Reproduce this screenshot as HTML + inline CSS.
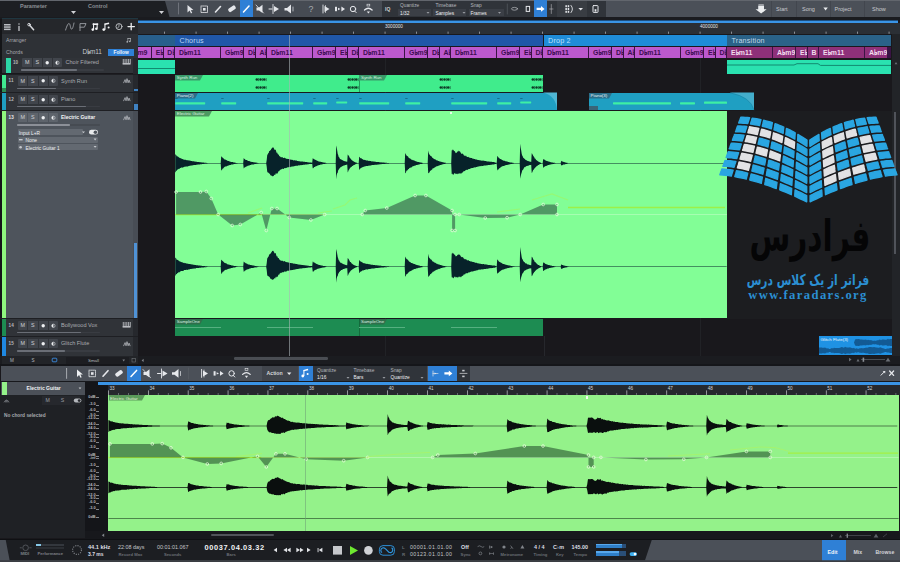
<!DOCTYPE html>
<html><head><meta charset="utf-8"><title>Studio One</title>
<style>
html,body{margin:0;padding:0;background:#18171b;}
#r{position:relative;width:900px;height:562px;overflow:hidden;background:#19181c;font-family:"Liberation Sans", sans-serif;}
#r div,#r span,#r svg{position:absolute;}
#r span{white-space:nowrap;}
</style></head><body><div id="r">
<div style="left:0px;top:0px;width:900px;height:17px;background:#4b5058;"></div>
<div style="left:165px;top:1px;width:217px;height:16px;background:#464b53;"></div>
<div style="left:0px;top:0px;width:900px;height:1px;background:#62666d;"></div>
<svg style="left:0;top:0" width="175" height="17"><polygon points="0,1 165,1 169.5,17 0,17" fill="#1d1f23"/></svg>
<span style="left:20px;top:4px;font-size:5.5px;line-height:5.5px;color:#8a8e94;font-weight:bold">Parameter</span>
<span style="left:88px;top:4px;font-size:5.5px;line-height:5.5px;color:#8a8e94;font-weight:bold">Control</span>
<svg style="left:0;top:0" width="175" height="17"><polygon points="71,11 76,11 73.5,14" fill="#d0d2d6"/><polygon points="159,11 164,11 161.5,14" fill="#d0d2d6"/></svg>
<div style="left:382px;top:1px;width:224px;height:16px;background:#30343a;"></div>
<div style="left:557px;top:1px;width:29.5px;height:16px;background:#393d43;"></div>
<div style="left:397.5px;top:9.4px;width:33px;height:6.6px;background:#3b3f46;"></div>
<div style="left:433px;top:9.4px;width:33px;height:6.6px;background:#3b3f46;"></div>
<div style="left:468.5px;top:9.4px;width:35px;height:6.6px;background:#3b3f46;"></div>
<div style="left:239.5px;top:0px;width:13.5px;height:17px;background:#2f80d6;"></div>
<div style="left:533.5px;top:0px;width:13.5px;height:17px;background:#2f80d6;"></div>
<svg style="left:0;top:0" width="900" height="17" fill="none" stroke="#e4e6ea" stroke-width="1.2" stroke-linecap="round">
<line x1="178.5" y1="3" x2="178.5" y2="14" stroke="#7a7e85" stroke-width="0.8"/>
<polygon points="187.5,5 187.5,12.5 189.6,10.6 191,13.4 192.2,12.8 190.8,10.2 193.4,10" fill="#e4e6ea" stroke="none"/>
<rect x="201" y="6" width="6.5" height="6.5" stroke-width="0.8" stroke-dasharray="1.2 0.8"/><rect x="203" y="8" width="2.6" height="2.6" fill="#e4e6ea" stroke="none"/>
<line x1="215.5" y1="12" x2="220.5" y2="6.5" stroke-width="1.6"/>
<rect x="228" y="6.8" width="8" height="4" rx="1.5" transform="rotate(-35 232 8.8)" fill="#e4e6ea" stroke="none"/>
<line x1="243.5" y1="12" x2="249" y2="6" stroke="#fff" stroke-width="1.5"/>
<polygon points="256.5,7.5 259,7.5 262.5,4.8 262.5,13 259,10.6 256.5,10.6" fill="#e4e6ea" stroke="none"/><line x1="256" y1="5" x2="263.5" y2="13" stroke-width="0.8"/>
<line x1="273" y1="4.5" x2="273" y2="13.5" stroke-width="0.9"/><polygon points="274,6 279,9 274,12" fill="#e4e6ea" stroke="none"/><line x1="269" y1="9" x2="272" y2="9" stroke-width="1"/>
<polygon points="284.5,8 287,8 291,4.6 291,13.4 287,10.4 284.5,10.4" fill="#e4e6ea" stroke="none"/><line x1="293" y1="7" x2="293" y2="11" stroke-width="0.7"/>
<text x="308.6" y="12.2" font-family="Liberation Sans, sans-serif" font-size="8.8" fill="#a8abb0" stroke="none">?</text>
<line x1="323" y1="5" x2="323" y2="13" stroke-width="0.9"/><polygon points="324.5,6 329.5,9 324.5,12" fill="#e4e6ea" stroke="none"/><line x1="325.5" y1="5.5" x2="325.5" y2="12.5" stroke-width="0.7"/>
<rect x="335" y="6.8" width="2" height="4.4" fill="#e4e6ea" stroke="none"/><polygon points="338,7.8 340.4,9 338,10.2" fill="#e4e6ea" stroke="none"/><polygon points="341.4,6.6 345,9 341.4,11.4" fill="#e4e6ea" stroke="none"/>
<circle cx="353" cy="9" r="2.7" stroke-width="1"/><line x1="354.6" y1="11" x2="356.2" y2="12.6" stroke-width="1"/>
<path d="M364.5,10 q3.8,-3.6 7.6,0" stroke-width="1.3"/><polygon points="366.8,11.4 370,11.4 368.4,13.6" fill="#e4e6ea" stroke="none"/><rect x="367" y="4.2" width="2.8" height="1.8" stroke-width="0.6"/>
<text x="385" y="11" font-family="Liberation Sans, sans-serif" font-size="5" font-weight="bold" fill="#c8cace" stroke="none">IQ</text>
<ellipse cx="514.5" cy="8.8" rx="3" ry="1.4" stroke-width="0.7" stroke="#b8babe"/>
<rect x="526.2" y="6.4" width="3.4" height="5" stroke-width="1" />
<polygon points="536.6,7.8 541,7.8 541,6 544.6,8.9 541,11.8 541,10 536.6,10" fill="#fff" stroke="none"/>
<line x1="551.3" y1="4.5" x2="551.3" y2="13.5" stroke-width="0.6" stroke="#b8babe"/><line x1="549.6" y1="9" x2="553" y2="9" stroke-width="0.6" stroke="#b8babe"/>
<g fill="#e4e6ea" stroke="none"><rect x="565.4" y="5.2" width="1.5" height="2"/><rect x="565.4" y="8" width="1.5" height="2"/><rect x="565.4" y="10.8" width="1.5" height="2"/><rect x="567.7" y="5.2" width="1.5" height="2"/><rect x="567.7" y="8" width="1.5" height="2"/><rect x="567.7" y="10.8" width="1.5" height="2"/></g>
<path d="M571,5.4 q3,3.6 0,7.2" stroke-width="0.9"/>
<polygon points="578.4,8 583,8 580.7,10.6" fill="#e4e6ea" stroke="none"/>
<rect x="593" y="5.6" width="5" height="6.8" rx="0.6" stroke-width="1"/><rect x="594.6" y="9.2" width="1.8" height="2.4" fill="#e4e6ea" stroke="none"/>
<line x1="507.3" y1="4" x2="507.3" y2="14" stroke="#585c63" stroke-width="0.7"/>
</svg>
<span style="left:400px;top:4px;font-size:4.8px;line-height:4.8px;color:#b4b7bc;">Quantize</span>
<span style="left:400px;top:12px;font-size:4.8px;line-height:4.8px;color:#eceef0;">1/32</span>
<span style="left:435.5px;top:4px;font-size:4.8px;line-height:4.8px;color:#b4b7bc;">Timebase</span>
<span style="left:435.5px;top:12px;font-size:4.8px;line-height:4.8px;color:#eceef0;">Samples</span>
<span style="left:470.5px;top:4px;font-size:4.8px;line-height:4.8px;color:#b4b7bc;">Snap</span>
<span style="left:470.5px;top:12px;font-size:4.8px;line-height:4.8px;color:#eceef0;">Frames</span>
<svg style="left:0;top:0" width="900" height="17" fill="#9a9da3"><polygon points="426.5,12 429.5,12 428,13.8"/><polygon points="462.5,12 465.5,12 464,13.8"/><polygon points="498,12 501,12 499.5,13.8"/></svg>
<div style="left:771px;top:1px;width:0.8px;height:16px;background:#42464e;"></div>
<div style="left:795.5px;top:1px;width:0.8px;height:16px;background:#42464e;"></div>
<div style="left:829.5px;top:1px;width:0.8px;height:16px;background:#42464e;"></div>
<div style="left:863.5px;top:1px;width:0.8px;height:16px;background:#42464e;"></div>
<svg style="left:754px;top:0" width="16" height="17"><polygon points="4.2,5.4 10,5.4 10,9.2 12.6,9.2 7.1,13.6 1.6,9.2 4.2,9.2" fill="#eceef0"/><rect x="4.4" y="4" width="5.4" height="1" fill="#9a9da3"/></svg>
<span style="left:776px;top:7px;font-size:5.5px;line-height:5.5px;color:#c8cace;">Start</span>
<span style="left:802px;top:7px;font-size:5.5px;line-height:5.5px;color:#c8cace;">Song</span>
<svg style="left:822px;top:0" width="8" height="17"><polygon points="1.4,7.6 5.8,7.6 3.6,10.6" fill="#eceef0"/></svg>
<span style="left:834.5px;top:7px;font-size:5.5px;line-height:5.5px;color:#c8cace;">Project</span>
<span style="left:872px;top:7px;font-size:5.5px;line-height:5.5px;color:#c8cace;">Show</span>
<div style="left:0px;top:17px;width:900px;height:3px;background:#1a1b1f;"></div>
<div style="left:138px;top:22.5px;width:762px;height:11.8px;background:#2b2f35;"></div>
<div style="left:138px;top:20px;width:760px;height:3px;background:#3a94e6;"></div>
<div style="left:138px;top:19.6px;width:760px;height:0.6px;background:#1d4f80;"></div>
<svg style="left:0;top:0" width="900" height="35"><rect x="164.2" y="31.6" width="0.7" height="2.2" fill="#b8bbc0"/><rect x="195.7" y="31.6" width="0.7" height="2.2" fill="#b8bbc0"/><rect x="227.2" y="31.6" width="0.7" height="2.2" fill="#b8bbc0"/><rect x="258.7" y="31.6" width="0.7" height="2.2" fill="#b8bbc0"/><rect x="290.2" y="31.6" width="0.7" height="2.2" fill="#b8bbc0"/><rect x="321.7" y="31.6" width="0.7" height="2.2" fill="#b8bbc0"/><rect x="353.2" y="31.6" width="0.7" height="2.2" fill="#b8bbc0"/><rect x="384.7" y="31.6" width="0.7" height="2.2" fill="#b8bbc0"/><rect x="416.2" y="31.6" width="0.7" height="2.2" fill="#b8bbc0"/><rect x="447.7" y="31.6" width="0.7" height="2.2" fill="#b8bbc0"/><rect x="479.2" y="31.6" width="0.7" height="2.2" fill="#b8bbc0"/><rect x="510.7" y="31.6" width="0.7" height="2.2" fill="#b8bbc0"/><rect x="542.2" y="31.6" width="0.7" height="2.2" fill="#b8bbc0"/><rect x="573.7" y="31.6" width="0.7" height="2.2" fill="#b8bbc0"/><rect x="605.2" y="31.6" width="0.7" height="2.2" fill="#b8bbc0"/><rect x="636.7" y="31.6" width="0.7" height="2.2" fill="#b8bbc0"/><rect x="668.2" y="31.6" width="0.7" height="2.2" fill="#b8bbc0"/><rect x="699.7" y="31.6" width="0.7" height="2.2" fill="#b8bbc0"/><rect x="731.2" y="31.6" width="0.7" height="2.2" fill="#b8bbc0"/><rect x="762.7" y="31.6" width="0.7" height="2.2" fill="#b8bbc0"/><rect x="794.2" y="31.6" width="0.7" height="2.2" fill="#b8bbc0"/><rect x="825.7" y="31.6" width="0.7" height="2.2" fill="#b8bbc0"/><rect x="857.2" y="31.6" width="0.7" height="2.2" fill="#b8bbc0"/><rect x="888.7" y="31.6" width="0.7" height="2.2" fill="#b8bbc0"/></svg>
<span style="left:385px;top:25px;font-size:4.6px;line-height:4.6px;color:#e0e2e6;">3000000</span>
<span style="left:700px;top:25px;font-size:4.6px;line-height:4.6px;color:#e0e2e6;">4000000</span>
<div style="left:138px;top:35px;width:36.6px;height:10.8px;background:#285f8c;"></div>
<div style="left:175.2px;top:35px;width:368.2px;height:10.8px;background:#2057a8;"></div>
<div style="left:544px;top:35px;width:182.6px;height:10.8px;background:#1f8cd8;"></div>
<div style="left:727.2px;top:35px;width:163.6px;height:10.8px;background:#2a6288;"></div>
<span style="left:179.5px;top:37px;font-size:7.2px;line-height:7.2px;color:#b8d4f4;letter-spacing:0.2px">Chorus</span>
<span style="left:548px;top:37px;font-size:7.2px;line-height:7.2px;color:#bfe0fa;letter-spacing:0.2px">Drop 2</span>
<span style="left:731.5px;top:37px;font-size:7.2px;line-height:7.2px;color:#c4d8e6;letter-spacing:0.2px">Transition</span>
<div style="left:138px;top:47px;width:753px;height:10.6px;background:#3a1444;"></div>
<div style="left:138px;top:47px;width:13.4px;height:10.6px;background:#bc59ce;overflow:hidden"><span style="left:-9px;top:2px;font-size:6.9px;line-height:8px;font-weight:bold;color:#3c0c50">G<span style="position:static;font-family:'DejaVu Sans',sans-serif;font-size:7.6px;letter-spacing:-0.5px;-webkit-text-stroke:0.45px currentColor">♭</span>m9</span></div>
<div style="left:152.0px;top:47px;width:10.7px;height:10.6px;background:#bc59ce;overflow:hidden"><span style="left:3.8px;top:2px;font-size:6.9px;line-height:8px;font-weight:bold;color:#3c0c50;letter-spacing:0.1px">E<span style="position:static;font-family:'DejaVu Sans',sans-serif;font-size:7.6px;letter-spacing:-0.5px;-webkit-text-stroke:0.45px currentColor">♭</span></span></div>
<div style="left:163.5px;top:47px;width:10.7px;height:10.6px;background:#bc59ce;overflow:hidden"><span style="left:3.8px;top:2px;font-size:6.9px;line-height:8px;font-weight:bold;color:#3c0c50;letter-spacing:0.1px">D<span style="position:static;font-family:'DejaVu Sans',sans-serif;font-size:7.6px;letter-spacing:-0.5px;-webkit-text-stroke:0.45px currentColor">♭</span></span></div>
<div style="left:175.2px;top:47px;width:45.2px;height:10.6px;background:#bc59ce;overflow:hidden"><span style="left:3.8px;top:2px;font-size:6.9px;line-height:8px;font-weight:bold;color:#3c0c50;letter-spacing:0.1px">D<span style="position:static;font-family:'DejaVu Sans',sans-serif;font-size:7.6px;letter-spacing:-0.5px;-webkit-text-stroke:0.45px currentColor">♭</span>m11</span></div>
<div style="left:221.2px;top:47px;width:22.2px;height:10.6px;background:#bc59ce;overflow:hidden"><span style="left:3.8px;top:2px;font-size:6.9px;line-height:8px;font-weight:bold;color:#3c0c50;letter-spacing:0.1px">G<span style="position:static;font-family:'DejaVu Sans',sans-serif;font-size:7.6px;letter-spacing:-0.5px;-webkit-text-stroke:0.45px currentColor">♭</span>m9</span></div>
<div style="left:244.2px;top:47px;width:10.7px;height:10.6px;background:#bc59ce;overflow:hidden"><span style="left:3.8px;top:2px;font-size:6.9px;line-height:8px;font-weight:bold;color:#3c0c50;letter-spacing:0.1px">D<span style="position:static;font-family:'DejaVu Sans',sans-serif;font-size:7.6px;letter-spacing:-0.5px;-webkit-text-stroke:0.45px currentColor">♭</span></span></div>
<div style="left:255.7px;top:47px;width:10.7px;height:10.6px;background:#bc59ce;overflow:hidden"><span style="left:3.8px;top:2px;font-size:6.9px;line-height:8px;font-weight:bold;color:#3c0c50;letter-spacing:0.1px">A<span style="position:static;font-family:'DejaVu Sans',sans-serif;font-size:7.6px;letter-spacing:-0.5px;-webkit-text-stroke:0.45px currentColor">♭</span></span></div>
<div style="left:267.2px;top:47px;width:45.2px;height:10.6px;background:#bc59ce;overflow:hidden"><span style="left:3.8px;top:2px;font-size:6.9px;line-height:8px;font-weight:bold;color:#3c0c50;letter-spacing:0.1px">D<span style="position:static;font-family:'DejaVu Sans',sans-serif;font-size:7.6px;letter-spacing:-0.5px;-webkit-text-stroke:0.45px currentColor">♭</span>m11</span></div>
<div style="left:313.2px;top:47px;width:22.2px;height:10.6px;background:#bc59ce;overflow:hidden"><span style="left:3.8px;top:2px;font-size:6.9px;line-height:8px;font-weight:bold;color:#3c0c50;letter-spacing:0.1px">G<span style="position:static;font-family:'DejaVu Sans',sans-serif;font-size:7.6px;letter-spacing:-0.5px;-webkit-text-stroke:0.45px currentColor">♭</span>m9</span></div>
<div style="left:336.2px;top:47px;width:10.7px;height:10.6px;background:#bc59ce;overflow:hidden"><span style="left:3.8px;top:2px;font-size:6.9px;line-height:8px;font-weight:bold;color:#3c0c50;letter-spacing:0.1px">E<span style="position:static;font-family:'DejaVu Sans',sans-serif;font-size:7.6px;letter-spacing:-0.5px;-webkit-text-stroke:0.45px currentColor">♭</span></span></div>
<div style="left:347.7px;top:47px;width:10.7px;height:10.6px;background:#bc59ce;overflow:hidden"><span style="left:3.8px;top:2px;font-size:6.9px;line-height:8px;font-weight:bold;color:#3c0c50;letter-spacing:0.1px">D<span style="position:static;font-family:'DejaVu Sans',sans-serif;font-size:7.6px;letter-spacing:-0.5px;-webkit-text-stroke:0.45px currentColor">♭</span></span></div>
<div style="left:359.2px;top:47px;width:45.2px;height:10.6px;background:#bc59ce;overflow:hidden"><span style="left:3.8px;top:2px;font-size:6.9px;line-height:8px;font-weight:bold;color:#3c0c50;letter-spacing:0.1px">D<span style="position:static;font-family:'DejaVu Sans',sans-serif;font-size:7.6px;letter-spacing:-0.5px;-webkit-text-stroke:0.45px currentColor">♭</span>m11</span></div>
<div style="left:405.2px;top:47px;width:22.2px;height:10.6px;background:#bc59ce;overflow:hidden"><span style="left:3.8px;top:2px;font-size:6.9px;line-height:8px;font-weight:bold;color:#3c0c50;letter-spacing:0.1px">G<span style="position:static;font-family:'DejaVu Sans',sans-serif;font-size:7.6px;letter-spacing:-0.5px;-webkit-text-stroke:0.45px currentColor">♭</span>m9</span></div>
<div style="left:428.2px;top:47px;width:10.7px;height:10.6px;background:#bc59ce;overflow:hidden"><span style="left:3.8px;top:2px;font-size:6.9px;line-height:8px;font-weight:bold;color:#3c0c50;letter-spacing:0.1px">D<span style="position:static;font-family:'DejaVu Sans',sans-serif;font-size:7.6px;letter-spacing:-0.5px;-webkit-text-stroke:0.45px currentColor">♭</span></span></div>
<div style="left:439.7px;top:47px;width:10.7px;height:10.6px;background:#bc59ce;overflow:hidden"><span style="left:3.8px;top:2px;font-size:6.9px;line-height:8px;font-weight:bold;color:#3c0c50;letter-spacing:0.1px">A<span style="position:static;font-family:'DejaVu Sans',sans-serif;font-size:7.6px;letter-spacing:-0.5px;-webkit-text-stroke:0.45px currentColor">♭</span></span></div>
<div style="left:451.2px;top:47px;width:45.2px;height:10.6px;background:#bc59ce;overflow:hidden"><span style="left:3.8px;top:2px;font-size:6.9px;line-height:8px;font-weight:bold;color:#3c0c50;letter-spacing:0.1px">D<span style="position:static;font-family:'DejaVu Sans',sans-serif;font-size:7.6px;letter-spacing:-0.5px;-webkit-text-stroke:0.45px currentColor">♭</span>m11</span></div>
<div style="left:497.2px;top:47px;width:22.2px;height:10.6px;background:#bc59ce;overflow:hidden"><span style="left:3.8px;top:2px;font-size:6.9px;line-height:8px;font-weight:bold;color:#3c0c50;letter-spacing:0.1px">G<span style="position:static;font-family:'DejaVu Sans',sans-serif;font-size:7.6px;letter-spacing:-0.5px;-webkit-text-stroke:0.45px currentColor">♭</span>m9</span></div>
<div style="left:520.2px;top:47px;width:10.7px;height:10.6px;background:#bc59ce;overflow:hidden"><span style="left:3.8px;top:2px;font-size:6.9px;line-height:8px;font-weight:bold;color:#3c0c50;letter-spacing:0.1px">E<span style="position:static;font-family:'DejaVu Sans',sans-serif;font-size:7.6px;letter-spacing:-0.5px;-webkit-text-stroke:0.45px currentColor">♭</span></span></div>
<div style="left:531.7px;top:47px;width:10.7px;height:10.6px;background:#bc59ce;overflow:hidden"><span style="left:3.8px;top:2px;font-size:6.9px;line-height:8px;font-weight:bold;color:#3c0c50;letter-spacing:0.1px">D<span style="position:static;font-family:'DejaVu Sans',sans-serif;font-size:7.6px;letter-spacing:-0.5px;-webkit-text-stroke:0.45px currentColor">♭</span></span></div>
<div style="left:543.2px;top:47px;width:45.2px;height:10.6px;background:#bc59ce;overflow:hidden"><span style="left:3.8px;top:2px;font-size:6.9px;line-height:8px;font-weight:bold;color:#3c0c50;letter-spacing:0.1px">D<span style="position:static;font-family:'DejaVu Sans',sans-serif;font-size:7.6px;letter-spacing:-0.5px;-webkit-text-stroke:0.45px currentColor">♭</span>m11</span></div>
<div style="left:589.2px;top:47px;width:22.2px;height:10.6px;background:#bc59ce;overflow:hidden"><span style="left:3.8px;top:2px;font-size:6.9px;line-height:8px;font-weight:bold;color:#3c0c50;letter-spacing:0.1px">G<span style="position:static;font-family:'DejaVu Sans',sans-serif;font-size:7.6px;letter-spacing:-0.5px;-webkit-text-stroke:0.45px currentColor">♭</span>m9</span></div>
<div style="left:612.2px;top:47px;width:10.7px;height:10.6px;background:#bc59ce;overflow:hidden"><span style="left:3.8px;top:2px;font-size:6.9px;line-height:8px;font-weight:bold;color:#3c0c50;letter-spacing:0.1px">D<span style="position:static;font-family:'DejaVu Sans',sans-serif;font-size:7.6px;letter-spacing:-0.5px;-webkit-text-stroke:0.45px currentColor">♭</span></span></div>
<div style="left:623.7px;top:47px;width:10.7px;height:10.6px;background:#bc59ce;overflow:hidden"><span style="left:3.8px;top:2px;font-size:6.9px;line-height:8px;font-weight:bold;color:#3c0c50;letter-spacing:0.1px">A<span style="position:static;font-family:'DejaVu Sans',sans-serif;font-size:7.6px;letter-spacing:-0.5px;-webkit-text-stroke:0.45px currentColor">♭</span></span></div>
<div style="left:635.2px;top:47px;width:45.2px;height:10.6px;background:#bc59ce;overflow:hidden"><span style="left:3.8px;top:2px;font-size:6.9px;line-height:8px;font-weight:bold;color:#3c0c50;letter-spacing:0.1px">D<span style="position:static;font-family:'DejaVu Sans',sans-serif;font-size:7.6px;letter-spacing:-0.5px;-webkit-text-stroke:0.45px currentColor">♭</span>m11</span></div>
<div style="left:681.2px;top:47px;width:22.2px;height:10.6px;background:#bc59ce;overflow:hidden"><span style="left:3.8px;top:2px;font-size:6.9px;line-height:8px;font-weight:bold;color:#3c0c50;letter-spacing:0.1px">G<span style="position:static;font-family:'DejaVu Sans',sans-serif;font-size:7.6px;letter-spacing:-0.5px;-webkit-text-stroke:0.45px currentColor">♭</span>m9</span></div>
<div style="left:704.2px;top:47px;width:10.7px;height:10.6px;background:#bc59ce;overflow:hidden"><span style="left:3.8px;top:2px;font-size:6.9px;line-height:8px;font-weight:bold;color:#3c0c50;letter-spacing:0.1px">E<span style="position:static;font-family:'DejaVu Sans',sans-serif;font-size:7.6px;letter-spacing:-0.5px;-webkit-text-stroke:0.45px currentColor">♭</span></span></div>
<div style="left:715.7px;top:47px;width:10.7px;height:10.6px;background:#bc59ce;overflow:hidden"><span style="left:3.8px;top:2px;font-size:6.9px;line-height:8px;font-weight:bold;color:#3c0c50;letter-spacing:0.1px">D<span style="position:static;font-family:'DejaVu Sans',sans-serif;font-size:7.6px;letter-spacing:-0.5px;-webkit-text-stroke:0.45px currentColor">♭</span></span></div>
<div style="left:727.2px;top:47px;width:45.2px;height:10.6px;background:#8e3079;overflow:hidden"><span style="left:3.8px;top:2px;font-size:6.9px;line-height:8px;font-weight:bold;color:#f2dcee;letter-spacing:0.1px">E<span style="position:static;font-family:'DejaVu Sans',sans-serif;font-size:7.6px;letter-spacing:-0.5px;-webkit-text-stroke:0.45px currentColor">♭</span>m11</span></div>
<div style="left:773.2px;top:47px;width:22.2px;height:10.6px;background:#8e3079;overflow:hidden"><span style="left:3.8px;top:2px;font-size:6.9px;line-height:8px;font-weight:bold;color:#f2dcee;letter-spacing:0.1px">A<span style="position:static;font-family:'DejaVu Sans',sans-serif;font-size:7.6px;letter-spacing:-0.5px;-webkit-text-stroke:0.45px currentColor">♭</span>m9</span></div>
<div style="left:796.2px;top:47px;width:10.7px;height:10.6px;background:#8e3079;overflow:hidden"><span style="left:3.8px;top:2px;font-size:6.9px;line-height:8px;font-weight:bold;color:#f2dcee;letter-spacing:0.1px">E<span style="position:static;font-family:'DejaVu Sans',sans-serif;font-size:7.6px;letter-spacing:-0.5px;-webkit-text-stroke:0.45px currentColor">♭</span></span></div>
<div style="left:807.7px;top:47px;width:10.7px;height:10.6px;background:#8e3079;overflow:hidden"><span style="left:3.8px;top:2px;font-size:6.9px;line-height:8px;font-weight:bold;color:#f2dcee;letter-spacing:0.1px">B</span></div>
<div style="left:819.2px;top:47px;width:45.2px;height:10.6px;background:#8e3079;overflow:hidden"><span style="left:3.8px;top:2px;font-size:6.9px;line-height:8px;font-weight:bold;color:#f2dcee;letter-spacing:0.1px">E<span style="position:static;font-family:'DejaVu Sans',sans-serif;font-size:7.6px;letter-spacing:-0.5px;-webkit-text-stroke:0.45px currentColor">♭</span>m11</span></div>
<div style="left:865.2px;top:47px;width:22.2px;height:10.6px;background:#8e3079;overflow:hidden"><span style="left:3.8px;top:2px;font-size:6.9px;line-height:8px;font-weight:bold;color:#f2dcee;letter-spacing:0.1px">A<span style="position:static;font-family:'DejaVu Sans',sans-serif;font-size:7.6px;letter-spacing:-0.5px;-webkit-text-stroke:0.45px currentColor">♭</span>m9</span></div>
<div style="left:384.7px;top:58px;width:0.6px;height:298px;background:#212226;"></div>
<div style="left:699.7px;top:58px;width:0.6px;height:298px;background:#212226;"></div>
<div style="left:138px;top:60px;width:36.8px;height:13.6px;background:#2ae2b0;"></div>
<div style="left:138px;top:67.6px;width:36.8px;height:1px;background:#128a70;"></div>
<div style="left:727.2px;top:60px;width:163.8px;height:13.6px;background:#2ae2b0;"></div>
<svg style="left:727px;top:60px" width="165" height="14"><path d="M0,5 L67,5 70,3.7 91,3.7 93.5,5.4 164,5.4" stroke="#128a70" stroke-width="1" fill="none"/></svg>
<div style="left:175.2px;top:74.6px;width:368.2px;height:17.4px;background:#40ec8c;"></div>
<div style="left:358.6px;top:74.6px;width:0.8px;height:17.4px;background:#249a5c;"></div>
<svg style="left:175.2px;top:74.6px" width="29" height="6"><polygon points="0,0 28,0 25,5.4 0,5.4" fill="#3a9a6a"/></svg><span style="left:176.79999999999998px;top:76px;font-size:4.4px;line-height:4.4px;color:#d8f4e0;">Synth Run</span>
<svg style="left:359.4px;top:74.6px" width="29" height="6"><polygon points="0,0 28,0 25,5.4 0,5.4" fill="#3a9a6a"/></svg><span style="left:361.0px;top:76px;font-size:4.4px;line-height:4.4px;color:#d8f4e0;">Synth Run</span>
<svg style="left:0;top:0" width="900" height="100"><circle cx="256.8" cy="79.6" r="1.25" fill="#0e3a26"/><circle cx="260.5" cy="79.6" r="1.25" fill="#0e3a26"/><circle cx="264.2" cy="79.6" r="1.25" fill="#0e3a26"/><rect x="258.4" y="78.1" width="0.6" height="3" fill="#0e3a26"/><rect x="262.1" y="78.1" width="0.6" height="3" fill="#0e3a26"/><rect x="265.8" y="78.1" width="0.6" height="3" fill="#0e3a26"/><circle cx="256.8" cy="87.6" r="1.25" fill="#0e3a26"/><circle cx="260.5" cy="87.6" r="1.25" fill="#0e3a26"/><circle cx="264.2" cy="87.6" r="1.25" fill="#0e3a26"/><rect x="258.4" y="86.1" width="0.6" height="3" fill="#0e3a26"/><rect x="262.1" y="86.1" width="0.6" height="3" fill="#0e3a26"/><rect x="265.8" y="86.1" width="0.6" height="3" fill="#0e3a26"/><circle cx="348.8" cy="79.6" r="1.25" fill="#0e3a26"/><circle cx="352.5" cy="79.6" r="1.25" fill="#0e3a26"/><circle cx="356.2" cy="79.6" r="1.25" fill="#0e3a26"/><rect x="350.4" y="78.1" width="0.6" height="3" fill="#0e3a26"/><rect x="354.1" y="78.1" width="0.6" height="3" fill="#0e3a26"/><rect x="357.8" y="78.1" width="0.6" height="3" fill="#0e3a26"/><circle cx="348.8" cy="87.6" r="1.25" fill="#0e3a26"/><circle cx="352.5" cy="87.6" r="1.25" fill="#0e3a26"/><circle cx="356.2" cy="87.6" r="1.25" fill="#0e3a26"/><rect x="350.4" y="86.1" width="0.6" height="3" fill="#0e3a26"/><rect x="354.1" y="86.1" width="0.6" height="3" fill="#0e3a26"/><rect x="357.8" y="86.1" width="0.6" height="3" fill="#0e3a26"/><circle cx="440.8" cy="79.6" r="1.25" fill="#0e3a26"/><circle cx="444.5" cy="79.6" r="1.25" fill="#0e3a26"/><circle cx="448.2" cy="79.6" r="1.25" fill="#0e3a26"/><rect x="442.4" y="78.1" width="0.6" height="3" fill="#0e3a26"/><rect x="446.1" y="78.1" width="0.6" height="3" fill="#0e3a26"/><rect x="449.8" y="78.1" width="0.6" height="3" fill="#0e3a26"/><circle cx="440.8" cy="87.6" r="1.25" fill="#0e3a26"/><circle cx="444.5" cy="87.6" r="1.25" fill="#0e3a26"/><circle cx="448.2" cy="87.6" r="1.25" fill="#0e3a26"/><rect x="442.4" y="86.1" width="0.6" height="3" fill="#0e3a26"/><rect x="446.1" y="86.1" width="0.6" height="3" fill="#0e3a26"/><rect x="449.8" y="86.1" width="0.6" height="3" fill="#0e3a26"/><circle cx="532.8" cy="79.6" r="1.25" fill="#0e3a26"/><circle cx="536.5" cy="79.6" r="1.25" fill="#0e3a26"/><circle cx="540.2" cy="79.6" r="1.25" fill="#0e3a26"/><rect x="534.4" y="78.1" width="0.6" height="3" fill="#0e3a26"/><rect x="538.1" y="78.1" width="0.6" height="3" fill="#0e3a26"/><rect x="541.8" y="78.1" width="0.6" height="3" fill="#0e3a26"/><circle cx="532.8" cy="87.6" r="1.25" fill="#0e3a26"/><circle cx="536.5" cy="87.6" r="1.25" fill="#0e3a26"/><circle cx="540.2" cy="87.6" r="1.25" fill="#0e3a26"/><rect x="534.4" y="86.1" width="0.6" height="3" fill="#0e3a26"/><rect x="538.1" y="86.1" width="0.6" height="3" fill="#0e3a26"/><rect x="541.8" y="86.1" width="0.6" height="3" fill="#0e3a26"/></svg>
<div style="left:175.2px;top:92.6px;width:382px;height:17.6px;background:#1f9fc2;"></div>
<div style="left:589px;top:92.6px;width:165px;height:17.6px;background:#1f9fc2;"></div>
<svg style="left:540px;top:92px" width="220" height="19"><path d="M3,0.6 L17,0.6 L17,18 Q16,4 3,0.6Z" fill="#4fb6d4"/><path d="M190,0.6 L214,0.6 L214,18.2 Q211,5 190,0.6Z" fill="#43adcb"/><path d="M190,0.8 Q211,5 214,18.2" stroke="#1a7e9c" stroke-width="0.5" fill="none"/></svg>
<svg style="left:175.2px;top:92.6px" width="24" height="6"><polygon points="0,0 23,0 20,5.4 0,5.4" fill="#2b6f8a"/></svg><span style="left:176.79999999999998px;top:94px;font-size:4.4px;line-height:4.4px;color:#e6f2f8;">Piano(2)</span>
<svg style="left:589px;top:92.6px" width="24" height="6"><polygon points="0,0 23,0 20,5.4 0,5.4" fill="#2b6f8a"/></svg><span style="left:590.6px;top:94px;font-size:4.4px;line-height:4.4px;color:#e6f2f8;">Piano(3)</span>
<div style="left:589px;top:105.6px;width:9px;height:4.6px;background:#3a6478;"></div>
<svg style="left:0;top:0" width="900" height="112"><rect x="175.2" y="102.2" width="30.0" height="2.2" rx="0.6" fill="#3ef0a4"/><rect x="221.2" y="102.2" width="15.0" height="2.2" rx="0.6" fill="#3ef0a4"/><rect x="175.2" y="98.4" width="2.4" height="0.6" fill="#16506a"/><rect x="221.2" y="98.4" width="2.4" height="0.6" fill="#16506a"/><rect x="267.2" y="102.2" width="36.0" height="2.2" rx="0.6" fill="#3ef0a4"/><rect x="313.2" y="102.2" width="14.0" height="2.2" rx="0.6" fill="#3ef0a4"/><rect x="336.2" y="101.4" width="11.0" height="2" rx="0.6" fill="#3ef0a4"/><rect x="267.2" y="98.4" width="2.4" height="0.6" fill="#16506a"/><rect x="313.2" y="98.4" width="2.4" height="0.6" fill="#16506a"/><rect x="336.2" y="98.4" width="2.4" height="0.6" fill="#16506a"/><rect x="359.2" y="102.2" width="30.0" height="2.2" rx="0.6" fill="#3ef0a4"/><rect x="405.2" y="102.2" width="15.0" height="2.2" rx="0.6" fill="#3ef0a4"/><rect x="359.2" y="98.4" width="2.4" height="0.6" fill="#16506a"/><rect x="405.2" y="98.4" width="2.4" height="0.6" fill="#16506a"/><rect x="451.2" y="102.2" width="36.0" height="2.2" rx="0.6" fill="#3ef0a4"/><rect x="497.2" y="102.2" width="14.0" height="2.2" rx="0.6" fill="#3ef0a4"/><rect x="520.2" y="101.4" width="11.0" height="2" rx="0.6" fill="#3ef0a4"/><rect x="451.2" y="98.4" width="2.4" height="0.6" fill="#16506a"/><rect x="497.2" y="98.4" width="2.4" height="0.6" fill="#16506a"/><rect x="520.2" y="98.4" width="2.4" height="0.6" fill="#16506a"/><rect x="613.0" y="102.2" width="58.0" height="2.2" rx="0.6" fill="#3ef0a4"/><rect x="680.0" y="102.2" width="15.0" height="2.2" rx="0.6" fill="#3ef0a4"/><rect x="704.0" y="101.6" width="23.0" height="2.2" rx="0.6" fill="#3ef0a4"/></svg>
<div style="left:175.2px;top:111px;width:551.8px;height:207px;background:#82fe96;"></div>
<svg style="left:175.2px;top:111px" width="38" height="6"><polygon points="0,0 37,0 34,5.4 0,5.4" fill="#4d9a62"/></svg><span style="left:176.79999999999998px;top:112px;font-size:4.4px;line-height:4.4px;color:#dff4e2;">Electric Guitar</span>
<div style="left:449.8px;top:111.8px;width:2.6px;height:2.6px;background:#e8fbe8;"></div>
<svg style="left:0;top:0" width="900" height="330"><rect x="175.2" y="214.1" width="551.8" height="0.7" fill="#c4fcc8" opacity="0.8"/><rect x="175.2" y="214" width="88" height="1.3" fill="#9cf048"/><rect x="263.2" y="214.1" width="62" height="0.9" fill="#a8f66a" opacity="0.7"/><polygon points="176.1,214.5 176.1,192.0 200.5,192.0 206.3,191.5 211.3,198.5 218.2,214.5 232.2,225.5 240.3,224.5 261.2,212.5 266.3,230.5 271.8,208.5 277.1,208.5 289.3,217.5 310.9,220.0 324.7,214.5 324.7,214.5" fill="rgba(40,70,60,0.55)"/><circle cx="176.1" cy="192.0" r="1.35" fill="none" stroke="#e6f8dc" stroke-width="0.75"/><circle cx="200.5" cy="192.0" r="1.35" fill="none" stroke="#e6f8dc" stroke-width="0.75"/><circle cx="206.3" cy="191.5" r="1.35" fill="none" stroke="#e6f8dc" stroke-width="0.75"/><circle cx="211.3" cy="198.5" r="1.35" fill="none" stroke="#e6f8dc" stroke-width="0.75"/><circle cx="218.2" cy="214.5" r="1.35" fill="none" stroke="#e6f8dc" stroke-width="0.75"/><circle cx="232.2" cy="225.5" r="1.35" fill="none" stroke="#e6f8dc" stroke-width="0.75"/><circle cx="240.3" cy="224.5" r="1.35" fill="none" stroke="#e6f8dc" stroke-width="0.75"/><circle cx="261.2" cy="212.5" r="1.35" fill="none" stroke="#e6f8dc" stroke-width="0.75"/><circle cx="266.3" cy="230.5" r="1.35" fill="none" stroke="#e6f8dc" stroke-width="0.75"/><circle cx="271.8" cy="208.5" r="1.35" fill="none" stroke="#e6f8dc" stroke-width="0.75"/><circle cx="277.1" cy="208.5" r="1.35" fill="none" stroke="#e6f8dc" stroke-width="0.75"/><circle cx="289.3" cy="217.5" r="1.35" fill="none" stroke="#e6f8dc" stroke-width="0.75"/><circle cx="310.9" cy="220.0" r="1.35" fill="none" stroke="#e6f8dc" stroke-width="0.75"/><circle cx="324.7" cy="214.5" r="1.35" fill="none" stroke="#e6f8dc" stroke-width="0.75"/><polygon points="362.2,214.5 362.2,214.5 365.2,210.5 386.8,208.0 415.1,195.5 425.9,195.5 452.1,210.5 452.1,230.5 455.1,230.5 455.1,214.5 459.2,214.5 485.2,218.0 507.1,217.7 520.2,214.5 543.2,204.5 557.0,204.5 557.0,214.5 557.0,214.5" fill="rgba(40,70,60,0.55)"/><circle cx="362.2" cy="214.5" r="1.35" fill="none" stroke="#e6f8dc" stroke-width="0.75"/><circle cx="365.2" cy="210.5" r="1.35" fill="none" stroke="#e6f8dc" stroke-width="0.75"/><circle cx="386.8" cy="208.0" r="1.35" fill="none" stroke="#e6f8dc" stroke-width="0.75"/><circle cx="415.1" cy="195.5" r="1.35" fill="none" stroke="#e6f8dc" stroke-width="0.75"/><circle cx="425.9" cy="195.5" r="1.35" fill="none" stroke="#e6f8dc" stroke-width="0.75"/><circle cx="452.1" cy="210.5" r="1.35" fill="none" stroke="#e6f8dc" stroke-width="0.75"/><circle cx="452.1" cy="230.5" r="1.35" fill="none" stroke="#e6f8dc" stroke-width="0.75"/><circle cx="455.1" cy="230.5" r="1.35" fill="none" stroke="#e6f8dc" stroke-width="0.75"/><circle cx="455.1" cy="214.5" r="1.35" fill="none" stroke="#e6f8dc" stroke-width="0.75"/><circle cx="459.2" cy="214.5" r="1.35" fill="none" stroke="#e6f8dc" stroke-width="0.75"/><circle cx="485.2" cy="218.0" r="1.35" fill="none" stroke="#e6f8dc" stroke-width="0.75"/><circle cx="507.1" cy="217.7" r="1.35" fill="none" stroke="#e6f8dc" stroke-width="0.75"/><circle cx="520.2" cy="214.5" r="1.35" fill="none" stroke="#e6f8dc" stroke-width="0.75"/><circle cx="543.2" cy="204.5" r="1.35" fill="none" stroke="#e6f8dc" stroke-width="0.75"/><circle cx="557.0" cy="204.5" r="1.35" fill="none" stroke="#e6f8dc" stroke-width="0.75"/><circle cx="557.0" cy="214.5" r="1.35" fill="none" stroke="#e6f8dc" stroke-width="0.75"/><path d="M568,207.4 L725,207.4" stroke="#9cf048" stroke-width="1.5" fill="none"/><path d="M248,213 L262,208 M333,209 L345,205 350,200 357,198 M497,212 L520,209 M532,200 L545,196 552,194 560,197 568,200 M318,213 L332,211" stroke="#a6f45a" stroke-width="1.2" fill="none" opacity="0.55"/><path d="M175.2,154.1 L175.7,154.7 L176.2,155.1 L176.7,156.3 L177.2,156.5 L177.7,156.3 L178.2,156.8 L178.7,157.3 L179.2,157.6 L179.7,158.0 L180.2,158.1 L180.7,158.3 L181.2,158.8 L181.7,158.6 L182.2,158.9 L182.7,159.0 L183.2,159.4 L183.7,159.5 L184.2,159.4 L184.7,159.9 L185.2,159.6 L185.7,159.9 L186.2,160.0 L186.7,160.2 L187.2,160.2 L187.7,160.3 L188.2,160.3 L188.7,160.5 L189.2,160.5 L189.7,160.6 L190.2,160.7 L190.7,160.8 L191.2,161.0 L191.7,160.9 L192.2,161.2 L192.7,161.2 L193.2,161.3 L193.7,161.3 L194.2,161.4 L194.7,161.5 L195.2,161.5 L195.7,161.7 L196.2,161.8 L196.7,161.8 L197.2,161.9 L197.7,161.9 L198.2,162.1 L198.7,162.1 L199.2,162.1 L199.7,162.2 L200.2,162.2 L200.7,162.3 L201.2,162.3 L201.7,162.4 L202.2,162.5 L202.7,162.5 L203.2,162.6 L203.7,162.6 L204.2,162.7 L204.7,162.7 L205.2,162.8 L205.7,162.8 L206.2,162.8 L206.7,162.9 L207.2,162.9 L207.7,163.0 L208.2,163.0 L208.7,163.0 L209.2,163.0 L209.7,163.0 L210.2,163.0 L210.7,163.0 L211.2,163.0 L211.7,163.0 L212.2,163.0 L212.7,163.0 L213.2,163.0 L213.7,163.0 L214.2,163.0 L214.7,163.0 L215.2,163.0 L215.7,163.0 L216.2,163.0 L216.7,163.0 L217.2,163.0 L217.7,163.0 L218.2,163.0 L218.7,163.0 L219.2,163.0 L219.7,163.0 L220.2,163.0 L220.7,163.0 L221.2,156.6 L221.7,156.4 L222.2,157.4 L222.7,157.5 L223.2,158.2 L223.7,158.6 L224.2,159.2 L224.7,159.5 L225.2,159.6 L225.7,159.8 L226.2,160.0 L226.7,160.2 L227.2,160.5 L227.7,161.0 L228.2,161.1 L228.7,161.1 L229.2,161.3 L229.7,161.4 L230.2,161.7 L230.7,161.7 L231.2,161.9 L231.7,162.0 L232.2,162.1 L232.7,162.1 L233.2,162.3 L233.7,162.4 L234.2,162.5 L234.7,162.6 L235.2,162.7 L235.7,162.7 L236.2,162.9 L236.7,162.9 L237.2,162.9 L237.7,163.0 L238.2,163.0 L238.7,163.0 L239.2,163.0 L239.7,163.0 L240.2,163.0 L240.7,163.0 L241.2,163.0 L241.7,163.0 L242.2,163.0 L242.7,163.0 L243.2,163.0 L243.7,158.1 L244.2,158.7 L244.7,159.0 L245.2,159.4 L245.7,159.9 L246.2,160.0 L246.7,160.0 L247.2,160.3 L247.7,160.8 L248.2,161.0 L248.7,161.0 L249.2,161.1 L249.7,161.3 L250.2,161.6 L250.7,161.7 L251.2,161.7 L251.7,161.9 L252.2,161.9 L252.7,162.1 L253.2,162.2 L253.7,162.2 L254.2,162.3 L254.7,162.4 L255.2,162.5 L255.7,162.6 L256.2,162.6 L256.7,162.8 L257.2,162.8 L257.7,162.9 L258.2,162.9 L258.7,163.0 L259.2,163.0 L259.7,163.0 L260.2,163.0 L260.7,163.0 L261.2,163.0 L261.7,163.0 L262.2,163.0 L262.7,163.0 L263.2,163.0 L263.7,163.0 L264.2,163.0 L264.7,163.0 L265.2,163.0 L265.7,163.0 L266.2,163.0 L266.7,159.9 L267.2,155.2 L267.7,154.3 L268.2,153.3 L268.7,153.0 L269.2,150.9 L269.7,151.0 L270.2,150.3 L270.7,150.2 L271.2,149.1 L271.7,148.6 L272.2,147.4 L272.7,147.7 L273.2,147.3 L273.7,148.1 L274.2,149.1 L274.7,150.0 L275.2,149.7 L275.7,149.8 L276.2,151.6 L276.7,153.0 L277.2,152.6 L277.7,154.1 L278.2,154.5 L278.7,154.6 L279.2,155.9 L279.7,156.3 L280.2,156.6 L280.7,157.3 L281.2,157.1 L281.7,157.5 L282.2,157.0 L282.7,157.5 L283.2,157.9 L283.7,158.1 L284.2,157.7 L284.7,157.8 L285.2,158.1 L285.7,158.6 L286.2,158.5 L286.7,158.9 L287.2,158.7 L287.7,159.0 L288.2,159.1 L288.7,159.1 L289.2,159.3 L289.7,159.3 L290.2,159.7 L290.7,159.5 L291.2,159.5 L291.7,159.9 L292.2,159.8 L292.7,159.9 L293.2,160.2 L293.7,160.4 L294.2,160.2 L294.7,160.3 L295.2,160.6 L295.7,160.4 L296.2,160.6 L296.7,160.6 L297.2,160.9 L297.7,160.9 L298.2,161.1 L298.7,161.2 L299.2,161.3 L299.7,161.2 L300.2,161.4 L300.7,161.4 L301.2,161.4 L301.7,161.5 L302.2,161.6 L302.7,161.6 L303.2,161.8 L303.7,161.7 L304.2,161.8 L304.7,161.8 L305.2,161.9 L305.7,162.0 L306.2,162.0 L306.7,162.1 L307.2,162.2 L307.7,162.3 L308.2,162.3 L308.7,162.4 L309.2,162.5 L309.7,162.6 L310.2,162.6 L310.7,162.6 L311.2,162.6 L311.7,162.7 L312.2,162.8 L312.7,158.2 L313.2,158.4 L313.7,159.0 L314.2,159.2 L314.7,159.4 L315.2,159.7 L315.7,160.1 L316.2,160.3 L316.7,160.5 L317.2,160.7 L317.7,161.1 L318.2,161.3 L318.7,161.4 L319.2,161.5 L319.7,161.7 L320.2,161.8 L320.7,161.8 L321.2,162.1 L321.7,162.1 L322.2,162.2 L322.7,162.3 L323.2,162.5 L323.7,162.5 L324.2,162.6 L324.7,162.7 L325.2,162.7 L325.7,162.8 L326.2,162.9 L326.7,163.0 L327.2,163.0 L327.7,163.0 L328.2,163.0 L328.7,163.0 L329.2,163.0 L329.7,163.0 L330.2,163.0 L330.7,163.0 L331.2,163.0 L331.7,163.0 L332.2,163.0 L332.7,163.0 L333.2,163.0 L333.7,163.0 L334.2,163.0 L334.7,163.0 L335.2,163.0 L335.7,163.0 L336.2,145.6 L336.7,147.5 L337.2,150.5 L337.7,153.7 L338.2,155.1 L338.7,156.9 L339.2,157.2 L339.7,158.4 L340.2,159.0 L340.7,159.3 L341.2,159.4 L341.7,159.8 L342.2,160.1 L342.7,160.3 L343.2,160.7 L343.7,160.8 L344.2,161.1 L344.7,161.2 L345.2,161.3 L345.7,161.5 L346.2,161.6 L346.7,161.8 L347.2,161.8 L347.7,154.6 L348.2,155.1 L348.7,155.8 L349.2,156.6 L349.7,157.8 L350.2,158.6 L350.7,158.6 L351.2,159.4 L351.7,160.1 L352.2,160.4 L352.7,160.8 L353.2,161.0 L353.7,161.5 L354.2,161.7 L354.7,162.0 L355.2,162.2 L355.7,162.4 L356.2,162.6 L356.7,162.7 L357.2,162.9 L357.7,163.0 L358.2,163.0 L358.7,163.0 L359.2,156.7 L359.7,157.1 L360.2,157.9 L360.7,158.2 L361.2,158.3 L361.7,158.6 L362.2,159.1 L362.7,159.2 L363.2,159.6 L363.7,159.9 L364.2,159.8 L364.7,159.9 L365.2,160.3 L365.7,160.1 L366.2,160.4 L366.7,160.6 L367.2,160.4 L367.7,160.6 L368.2,160.7 L368.7,160.9 L369.2,160.8 L369.7,160.9 L370.2,161.0 L370.7,161.0 L371.2,161.3 L371.7,161.4 L372.2,161.3 L372.7,161.4 L373.2,161.6 L373.7,161.6 L374.2,161.7 L374.7,161.6 L375.2,161.8 L375.7,161.8 L376.2,161.9 L376.7,161.9 L377.2,161.9 L377.7,162.1 L378.2,162.1 L378.7,162.1 L379.2,162.2 L379.7,162.3 L380.2,162.2 L380.7,162.4 L381.2,162.3 L381.7,162.5 L382.2,162.5 L382.7,162.6 L383.2,162.5 L383.7,162.5 L384.2,162.6 L384.7,162.7 L385.2,162.7 L385.7,162.8 L386.2,162.8 L386.7,162.8 L387.2,162.9 L387.7,162.9 L388.2,162.9 L388.7,162.9 L389.2,163.0 L389.7,163.0 L390.2,163.0 L390.7,163.0 L391.2,163.0 L391.7,163.0 L392.2,163.0 L392.7,163.0 L393.2,163.0 L393.7,163.0 L394.2,163.0 L394.7,163.0 L395.2,163.0 L395.7,163.0 L396.2,163.0 L396.7,163.0 L397.2,163.0 L397.7,163.0 L398.2,163.0 L398.7,163.0 L399.2,163.0 L399.7,163.0 L400.2,163.0 L400.7,163.0 L401.2,163.0 L401.7,163.0 L402.2,163.0 L402.7,163.0 L403.2,163.0 L403.7,163.0 L404.2,163.0 L404.7,163.0 L405.2,153.1 L405.7,154.1 L406.2,155.1 L406.7,155.7 L407.2,156.0 L407.7,156.2 L408.2,156.8 L408.7,157.7 L409.2,158.3 L409.7,158.3 L410.2,158.6 L410.7,159.1 L411.2,159.5 L411.7,159.7 L412.2,159.7 L412.7,160.2 L413.2,160.1 L413.7,160.6 L414.2,160.5 L414.7,160.7 L415.2,161.1 L415.7,161.2 L416.2,161.4 L416.7,161.6 L417.2,161.7 L417.7,161.9 L418.2,161.9 L418.7,162.0 L419.2,162.2 L419.7,162.3 L420.2,162.5 L420.7,162.6 L421.2,162.6 L421.7,162.7 L422.2,162.8 L422.7,162.9 L423.2,163.0 L423.7,163.0 L424.2,163.0 L424.7,163.0 L425.2,163.0 L425.7,163.0 L426.2,163.0 L426.7,163.0 L427.2,163.0 L427.7,163.0 L428.2,150.4 L428.7,152.8 L429.2,154.3 L429.7,154.8 L430.2,155.4 L430.7,156.1 L431.2,156.0 L431.7,156.7 L432.2,157.6 L432.7,158.0 L433.2,158.2 L433.7,158.7 L434.2,159.0 L434.7,159.2 L435.2,159.4 L435.7,159.5 L436.2,160.0 L436.7,160.4 L437.2,160.3 L437.7,160.8 L438.2,160.9 L438.7,161.0 L439.2,161.2 L439.7,161.4 L440.2,161.5 L440.7,161.7 L441.2,161.8 L441.7,161.9 L442.2,162.1 L442.7,162.3 L443.2,162.3 L443.7,162.5 L444.2,162.6 L444.7,162.7 L445.2,162.8 L445.7,162.8 L446.2,162.9 L446.7,163.0 L447.2,163.0 L447.7,163.0 L448.2,163.0 L448.7,163.0 L449.2,163.0 L449.7,163.0 L450.2,163.0 L450.7,163.0 L451.2,163.0 L451.7,150.2 L452.2,150.4 L452.7,149.2 L453.2,150.7 L453.7,149.5 L454.2,151.3 L454.7,151.1 L455.2,151.9 L455.7,153.2 L456.2,152.6 L456.7,152.9 L457.2,151.9 L457.7,151.6 L458.2,150.5 L458.7,151.6 L459.2,151.2 L459.7,151.3 L460.2,151.8 L460.7,152.8 L461.2,153.4 L461.7,153.9 L462.2,153.6 L462.7,153.8 L463.2,154.1 L463.7,155.2 L464.2,155.3 L464.7,155.9 L465.2,156.2 L465.7,155.6 L466.2,155.8 L466.7,156.7 L467.2,157.0 L467.7,156.9 L468.2,156.7 L468.7,157.2 L469.2,157.6 L469.7,157.7 L470.2,157.8 L470.7,158.1 L471.2,158.0 L471.7,158.1 L472.2,158.3 L472.7,158.7 L473.2,158.7 L473.7,158.7 L474.2,159.0 L474.7,158.9 L475.2,159.2 L475.7,159.5 L476.2,159.4 L476.7,159.4 L477.2,159.8 L477.7,159.9 L478.2,159.9 L478.7,160.0 L479.2,160.4 L479.7,160.1 L480.2,160.3 L480.7,160.4 L481.2,160.5 L481.7,160.7 L482.2,160.5 L482.7,160.8 L483.2,160.6 L483.7,160.7 L484.2,160.8 L484.7,161.1 L485.2,160.9 L485.7,161.1 L486.2,161.2 L486.7,161.2 L487.2,161.4 L487.7,161.4 L488.2,161.5 L488.7,161.6 L489.2,161.5 L489.7,161.7 L490.2,161.7 L490.7,161.8 L491.2,161.8 L491.7,161.8 L492.2,162.0 L492.7,162.1 L493.2,162.0 L493.7,162.1 L494.2,162.2 L494.7,162.2 L495.2,162.4 L495.7,162.7 L496.2,162.8 L496.7,163.0 L497.2,156.2 L497.7,156.3 L498.2,157.1 L498.7,157.8 L499.2,158.3 L499.7,158.6 L500.2,158.9 L500.7,159.0 L501.2,159.4 L501.7,159.6 L502.2,160.0 L502.7,160.3 L503.2,160.6 L503.7,160.7 L504.2,160.8 L504.7,160.8 L505.2,161.2 L505.7,161.3 L506.2,161.3 L506.7,161.6 L507.2,161.6 L507.7,161.8 L508.2,161.9 L508.7,162.0 L509.2,162.2 L509.7,162.2 L510.2,162.4 L510.7,162.4 L511.2,162.5 L511.7,162.6 L512.2,162.7 L512.7,162.8 L513.2,162.8 L513.7,162.9 L514.2,162.9 L514.7,163.0 L515.2,163.0 L515.7,163.0 L516.2,163.0 L516.7,163.0 L517.2,163.0 L517.7,163.0 L518.2,163.0 L518.7,163.0 L519.2,163.0 L519.7,163.0 L520.2,143.7 L520.7,147.4 L521.2,150.6 L521.7,153.8 L522.2,155.6 L522.7,156.2 L523.2,157.7 L523.7,158.0 L524.2,158.7 L524.7,158.8 L525.2,159.6 L525.7,160.0 L526.2,160.2 L526.7,160.2 L527.2,160.8 L527.7,161.0 L528.2,160.9 L528.7,161.3 L529.2,161.4 L529.7,161.5 L530.2,161.7 L530.7,161.8 L531.2,161.9 L531.7,153.3 L532.2,153.7 L532.7,154.7 L533.2,155.8 L533.7,156.6 L534.2,157.1 L534.7,158.5 L535.2,158.5 L535.7,159.2 L536.2,159.9 L536.7,160.2 L537.2,160.8 L537.7,161.1 L538.2,161.5 L538.7,161.7 L539.2,161.9 L539.7,162.3 L540.2,162.5 L540.7,162.7 L541.2,162.9 L541.7,163.0 L542.2,163.0 L542.7,163.0 L543.2,158.8 L543.7,159.4 L544.2,159.4 L544.7,159.8 L545.2,160.3 L545.7,160.6 L546.2,160.7 L546.7,161.1 L547.2,161.1 L547.7,161.3 L548.2,161.6 L548.7,161.6 L549.2,161.7 L549.7,161.8 L550.2,162.0 L550.7,162.2 L551.2,162.2 L551.7,162.4 L552.2,162.5 L552.7,162.5 L553.2,162.7 L553.7,162.7 L554.2,162.8 L554.7,162.8 L555.2,162.9 L555.7,163.0 L556.2,163.0 L556.7,163.0 L557.2,163.0 L557.7,163.0 L558.2,163.0 L558.7,163.0 L559.2,163.0 L559.7,163.0 L560.2,163.0 L560.7,163.0 L561.2,160.8 L561.7,161.3 L562.2,161.5 L562.7,161.5 L563.2,161.8 L563.7,162.0 L564.2,162.1 L564.7,162.3 L565.2,162.4 L565.7,162.5 L566.2,162.7 L566.7,162.7 L567.2,162.8 L567.7,162.9 L568.2,162.9 L568.7,163.0 L569.2,163.0 L569.7,163.0 L570.2,163.0 L570.7,163.0 L571.2,163.0 L571.7,163.0 L572.2,163.0 L572.7,163.0 L573.2,163.0 L573.7,163.0 L574.2,163.0 L574.7,163.0 L575.2,163.0 L575.7,163.0 L576.2,163.0 L576.7,163.0 L577.2,163.0 L577.7,163.0 L578.2,163.0 L578.7,163.0 L579.2,163.0 L579.7,163.0 L580.2,163.0 L580.7,163.0 L581.2,163.0 L581.7,163.0 L582.2,163.0 L582.7,163.0 L583.2,163.0 L583.7,163.0 L584.2,163.0 L584.7,163.0 L585.2,163.0 L585.7,163.0 L586.2,163.0 L586.7,163.0 L587.2,163.0 L587.7,163.0 L588.2,163.0 L588.7,163.0 L589.2,163.0 L589.7,163.0 L590.2,163.0 L590.7,163.0 L591.2,163.0 L591.7,163.0 L592.2,163.0 L592.7,163.0 L593.2,163.0 L593.7,163.0 L594.2,163.0 L594.7,163.0 L595.2,163.0 L595.7,163.0 L596.2,163.0 L596.7,163.0 L597.2,163.0 L597.7,163.0 L598.2,163.0 L598.7,163.0 L599.2,163.0 L599.7,163.0 L600.2,163.0 L600.7,163.0 L601.2,163.0 L601.7,163.0 L602.2,163.0 L602.7,163.0 L603.2,163.0 L603.7,163.0 L604.2,163.0 L604.7,163.0 L605.2,163.0 L605.7,163.0 L606.2,163.0 L606.7,163.0 L607.2,163.0 L607.7,163.0 L608.2,163.0 L608.7,163.0 L609.2,163.0 L609.7,163.0 L610.2,163.0 L610.7,163.0 L611.2,163.0 L611.7,163.0 L612.2,163.0 L612.7,163.0 L613.2,163.0 L613.7,163.0 L614.2,163.0 L614.7,163.0 L615.2,163.0 L615.7,163.0 L616.2,163.0 L616.7,163.0 L617.2,163.0 L617.7,163.0 L618.2,163.0 L618.7,163.0 L619.2,163.0 L619.7,163.0 L620.2,163.0 L620.7,163.0 L621.2,163.0 L621.7,163.0 L622.2,163.0 L622.7,163.0 L623.2,163.0 L623.7,163.0 L624.2,163.0 L624.7,163.0 L625.2,163.0 L625.7,163.0 L626.2,163.0 L626.7,163.0 L627.2,163.0 L627.7,163.0 L628.2,163.0 L628.7,163.0 L629.2,163.0 L629.7,163.0 L630.2,163.0 L630.7,163.0 L631.2,163.0 L631.7,163.0 L632.2,163.0 L632.7,163.0 L633.2,163.0 L633.7,163.0 L634.2,163.0 L634.7,163.0 L635.2,163.0 L635.7,163.0 L636.2,163.0 L636.7,163.0 L637.2,163.0 L637.7,163.0 L638.2,163.0 L638.7,163.0 L639.2,163.0 L639.7,163.0 L640.2,163.0 L640.7,163.0 L641.2,163.0 L641.7,163.0 L642.2,163.0 L642.7,163.0 L643.2,163.0 L643.7,163.0 L644.2,163.0 L644.7,163.0 L645.2,163.0 L645.7,163.0 L646.2,163.0 L646.7,163.0 L647.2,163.0 L647.7,163.0 L648.2,163.0 L648.7,163.0 L649.2,163.0 L649.7,163.0 L650.2,163.0 L650.7,163.0 L651.2,163.0 L651.7,163.0 L652.2,163.0 L652.7,163.0 L653.2,163.0 L653.7,163.0 L654.2,163.0 L654.7,163.0 L655.2,163.0 L655.7,163.0 L656.2,163.0 L656.7,163.0 L657.2,163.0 L657.7,163.0 L658.2,163.0 L658.7,163.0 L659.2,163.0 L659.7,163.0 L660.2,163.0 L660.7,163.0 L661.2,163.0 L661.7,163.0 L662.2,163.0 L662.7,163.0 L663.2,163.0 L663.7,163.0 L664.2,163.0 L664.7,163.0 L665.2,163.0 L665.7,163.0 L666.2,163.0 L666.7,163.0 L667.2,163.0 L667.7,163.0 L668.2,163.0 L668.7,163.0 L669.2,163.0 L669.7,163.0 L670.2,163.0 L670.7,163.0 L671.2,163.0 L671.7,163.0 L672.2,163.0 L672.7,163.0 L673.2,163.0 L673.7,163.0 L674.2,163.0 L674.7,163.0 L675.2,163.0 L675.7,163.0 L676.2,163.0 L676.7,163.0 L677.2,163.0 L677.7,163.0 L678.2,163.0 L678.7,163.0 L679.2,163.0 L679.7,163.0 L680.2,163.0 L680.7,163.0 L681.2,163.0 L681.7,163.0 L682.2,163.0 L682.7,163.0 L683.2,163.0 L683.7,163.0 L684.2,163.0 L684.7,163.0 L685.2,163.0 L685.7,163.0 L686.2,163.0 L686.7,163.0 L687.2,163.0 L687.7,163.0 L688.2,163.0 L688.7,163.0 L689.2,163.0 L689.7,163.0 L690.2,163.0 L690.7,163.0 L691.2,163.0 L691.7,163.0 L692.2,163.0 L692.7,163.0 L693.2,163.0 L693.7,163.0 L694.2,163.0 L694.7,163.0 L695.2,163.0 L695.7,163.0 L696.2,163.0 L696.7,163.0 L697.2,163.0 L697.7,163.0 L698.2,163.0 L698.7,163.0 L699.2,163.0 L699.7,163.0 L700.2,163.0 L700.7,163.0 L701.2,163.0 L701.7,163.0 L702.2,163.0 L702.7,163.0 L703.2,163.0 L703.7,163.0 L704.2,163.0 L704.7,163.0 L705.2,163.0 L705.7,163.0 L706.2,163.0 L706.7,163.0 L707.2,163.0 L707.7,163.0 L708.2,163.0 L708.7,163.0 L709.2,163.0 L709.7,163.0 L710.2,163.0 L710.7,163.0 L711.2,163.0 L711.7,163.0 L712.2,163.0 L712.7,163.0 L713.2,163.0 L713.7,163.0 L714.2,163.0 L714.7,163.0 L715.2,163.0 L715.7,163.0 L716.2,163.0 L716.7,163.0 L717.2,163.0 L717.7,163.0 L718.2,163.0 L718.7,163.0 L719.2,163.0 L719.7,163.0 L720.2,163.0 L720.7,163.0 L721.2,163.0 L721.7,163.0 L722.2,163.0 L722.7,163.0 L723.2,163.0 L723.7,163.0 L724.2,163.0 L724.7,163.0 L725.2,163.0 L725.7,163.0 L726.2,163.0 L726.7,163.0 L726.7,163.6 L726.2,163.6 L725.7,163.6 L725.2,163.6 L724.7,163.6 L724.2,163.6 L723.7,163.6 L723.2,163.6 L722.7,163.6 L722.2,163.6 L721.7,163.6 L721.2,163.6 L720.7,163.6 L720.2,163.6 L719.7,163.6 L719.2,163.6 L718.7,163.6 L718.2,163.6 L717.7,163.6 L717.2,163.6 L716.7,163.6 L716.2,163.6 L715.7,163.6 L715.2,163.6 L714.7,163.6 L714.2,163.6 L713.7,163.6 L713.2,163.6 L712.7,163.6 L712.2,163.6 L711.7,163.6 L711.2,163.6 L710.7,163.6 L710.2,163.6 L709.7,163.6 L709.2,163.6 L708.7,163.6 L708.2,163.6 L707.7,163.6 L707.2,163.6 L706.7,163.6 L706.2,163.6 L705.7,163.6 L705.2,163.6 L704.7,163.6 L704.2,163.6 L703.7,163.6 L703.2,163.6 L702.7,163.6 L702.2,163.6 L701.7,163.6 L701.2,163.6 L700.7,163.6 L700.2,163.6 L699.7,163.6 L699.2,163.6 L698.7,163.6 L698.2,163.6 L697.7,163.6 L697.2,163.6 L696.7,163.6 L696.2,163.6 L695.7,163.6 L695.2,163.6 L694.7,163.6 L694.2,163.6 L693.7,163.6 L693.2,163.6 L692.7,163.6 L692.2,163.6 L691.7,163.6 L691.2,163.6 L690.7,163.6 L690.2,163.6 L689.7,163.6 L689.2,163.6 L688.7,163.6 L688.2,163.6 L687.7,163.6 L687.2,163.6 L686.7,163.6 L686.2,163.6 L685.7,163.6 L685.2,163.6 L684.7,163.6 L684.2,163.6 L683.7,163.6 L683.2,163.6 L682.7,163.6 L682.2,163.6 L681.7,163.6 L681.2,163.6 L680.7,163.6 L680.2,163.6 L679.7,163.6 L679.2,163.6 L678.7,163.6 L678.2,163.6 L677.7,163.6 L677.2,163.6 L676.7,163.6 L676.2,163.6 L675.7,163.6 L675.2,163.6 L674.7,163.6 L674.2,163.6 L673.7,163.6 L673.2,163.6 L672.7,163.6 L672.2,163.6 L671.7,163.6 L671.2,163.6 L670.7,163.6 L670.2,163.6 L669.7,163.6 L669.2,163.6 L668.7,163.6 L668.2,163.6 L667.7,163.6 L667.2,163.6 L666.7,163.6 L666.2,163.6 L665.7,163.6 L665.2,163.6 L664.7,163.6 L664.2,163.6 L663.7,163.6 L663.2,163.6 L662.7,163.6 L662.2,163.6 L661.7,163.6 L661.2,163.6 L660.7,163.6 L660.2,163.6 L659.7,163.6 L659.2,163.6 L658.7,163.6 L658.2,163.6 L657.7,163.6 L657.2,163.6 L656.7,163.6 L656.2,163.6 L655.7,163.6 L655.2,163.6 L654.7,163.6 L654.2,163.6 L653.7,163.6 L653.2,163.6 L652.7,163.6 L652.2,163.6 L651.7,163.6 L651.2,163.6 L650.7,163.6 L650.2,163.6 L649.7,163.6 L649.2,163.6 L648.7,163.6 L648.2,163.6 L647.7,163.6 L647.2,163.6 L646.7,163.6 L646.2,163.6 L645.7,163.6 L645.2,163.6 L644.7,163.6 L644.2,163.6 L643.7,163.6 L643.2,163.6 L642.7,163.6 L642.2,163.6 L641.7,163.6 L641.2,163.6 L640.7,163.6 L640.2,163.6 L639.7,163.6 L639.2,163.6 L638.7,163.6 L638.2,163.6 L637.7,163.6 L637.2,163.6 L636.7,163.6 L636.2,163.6 L635.7,163.6 L635.2,163.6 L634.7,163.6 L634.2,163.6 L633.7,163.6 L633.2,163.6 L632.7,163.6 L632.2,163.6 L631.7,163.6 L631.2,163.6 L630.7,163.6 L630.2,163.6 L629.7,163.6 L629.2,163.6 L628.7,163.6 L628.2,163.6 L627.7,163.6 L627.2,163.6 L626.7,163.6 L626.2,163.6 L625.7,163.6 L625.2,163.6 L624.7,163.6 L624.2,163.6 L623.7,163.6 L623.2,163.6 L622.7,163.6 L622.2,163.6 L621.7,163.6 L621.2,163.6 L620.7,163.6 L620.2,163.6 L619.7,163.6 L619.2,163.6 L618.7,163.6 L618.2,163.6 L617.7,163.6 L617.2,163.6 L616.7,163.6 L616.2,163.6 L615.7,163.6 L615.2,163.6 L614.7,163.6 L614.2,163.6 L613.7,163.6 L613.2,163.6 L612.7,163.6 L612.2,163.6 L611.7,163.6 L611.2,163.6 L610.7,163.6 L610.2,163.6 L609.7,163.6 L609.2,163.6 L608.7,163.6 L608.2,163.6 L607.7,163.6 L607.2,163.6 L606.7,163.6 L606.2,163.6 L605.7,163.6 L605.2,163.6 L604.7,163.6 L604.2,163.6 L603.7,163.6 L603.2,163.6 L602.7,163.6 L602.2,163.6 L601.7,163.6 L601.2,163.6 L600.7,163.6 L600.2,163.6 L599.7,163.6 L599.2,163.6 L598.7,163.6 L598.2,163.6 L597.7,163.6 L597.2,163.6 L596.7,163.6 L596.2,163.6 L595.7,163.6 L595.2,163.6 L594.7,163.6 L594.2,163.6 L593.7,163.6 L593.2,163.6 L592.7,163.6 L592.2,163.6 L591.7,163.6 L591.2,163.6 L590.7,163.6 L590.2,163.6 L589.7,163.6 L589.2,163.6 L588.7,163.6 L588.2,163.6 L587.7,163.6 L587.2,163.6 L586.7,163.6 L586.2,163.6 L585.7,163.6 L585.2,163.6 L584.7,163.6 L584.2,163.6 L583.7,163.6 L583.2,163.6 L582.7,163.6 L582.2,163.6 L581.7,163.6 L581.2,163.6 L580.7,163.6 L580.2,163.6 L579.7,163.6 L579.2,163.6 L578.7,163.6 L578.2,163.6 L577.7,163.6 L577.2,163.6 L576.7,163.6 L576.2,163.6 L575.7,163.6 L575.2,163.6 L574.7,163.6 L574.2,163.6 L573.7,163.6 L573.2,163.6 L572.7,163.6 L572.2,163.6 L571.7,163.6 L571.2,163.6 L570.7,163.6 L570.2,163.6 L569.7,163.6 L569.2,163.6 L568.7,163.6 L568.2,163.6 L567.7,163.7 L567.2,163.8 L566.7,163.9 L566.2,164.0 L565.7,164.1 L565.2,164.2 L564.7,164.4 L564.2,164.4 L563.7,164.5 L563.2,164.6 L562.7,165.0 L562.2,165.2 L561.7,165.3 L561.2,165.5 L560.7,163.6 L560.2,163.6 L559.7,163.6 L559.2,163.6 L558.7,163.6 L558.2,163.6 L557.7,163.6 L557.2,163.6 L556.7,163.6 L556.2,163.6 L555.7,163.6 L555.2,163.7 L554.7,163.7 L554.2,163.8 L553.7,163.9 L553.2,163.9 L552.7,164.0 L552.2,164.2 L551.7,164.3 L551.2,164.2 L550.7,164.4 L550.2,164.6 L549.7,164.7 L549.2,164.7 L548.7,165.0 L548.2,165.0 L547.7,165.2 L547.2,165.4 L546.7,165.7 L546.2,165.9 L545.7,166.1 L545.2,166.2 L544.7,166.5 L544.2,166.9 L543.7,167.5 L543.2,167.7 L542.7,163.6 L542.2,163.6 L541.7,163.6 L541.2,163.7 L540.7,163.9 L540.2,164.1 L539.7,164.3 L539.2,164.6 L538.7,164.9 L538.2,165.1 L537.7,165.5 L537.2,165.9 L536.7,166.0 L536.2,166.7 L535.7,167.2 L535.2,167.6 L534.7,168.4 L534.2,168.5 L533.7,169.7 L533.2,170.0 L532.7,171.3 L532.2,172.4 L531.7,172.9 L531.2,164.8 L530.7,164.9 L530.2,165.0 L529.7,165.0 L529.2,165.2 L528.7,165.4 L528.2,165.7 L527.7,165.8 L527.2,165.9 L526.7,166.1 L526.2,166.3 L525.7,166.6 L525.2,167.2 L524.7,167.1 L524.2,167.5 L523.7,168.4 L523.2,169.4 L522.7,169.9 L522.2,170.5 L521.7,172.4 L521.2,173.9 L520.7,176.2 L520.2,178.8 L519.7,163.6 L519.2,163.6 L518.7,163.6 L518.2,163.6 L517.7,163.6 L517.2,163.6 L516.7,163.6 L516.2,163.6 L515.7,163.6 L515.2,163.6 L514.7,163.6 L514.2,163.6 L513.7,163.7 L513.2,163.7 L512.7,163.8 L512.2,163.9 L511.7,164.0 L511.2,164.1 L510.7,164.1 L510.2,164.2 L509.7,164.3 L509.2,164.4 L508.7,164.5 L508.2,164.7 L507.7,164.7 L507.2,164.9 L506.7,165.1 L506.2,165.1 L505.7,165.3 L505.2,165.3 L504.7,165.6 L504.2,165.9 L503.7,166.0 L503.2,166.1 L502.7,166.1 L502.2,166.6 L501.7,166.6 L501.2,167.0 L500.7,167.3 L500.2,167.8 L499.7,168.0 L499.2,168.5 L498.7,169.0 L498.2,169.7 L497.7,169.6 L497.2,170.8 L496.7,163.6 L496.2,163.7 L495.7,163.9 L495.2,164.1 L494.7,164.3 L494.2,164.3 L493.7,164.4 L493.2,164.4 L492.7,164.5 L492.2,164.5 L491.7,164.7 L491.2,164.8 L490.7,164.7 L490.2,164.9 L489.7,164.9 L489.2,164.9 L488.7,165.0 L488.2,165.1 L487.7,165.3 L487.2,165.3 L486.7,165.3 L486.2,165.4 L485.7,165.5 L485.2,165.5 L484.7,165.6 L484.2,165.6 L483.7,165.8 L483.2,165.8 L482.7,166.0 L482.2,165.9 L481.7,165.8 L481.2,166.2 L480.7,166.1 L480.2,166.3 L479.7,166.2 L479.2,166.3 L478.7,166.4 L478.2,166.4 L477.7,166.5 L477.2,167.0 L476.7,167.1 L476.2,166.9 L475.7,167.4 L475.2,167.3 L474.7,167.6 L474.2,167.3 L473.7,167.8 L473.2,167.8 L472.7,168.1 L472.2,168.1 L471.7,168.0 L471.2,168.2 L470.7,168.5 L470.2,168.4 L469.7,169.1 L469.2,168.9 L468.7,169.2 L468.2,169.1 L467.7,169.9 L467.2,169.8 L466.7,169.7 L466.2,170.1 L465.7,169.9 L465.2,170.8 L464.7,171.2 L464.2,170.9 L463.7,171.0 L463.2,172.1 L462.7,172.7 L462.2,172.3 L461.7,172.9 L461.2,173.8 L460.7,173.0 L460.2,174.0 L459.7,172.8 L459.2,173.9 L458.7,173.2 L458.2,174.0 L457.7,174.3 L457.2,173.5 L456.7,173.7 L456.2,174.1 L455.7,173.2 L455.2,174.3 L454.7,173.3 L454.2,173.1 L453.7,175.1 L453.2,174.3 L452.7,174.5 L452.2,173.4 L451.7,174.2 L451.2,163.6 L450.7,163.6 L450.2,163.6 L449.7,163.6 L449.2,163.6 L448.7,163.6 L448.2,163.6 L447.7,163.6 L447.2,163.6 L446.7,163.6 L446.2,163.6 L445.7,163.7 L445.2,163.8 L444.7,163.9 L444.2,164.0 L443.7,164.1 L443.2,164.2 L442.7,164.3 L442.2,164.4 L441.7,164.7 L441.2,164.7 L440.7,164.9 L440.2,165.0 L439.7,165.3 L439.2,165.5 L438.7,165.4 L438.2,165.9 L437.7,166.0 L437.2,166.2 L436.7,166.3 L436.2,166.6 L435.7,166.8 L435.2,167.2 L434.7,167.3 L434.2,167.9 L433.7,168.0 L433.2,168.4 L432.7,168.3 L432.2,169.4 L431.7,169.7 L431.2,170.3 L430.7,170.6 L430.2,170.9 L429.7,171.8 L429.2,172.7 L428.7,173.3 L428.2,173.0 L427.7,163.6 L427.2,163.6 L426.7,163.6 L426.2,163.6 L425.7,163.6 L425.2,163.6 L424.7,163.6 L424.2,163.6 L423.7,163.6 L423.2,163.6 L422.7,163.7 L422.2,163.8 L421.7,163.9 L421.2,163.9 L420.7,164.1 L420.2,164.1 L419.7,164.3 L419.2,164.4 L418.7,164.4 L418.2,164.7 L417.7,164.7 L417.2,165.0 L416.7,164.9 L416.2,165.1 L415.7,165.5 L415.2,165.4 L414.7,165.7 L414.2,165.7 L413.7,166.2 L413.2,166.1 L412.7,166.3 L412.2,166.8 L411.7,167.2 L411.2,167.4 L410.7,167.8 L410.2,167.5 L409.7,168.0 L409.2,168.3 L408.7,169.3 L408.2,168.9 L407.7,170.0 L407.2,170.6 L406.7,170.6 L406.2,171.4 L405.7,173.2 L405.2,172.9 L404.7,163.6 L404.2,163.6 L403.7,163.6 L403.2,163.6 L402.7,163.6 L402.2,163.6 L401.7,163.6 L401.2,163.6 L400.7,163.6 L400.2,163.6 L399.7,163.6 L399.2,163.6 L398.7,163.6 L398.2,163.6 L397.7,163.6 L397.2,163.6 L396.7,163.6 L396.2,163.6 L395.7,163.6 L395.2,163.6 L394.7,163.6 L394.2,163.6 L393.7,163.6 L393.2,163.6 L392.7,163.6 L392.2,163.6 L391.7,163.6 L391.2,163.6 L390.7,163.6 L390.2,163.6 L389.7,163.6 L389.2,163.6 L388.7,163.7 L388.2,163.7 L387.7,163.7 L387.2,163.7 L386.7,163.8 L386.2,163.8 L385.7,163.8 L385.2,163.9 L384.7,163.9 L384.2,163.9 L383.7,164.0 L383.2,164.0 L382.7,164.0 L382.2,164.1 L381.7,164.2 L381.2,164.1 L380.7,164.2 L380.2,164.3 L379.7,164.3 L379.2,164.4 L378.7,164.4 L378.2,164.5 L377.7,164.5 L377.2,164.7 L376.7,164.7 L376.2,164.7 L375.7,164.7 L375.2,164.8 L374.7,164.8 L374.2,165.0 L373.7,165.0 L373.2,165.1 L372.7,165.1 L372.2,165.1 L371.7,165.1 L371.2,165.4 L370.7,165.5 L370.2,165.4 L369.7,165.5 L369.2,165.7 L368.7,165.6 L368.2,165.9 L367.7,166.0 L367.2,166.0 L366.7,165.9 L366.2,166.0 L365.7,166.2 L365.2,166.3 L364.7,166.5 L364.2,166.6 L363.7,166.8 L363.2,167.0 L362.7,166.9 L362.2,167.4 L361.7,167.5 L361.2,168.0 L360.7,168.0 L360.2,168.7 L359.7,169.4 L359.2,169.7 L358.7,163.6 L358.2,163.6 L357.7,163.6 L357.2,163.7 L356.7,163.8 L356.2,163.9 L355.7,164.1 L355.2,164.4 L354.7,164.7 L354.2,164.9 L353.7,165.3 L353.2,165.3 L352.7,165.9 L352.2,166.0 L351.7,166.7 L351.2,166.9 L350.7,167.3 L350.2,168.0 L349.7,168.6 L349.2,169.6 L348.7,170.1 L348.2,171.5 L347.7,172.5 L347.2,164.6 L346.7,164.8 L346.2,164.8 L345.7,164.9 L345.2,165.1 L344.7,165.3 L344.2,165.4 L343.7,165.6 L343.2,165.7 L342.7,166.0 L342.2,166.3 L341.7,166.7 L341.2,166.7 L340.7,167.3 L340.2,167.6 L339.7,168.4 L339.2,168.5 L338.7,169.8 L338.2,170.3 L337.7,172.7 L337.2,173.2 L336.7,175.1 L336.2,179.3 L335.7,163.6 L335.2,163.6 L334.7,163.6 L334.2,163.6 L333.7,163.6 L333.2,163.6 L332.7,163.6 L332.2,163.6 L331.7,163.6 L331.2,163.6 L330.7,163.6 L330.2,163.6 L329.7,163.6 L329.2,163.6 L328.7,163.6 L328.2,163.6 L327.7,163.6 L327.2,163.6 L326.7,163.6 L326.2,163.7 L325.7,163.7 L325.2,163.8 L324.7,163.9 L324.2,164.0 L323.7,164.0 L323.2,164.1 L322.7,164.2 L322.2,164.3 L321.7,164.4 L321.2,164.6 L320.7,164.6 L320.2,164.8 L319.7,164.9 L319.2,165.1 L318.7,165.2 L318.2,165.3 L317.7,165.4 L317.2,165.7 L316.7,165.9 L316.2,166.3 L315.7,166.3 L315.2,166.7 L314.7,166.9 L314.2,167.0 L313.7,167.8 L313.2,168.3 L312.7,168.2 L312.2,163.8 L311.7,163.9 L311.2,163.9 L310.7,164.0 L310.2,164.0 L309.7,164.1 L309.2,164.1 L308.7,164.2 L308.2,164.2 L307.7,164.3 L307.2,164.4 L306.7,164.4 L306.2,164.5 L305.7,164.6 L305.2,164.6 L304.7,164.7 L304.2,164.8 L303.7,164.7 L303.2,164.8 L302.7,164.9 L302.2,164.9 L301.7,165.0 L301.2,165.2 L300.7,165.2 L300.2,165.1 L299.7,165.4 L299.2,165.2 L298.7,165.3 L298.2,165.6 L297.7,165.7 L297.2,165.7 L296.7,165.7 L296.2,165.8 L295.7,165.8 L295.2,166.0 L294.7,166.1 L294.2,166.3 L293.7,166.4 L293.2,166.3 L292.7,166.5 L292.2,166.6 L291.7,166.8 L291.2,166.6 L290.7,166.7 L290.2,167.2 L289.7,167.1 L289.2,167.0 L288.7,167.3 L288.2,167.3 L287.7,167.2 L287.2,167.6 L286.7,167.8 L286.2,168.0 L285.7,168.1 L285.2,168.3 L284.7,168.2 L284.2,168.1 L283.7,168.9 L283.2,168.9 L282.7,168.6 L282.2,169.0 L281.7,169.3 L281.2,169.3 L280.7,169.4 L280.2,169.9 L279.7,170.2 L279.2,171.3 L278.7,171.0 L278.2,171.9 L277.7,173.1 L277.2,173.7 L276.7,174.0 L276.2,173.0 L275.7,173.5 L275.2,175.0 L274.7,175.1 L274.2,174.6 L273.7,176.3 L273.2,175.7 L272.7,176.6 L272.2,176.0 L271.7,176.1 L271.2,175.3 L270.7,175.5 L270.2,174.8 L269.7,173.8 L269.2,173.4 L268.7,173.0 L268.2,172.6 L267.7,172.6 L267.2,171.6 L266.7,166.7 L266.2,163.6 L265.7,163.6 L265.2,163.6 L264.7,163.6 L264.2,163.6 L263.7,163.6 L263.2,163.6 L262.7,163.6 L262.2,163.6 L261.7,163.6 L261.2,163.6 L260.7,163.6 L260.2,163.6 L259.7,163.6 L259.2,163.6 L258.7,163.6 L258.2,163.7 L257.7,163.7 L257.2,163.8 L256.7,163.8 L256.2,164.0 L255.7,163.9 L255.2,164.1 L254.7,164.1 L254.2,164.2 L253.7,164.4 L253.2,164.5 L252.7,164.6 L252.2,164.5 L251.7,164.6 L251.2,164.7 L250.7,164.9 L250.2,165.1 L249.7,165.2 L249.2,165.4 L248.7,165.6 L248.2,165.8 L247.7,165.8 L247.2,166.2 L246.7,166.2 L246.2,166.7 L245.7,166.8 L245.2,167.2 L244.7,167.3 L244.2,168.0 L243.7,168.4 L243.2,163.6 L242.7,163.6 L242.2,163.6 L241.7,163.6 L241.2,163.6 L240.7,163.6 L240.2,163.6 L239.7,163.6 L239.2,163.6 L238.7,163.6 L238.2,163.6 L237.7,163.6 L237.2,163.7 L236.7,163.7 L236.2,163.7 L235.7,163.8 L235.2,163.9 L234.7,164.0 L234.2,164.1 L233.7,164.2 L233.2,164.2 L232.7,164.4 L232.2,164.5 L231.7,164.6 L231.2,164.6 L230.7,164.9 L230.2,165.0 L229.7,165.0 L229.2,165.3 L228.7,165.4 L228.2,165.5 L227.7,165.8 L227.2,165.9 L226.7,166.3 L226.2,166.4 L225.7,166.3 L225.2,166.7 L224.7,166.8 L224.2,167.3 L223.7,167.8 L223.2,168.4 L222.7,168.4 L222.2,169.4 L221.7,170.1 L221.2,170.7 L220.7,163.6 L220.2,163.6 L219.7,163.6 L219.2,163.6 L218.7,163.6 L218.2,163.6 L217.7,163.6 L217.2,163.6 L216.7,163.6 L216.2,163.6 L215.7,163.6 L215.2,163.6 L214.7,163.6 L214.2,163.6 L213.7,163.6 L213.2,163.6 L212.7,163.6 L212.2,163.6 L211.7,163.6 L211.2,163.6 L210.7,163.6 L210.2,163.6 L209.7,163.6 L209.2,163.6 L208.7,163.6 L208.2,163.6 L207.7,163.6 L207.2,163.7 L206.7,163.7 L206.2,163.8 L205.7,163.8 L205.2,163.8 L204.7,163.8 L204.2,163.9 L203.7,164.0 L203.2,164.0 L202.7,164.1 L202.2,164.1 L201.7,164.2 L201.2,164.2 L200.7,164.3 L200.2,164.3 L199.7,164.4 L199.2,164.4 L198.7,164.6 L198.2,164.6 L197.7,164.6 L197.2,164.7 L196.7,164.7 L196.2,164.7 L195.7,165.0 L195.2,165.1 L194.7,165.0 L194.2,165.0 L193.7,165.1 L193.2,165.3 L192.7,165.2 L192.2,165.5 L191.7,165.6 L191.2,165.4 L190.7,165.7 L190.2,165.6 L189.7,165.8 L189.2,166.1 L188.7,165.9 L188.2,166.3 L187.7,166.4 L187.2,166.5 L186.7,166.4 L186.2,166.4 L185.7,166.5 L185.2,166.7 L184.7,166.7 L184.2,166.7 L183.7,167.3 L183.2,167.3 L182.7,167.6 L182.2,167.7 L181.7,167.6 L181.2,167.5 L180.7,168.1 L180.2,167.9 L179.7,168.6 L179.2,169.0 L178.7,168.7 L178.2,169.3 L177.7,169.6 L177.2,169.8 L176.7,170.9 L176.2,170.6 L175.7,171.9 L175.2,172.6Z" fill="#07222a"/><path d="M175.2,257.5 L175.7,258.1 L176.2,258.5 L176.7,259.7 L177.2,259.9 L177.7,259.7 L178.2,260.2 L178.7,260.7 L179.2,261.0 L179.7,261.4 L180.2,261.5 L180.7,261.7 L181.2,262.2 L181.7,262.0 L182.2,262.3 L182.7,262.4 L183.2,262.8 L183.7,262.9 L184.2,262.8 L184.7,263.3 L185.2,263.0 L185.7,263.3 L186.2,263.4 L186.7,263.6 L187.2,263.6 L187.7,263.7 L188.2,263.7 L188.7,263.9 L189.2,263.9 L189.7,264.0 L190.2,264.1 L190.7,264.2 L191.2,264.4 L191.7,264.3 L192.2,264.6 L192.7,264.6 L193.2,264.7 L193.7,264.7 L194.2,264.8 L194.7,264.9 L195.2,264.9 L195.7,265.1 L196.2,265.2 L196.7,265.2 L197.2,265.3 L197.7,265.3 L198.2,265.5 L198.7,265.5 L199.2,265.5 L199.7,265.6 L200.2,265.6 L200.7,265.7 L201.2,265.7 L201.7,265.8 L202.2,265.9 L202.7,265.9 L203.2,266.0 L203.7,266.0 L204.2,266.1 L204.7,266.1 L205.2,266.2 L205.7,266.2 L206.2,266.2 L206.7,266.3 L207.2,266.3 L207.7,266.4 L208.2,266.4 L208.7,266.4 L209.2,266.4 L209.7,266.4 L210.2,266.4 L210.7,266.4 L211.2,266.4 L211.7,266.4 L212.2,266.4 L212.7,266.4 L213.2,266.4 L213.7,266.4 L214.2,266.4 L214.7,266.4 L215.2,266.4 L215.7,266.4 L216.2,266.4 L216.7,266.4 L217.2,266.4 L217.7,266.4 L218.2,266.4 L218.7,266.4 L219.2,266.4 L219.7,266.4 L220.2,266.4 L220.7,266.4 L221.2,260.0 L221.7,259.8 L222.2,260.8 L222.7,260.9 L223.2,261.6 L223.7,262.0 L224.2,262.6 L224.7,262.9 L225.2,263.0 L225.7,263.2 L226.2,263.4 L226.7,263.6 L227.2,263.9 L227.7,264.4 L228.2,264.5 L228.7,264.5 L229.2,264.7 L229.7,264.8 L230.2,265.1 L230.7,265.1 L231.2,265.3 L231.7,265.4 L232.2,265.5 L232.7,265.5 L233.2,265.7 L233.7,265.8 L234.2,265.9 L234.7,266.0 L235.2,266.1 L235.7,266.1 L236.2,266.3 L236.7,266.3 L237.2,266.3 L237.7,266.4 L238.2,266.4 L238.7,266.4 L239.2,266.4 L239.7,266.4 L240.2,266.4 L240.7,266.4 L241.2,266.4 L241.7,266.4 L242.2,266.4 L242.7,266.4 L243.2,266.4 L243.7,261.5 L244.2,262.1 L244.7,262.4 L245.2,262.8 L245.7,263.3 L246.2,263.4 L246.7,263.4 L247.2,263.7 L247.7,264.2 L248.2,264.4 L248.7,264.4 L249.2,264.5 L249.7,264.7 L250.2,265.0 L250.7,265.1 L251.2,265.1 L251.7,265.3 L252.2,265.3 L252.7,265.5 L253.2,265.6 L253.7,265.6 L254.2,265.7 L254.7,265.8 L255.2,265.9 L255.7,266.0 L256.2,266.0 L256.7,266.2 L257.2,266.2 L257.7,266.3 L258.2,266.3 L258.7,266.4 L259.2,266.4 L259.7,266.4 L260.2,266.4 L260.7,266.4 L261.2,266.4 L261.7,266.4 L262.2,266.4 L262.7,266.4 L263.2,266.4 L263.7,266.4 L264.2,266.4 L264.7,266.4 L265.2,266.4 L265.7,266.4 L266.2,266.4 L266.7,263.3 L267.2,258.6 L267.7,257.7 L268.2,256.7 L268.7,256.4 L269.2,254.3 L269.7,254.4 L270.2,253.7 L270.7,253.6 L271.2,252.5 L271.7,252.0 L272.2,250.8 L272.7,251.1 L273.2,250.7 L273.7,251.5 L274.2,252.5 L274.7,253.4 L275.2,253.1 L275.7,253.2 L276.2,255.0 L276.7,256.4 L277.2,256.0 L277.7,257.5 L278.2,257.9 L278.7,258.0 L279.2,259.3 L279.7,259.7 L280.2,260.0 L280.7,260.7 L281.2,260.5 L281.7,260.9 L282.2,260.4 L282.7,260.9 L283.2,261.3 L283.7,261.5 L284.2,261.1 L284.7,261.2 L285.2,261.5 L285.7,262.0 L286.2,261.9 L286.7,262.3 L287.2,262.1 L287.7,262.4 L288.2,262.5 L288.7,262.5 L289.2,262.7 L289.7,262.7 L290.2,263.1 L290.7,262.9 L291.2,262.9 L291.7,263.3 L292.2,263.2 L292.7,263.3 L293.2,263.6 L293.7,263.8 L294.2,263.6 L294.7,263.7 L295.2,264.0 L295.7,263.8 L296.2,264.0 L296.7,264.0 L297.2,264.3 L297.7,264.3 L298.2,264.5 L298.7,264.6 L299.2,264.7 L299.7,264.6 L300.2,264.8 L300.7,264.8 L301.2,264.8 L301.7,264.9 L302.2,265.0 L302.7,265.0 L303.2,265.2 L303.7,265.1 L304.2,265.2 L304.7,265.2 L305.2,265.3 L305.7,265.4 L306.2,265.4 L306.7,265.5 L307.2,265.6 L307.7,265.7 L308.2,265.7 L308.7,265.8 L309.2,265.9 L309.7,266.0 L310.2,266.0 L310.7,266.0 L311.2,266.0 L311.7,266.1 L312.2,266.2 L312.7,261.6 L313.2,261.8 L313.7,262.4 L314.2,262.6 L314.7,262.8 L315.2,263.1 L315.7,263.5 L316.2,263.7 L316.7,263.9 L317.2,264.1 L317.7,264.5 L318.2,264.7 L318.7,264.8 L319.2,264.9 L319.7,265.1 L320.2,265.2 L320.7,265.2 L321.2,265.5 L321.7,265.5 L322.2,265.6 L322.7,265.7 L323.2,265.9 L323.7,265.9 L324.2,266.0 L324.7,266.1 L325.2,266.1 L325.7,266.2 L326.2,266.3 L326.7,266.4 L327.2,266.4 L327.7,266.4 L328.2,266.4 L328.7,266.4 L329.2,266.4 L329.7,266.4 L330.2,266.4 L330.7,266.4 L331.2,266.4 L331.7,266.4 L332.2,266.4 L332.7,266.4 L333.2,266.4 L333.7,266.4 L334.2,266.4 L334.7,266.4 L335.2,266.4 L335.7,266.4 L336.2,249.0 L336.7,250.9 L337.2,253.9 L337.7,257.1 L338.2,258.5 L338.7,260.3 L339.2,260.6 L339.7,261.8 L340.2,262.4 L340.7,262.7 L341.2,262.8 L341.7,263.2 L342.2,263.5 L342.7,263.7 L343.2,264.1 L343.7,264.2 L344.2,264.5 L344.7,264.6 L345.2,264.7 L345.7,264.9 L346.2,265.0 L346.7,265.2 L347.2,265.2 L347.7,258.0 L348.2,258.5 L348.7,259.2 L349.2,260.0 L349.7,261.2 L350.2,262.0 L350.7,262.0 L351.2,262.8 L351.7,263.5 L352.2,263.8 L352.7,264.2 L353.2,264.4 L353.7,264.9 L354.2,265.1 L354.7,265.4 L355.2,265.6 L355.7,265.8 L356.2,266.0 L356.7,266.1 L357.2,266.3 L357.7,266.4 L358.2,266.4 L358.7,266.4 L359.2,260.1 L359.7,260.5 L360.2,261.3 L360.7,261.6 L361.2,261.7 L361.7,262.0 L362.2,262.5 L362.7,262.6 L363.2,263.0 L363.7,263.3 L364.2,263.2 L364.7,263.3 L365.2,263.7 L365.7,263.5 L366.2,263.8 L366.7,264.0 L367.2,263.8 L367.7,264.0 L368.2,264.1 L368.7,264.3 L369.2,264.2 L369.7,264.3 L370.2,264.4 L370.7,264.4 L371.2,264.7 L371.7,264.8 L372.2,264.7 L372.7,264.8 L373.2,265.0 L373.7,265.0 L374.2,265.1 L374.7,265.0 L375.2,265.2 L375.7,265.2 L376.2,265.3 L376.7,265.3 L377.2,265.3 L377.7,265.5 L378.2,265.5 L378.7,265.5 L379.2,265.6 L379.7,265.7 L380.2,265.6 L380.7,265.8 L381.2,265.7 L381.7,265.9 L382.2,265.9 L382.7,266.0 L383.2,265.9 L383.7,265.9 L384.2,266.0 L384.7,266.1 L385.2,266.1 L385.7,266.2 L386.2,266.2 L386.7,266.2 L387.2,266.3 L387.7,266.3 L388.2,266.3 L388.7,266.3 L389.2,266.4 L389.7,266.4 L390.2,266.4 L390.7,266.4 L391.2,266.4 L391.7,266.4 L392.2,266.4 L392.7,266.4 L393.2,266.4 L393.7,266.4 L394.2,266.4 L394.7,266.4 L395.2,266.4 L395.7,266.4 L396.2,266.4 L396.7,266.4 L397.2,266.4 L397.7,266.4 L398.2,266.4 L398.7,266.4 L399.2,266.4 L399.7,266.4 L400.2,266.4 L400.7,266.4 L401.2,266.4 L401.7,266.4 L402.2,266.4 L402.7,266.4 L403.2,266.4 L403.7,266.4 L404.2,266.4 L404.7,266.4 L405.2,256.5 L405.7,257.5 L406.2,258.5 L406.7,259.1 L407.2,259.4 L407.7,259.6 L408.2,260.2 L408.7,261.1 L409.2,261.7 L409.7,261.7 L410.2,262.0 L410.7,262.5 L411.2,262.9 L411.7,263.1 L412.2,263.1 L412.7,263.6 L413.2,263.5 L413.7,264.0 L414.2,263.9 L414.7,264.1 L415.2,264.5 L415.7,264.6 L416.2,264.8 L416.7,265.0 L417.2,265.1 L417.7,265.3 L418.2,265.3 L418.7,265.4 L419.2,265.6 L419.7,265.7 L420.2,265.9 L420.7,266.0 L421.2,266.0 L421.7,266.1 L422.2,266.2 L422.7,266.3 L423.2,266.4 L423.7,266.4 L424.2,266.4 L424.7,266.4 L425.2,266.4 L425.7,266.4 L426.2,266.4 L426.7,266.4 L427.2,266.4 L427.7,266.4 L428.2,253.8 L428.7,256.2 L429.2,257.7 L429.7,258.2 L430.2,258.8 L430.7,259.5 L431.2,259.4 L431.7,260.1 L432.2,261.0 L432.7,261.4 L433.2,261.6 L433.7,262.1 L434.2,262.4 L434.7,262.6 L435.2,262.8 L435.7,262.9 L436.2,263.4 L436.7,263.8 L437.2,263.7 L437.7,264.2 L438.2,264.3 L438.7,264.4 L439.2,264.6 L439.7,264.8 L440.2,264.9 L440.7,265.1 L441.2,265.2 L441.7,265.3 L442.2,265.5 L442.7,265.7 L443.2,265.7 L443.7,265.9 L444.2,266.0 L444.7,266.1 L445.2,266.2 L445.7,266.2 L446.2,266.3 L446.7,266.4 L447.2,266.4 L447.7,266.4 L448.2,266.4 L448.7,266.4 L449.2,266.4 L449.7,266.4 L450.2,266.4 L450.7,266.4 L451.2,266.4 L451.7,253.6 L452.2,253.8 L452.7,252.6 L453.2,254.1 L453.7,252.9 L454.2,254.7 L454.7,254.5 L455.2,255.3 L455.7,256.6 L456.2,256.0 L456.7,256.3 L457.2,255.3 L457.7,255.0 L458.2,253.9 L458.7,255.0 L459.2,254.6 L459.7,254.7 L460.2,255.2 L460.7,256.2 L461.2,256.8 L461.7,257.3 L462.2,257.0 L462.7,257.2 L463.2,257.5 L463.7,258.6 L464.2,258.7 L464.7,259.3 L465.2,259.6 L465.7,259.0 L466.2,259.2 L466.7,260.1 L467.2,260.4 L467.7,260.3 L468.2,260.1 L468.7,260.6 L469.2,261.0 L469.7,261.1 L470.2,261.2 L470.7,261.5 L471.2,261.4 L471.7,261.5 L472.2,261.7 L472.7,262.1 L473.2,262.1 L473.7,262.1 L474.2,262.4 L474.7,262.3 L475.2,262.6 L475.7,262.9 L476.2,262.8 L476.7,262.8 L477.2,263.2 L477.7,263.3 L478.2,263.3 L478.7,263.4 L479.2,263.8 L479.7,263.5 L480.2,263.7 L480.7,263.8 L481.2,263.9 L481.7,264.1 L482.2,263.9 L482.7,264.2 L483.2,264.0 L483.7,264.1 L484.2,264.2 L484.7,264.5 L485.2,264.3 L485.7,264.5 L486.2,264.6 L486.7,264.6 L487.2,264.8 L487.7,264.8 L488.2,264.9 L488.7,265.0 L489.2,264.9 L489.7,265.1 L490.2,265.1 L490.7,265.2 L491.2,265.2 L491.7,265.2 L492.2,265.4 L492.7,265.5 L493.2,265.4 L493.7,265.5 L494.2,265.6 L494.7,265.6 L495.2,265.8 L495.7,266.1 L496.2,266.2 L496.7,266.4 L497.2,259.6 L497.7,259.7 L498.2,260.5 L498.7,261.2 L499.2,261.7 L499.7,262.0 L500.2,262.3 L500.7,262.4 L501.2,262.8 L501.7,263.0 L502.2,263.4 L502.7,263.7 L503.2,264.0 L503.7,264.1 L504.2,264.2 L504.7,264.2 L505.2,264.6 L505.7,264.7 L506.2,264.7 L506.7,265.0 L507.2,265.0 L507.7,265.2 L508.2,265.3 L508.7,265.4 L509.2,265.6 L509.7,265.6 L510.2,265.8 L510.7,265.8 L511.2,265.9 L511.7,266.0 L512.2,266.1 L512.7,266.2 L513.2,266.2 L513.7,266.3 L514.2,266.3 L514.7,266.4 L515.2,266.4 L515.7,266.4 L516.2,266.4 L516.7,266.4 L517.2,266.4 L517.7,266.4 L518.2,266.4 L518.7,266.4 L519.2,266.4 L519.7,266.4 L520.2,247.1 L520.7,250.8 L521.2,254.0 L521.7,257.2 L522.2,259.0 L522.7,259.6 L523.2,261.1 L523.7,261.4 L524.2,262.1 L524.7,262.2 L525.2,263.0 L525.7,263.4 L526.2,263.6 L526.7,263.6 L527.2,264.2 L527.7,264.4 L528.2,264.3 L528.7,264.7 L529.2,264.8 L529.7,264.9 L530.2,265.1 L530.7,265.2 L531.2,265.3 L531.7,256.7 L532.2,257.1 L532.7,258.1 L533.2,259.2 L533.7,260.0 L534.2,260.5 L534.7,261.9 L535.2,261.9 L535.7,262.6 L536.2,263.3 L536.7,263.6 L537.2,264.2 L537.7,264.5 L538.2,264.9 L538.7,265.1 L539.2,265.3 L539.7,265.7 L540.2,265.9 L540.7,266.1 L541.2,266.3 L541.7,266.4 L542.2,266.4 L542.7,266.4 L543.2,262.2 L543.7,262.8 L544.2,262.8 L544.7,263.2 L545.2,263.7 L545.7,264.0 L546.2,264.1 L546.7,264.5 L547.2,264.5 L547.7,264.7 L548.2,265.0 L548.7,265.0 L549.2,265.1 L549.7,265.2 L550.2,265.4 L550.7,265.6 L551.2,265.6 L551.7,265.8 L552.2,265.9 L552.7,265.9 L553.2,266.1 L553.7,266.1 L554.2,266.2 L554.7,266.2 L555.2,266.3 L555.7,266.4 L556.2,266.4 L556.7,266.4 L557.2,266.4 L557.7,266.4 L558.2,266.4 L558.7,266.4 L559.2,266.4 L559.7,266.4 L560.2,266.4 L560.7,266.4 L561.2,264.2 L561.7,264.7 L562.2,264.9 L562.7,264.9 L563.2,265.2 L563.7,265.4 L564.2,265.5 L564.7,265.7 L565.2,265.8 L565.7,265.9 L566.2,266.1 L566.7,266.1 L567.2,266.2 L567.7,266.3 L568.2,266.3 L568.7,266.4 L569.2,266.4 L569.7,266.4 L570.2,266.4 L570.7,266.4 L571.2,266.4 L571.7,266.4 L572.2,266.4 L572.7,266.4 L573.2,266.4 L573.7,266.4 L574.2,266.4 L574.7,266.4 L575.2,266.4 L575.7,266.4 L576.2,266.4 L576.7,266.4 L577.2,266.4 L577.7,266.4 L578.2,266.4 L578.7,266.4 L579.2,266.4 L579.7,266.4 L580.2,266.4 L580.7,266.4 L581.2,266.4 L581.7,266.4 L582.2,266.4 L582.7,266.4 L583.2,266.4 L583.7,266.4 L584.2,266.4 L584.7,266.4 L585.2,266.4 L585.7,266.4 L586.2,266.4 L586.7,266.4 L587.2,266.4 L587.7,266.4 L588.2,266.4 L588.7,266.4 L589.2,266.4 L589.7,266.4 L590.2,266.4 L590.7,266.4 L591.2,266.4 L591.7,266.4 L592.2,266.4 L592.7,266.4 L593.2,266.4 L593.7,266.4 L594.2,266.4 L594.7,266.4 L595.2,266.4 L595.7,266.4 L596.2,266.4 L596.7,266.4 L597.2,266.4 L597.7,266.4 L598.2,266.4 L598.7,266.4 L599.2,266.4 L599.7,266.4 L600.2,266.4 L600.7,266.4 L601.2,266.4 L601.7,266.4 L602.2,266.4 L602.7,266.4 L603.2,266.4 L603.7,266.4 L604.2,266.4 L604.7,266.4 L605.2,266.4 L605.7,266.4 L606.2,266.4 L606.7,266.4 L607.2,266.4 L607.7,266.4 L608.2,266.4 L608.7,266.4 L609.2,266.4 L609.7,266.4 L610.2,266.4 L610.7,266.4 L611.2,266.4 L611.7,266.4 L612.2,266.4 L612.7,266.4 L613.2,266.4 L613.7,266.4 L614.2,266.4 L614.7,266.4 L615.2,266.4 L615.7,266.4 L616.2,266.4 L616.7,266.4 L617.2,266.4 L617.7,266.4 L618.2,266.4 L618.7,266.4 L619.2,266.4 L619.7,266.4 L620.2,266.4 L620.7,266.4 L621.2,266.4 L621.7,266.4 L622.2,266.4 L622.7,266.4 L623.2,266.4 L623.7,266.4 L624.2,266.4 L624.7,266.4 L625.2,266.4 L625.7,266.4 L626.2,266.4 L626.7,266.4 L627.2,266.4 L627.7,266.4 L628.2,266.4 L628.7,266.4 L629.2,266.4 L629.7,266.4 L630.2,266.4 L630.7,266.4 L631.2,266.4 L631.7,266.4 L632.2,266.4 L632.7,266.4 L633.2,266.4 L633.7,266.4 L634.2,266.4 L634.7,266.4 L635.2,266.4 L635.7,266.4 L636.2,266.4 L636.7,266.4 L637.2,266.4 L637.7,266.4 L638.2,266.4 L638.7,266.4 L639.2,266.4 L639.7,266.4 L640.2,266.4 L640.7,266.4 L641.2,266.4 L641.7,266.4 L642.2,266.4 L642.7,266.4 L643.2,266.4 L643.7,266.4 L644.2,266.4 L644.7,266.4 L645.2,266.4 L645.7,266.4 L646.2,266.4 L646.7,266.4 L647.2,266.4 L647.7,266.4 L648.2,266.4 L648.7,266.4 L649.2,266.4 L649.7,266.4 L650.2,266.4 L650.7,266.4 L651.2,266.4 L651.7,266.4 L652.2,266.4 L652.7,266.4 L653.2,266.4 L653.7,266.4 L654.2,266.4 L654.7,266.4 L655.2,266.4 L655.7,266.4 L656.2,266.4 L656.7,266.4 L657.2,266.4 L657.7,266.4 L658.2,266.4 L658.7,266.4 L659.2,266.4 L659.7,266.4 L660.2,266.4 L660.7,266.4 L661.2,266.4 L661.7,266.4 L662.2,266.4 L662.7,266.4 L663.2,266.4 L663.7,266.4 L664.2,266.4 L664.7,266.4 L665.2,266.4 L665.7,266.4 L666.2,266.4 L666.7,266.4 L667.2,266.4 L667.7,266.4 L668.2,266.4 L668.7,266.4 L669.2,266.4 L669.7,266.4 L670.2,266.4 L670.7,266.4 L671.2,266.4 L671.7,266.4 L672.2,266.4 L672.7,266.4 L673.2,266.4 L673.7,266.4 L674.2,266.4 L674.7,266.4 L675.2,266.4 L675.7,266.4 L676.2,266.4 L676.7,266.4 L677.2,266.4 L677.7,266.4 L678.2,266.4 L678.7,266.4 L679.2,266.4 L679.7,266.4 L680.2,266.4 L680.7,266.4 L681.2,266.4 L681.7,266.4 L682.2,266.4 L682.7,266.4 L683.2,266.4 L683.7,266.4 L684.2,266.4 L684.7,266.4 L685.2,266.4 L685.7,266.4 L686.2,266.4 L686.7,266.4 L687.2,266.4 L687.7,266.4 L688.2,266.4 L688.7,266.4 L689.2,266.4 L689.7,266.4 L690.2,266.4 L690.7,266.4 L691.2,266.4 L691.7,266.4 L692.2,266.4 L692.7,266.4 L693.2,266.4 L693.7,266.4 L694.2,266.4 L694.7,266.4 L695.2,266.4 L695.7,266.4 L696.2,266.4 L696.7,266.4 L697.2,266.4 L697.7,266.4 L698.2,266.4 L698.7,266.4 L699.2,266.4 L699.7,266.4 L700.2,266.4 L700.7,266.4 L701.2,266.4 L701.7,266.4 L702.2,266.4 L702.7,266.4 L703.2,266.4 L703.7,266.4 L704.2,266.4 L704.7,266.4 L705.2,266.4 L705.7,266.4 L706.2,266.4 L706.7,266.4 L707.2,266.4 L707.7,266.4 L708.2,266.4 L708.7,266.4 L709.2,266.4 L709.7,266.4 L710.2,266.4 L710.7,266.4 L711.2,266.4 L711.7,266.4 L712.2,266.4 L712.7,266.4 L713.2,266.4 L713.7,266.4 L714.2,266.4 L714.7,266.4 L715.2,266.4 L715.7,266.4 L716.2,266.4 L716.7,266.4 L717.2,266.4 L717.7,266.4 L718.2,266.4 L718.7,266.4 L719.2,266.4 L719.7,266.4 L720.2,266.4 L720.7,266.4 L721.2,266.4 L721.7,266.4 L722.2,266.4 L722.7,266.4 L723.2,266.4 L723.7,266.4 L724.2,266.4 L724.7,266.4 L725.2,266.4 L725.7,266.4 L726.2,266.4 L726.7,266.4 L726.7,267.0 L726.2,267.0 L725.7,267.0 L725.2,267.0 L724.7,267.0 L724.2,267.0 L723.7,267.0 L723.2,267.0 L722.7,267.0 L722.2,267.0 L721.7,267.0 L721.2,267.0 L720.7,267.0 L720.2,267.0 L719.7,267.0 L719.2,267.0 L718.7,267.0 L718.2,267.0 L717.7,267.0 L717.2,267.0 L716.7,267.0 L716.2,267.0 L715.7,267.0 L715.2,267.0 L714.7,267.0 L714.2,267.0 L713.7,267.0 L713.2,267.0 L712.7,267.0 L712.2,267.0 L711.7,267.0 L711.2,267.0 L710.7,267.0 L710.2,267.0 L709.7,267.0 L709.2,267.0 L708.7,267.0 L708.2,267.0 L707.7,267.0 L707.2,267.0 L706.7,267.0 L706.2,267.0 L705.7,267.0 L705.2,267.0 L704.7,267.0 L704.2,267.0 L703.7,267.0 L703.2,267.0 L702.7,267.0 L702.2,267.0 L701.7,267.0 L701.2,267.0 L700.7,267.0 L700.2,267.0 L699.7,267.0 L699.2,267.0 L698.7,267.0 L698.2,267.0 L697.7,267.0 L697.2,267.0 L696.7,267.0 L696.2,267.0 L695.7,267.0 L695.2,267.0 L694.7,267.0 L694.2,267.0 L693.7,267.0 L693.2,267.0 L692.7,267.0 L692.2,267.0 L691.7,267.0 L691.2,267.0 L690.7,267.0 L690.2,267.0 L689.7,267.0 L689.2,267.0 L688.7,267.0 L688.2,267.0 L687.7,267.0 L687.2,267.0 L686.7,267.0 L686.2,267.0 L685.7,267.0 L685.2,267.0 L684.7,267.0 L684.2,267.0 L683.7,267.0 L683.2,267.0 L682.7,267.0 L682.2,267.0 L681.7,267.0 L681.2,267.0 L680.7,267.0 L680.2,267.0 L679.7,267.0 L679.2,267.0 L678.7,267.0 L678.2,267.0 L677.7,267.0 L677.2,267.0 L676.7,267.0 L676.2,267.0 L675.7,267.0 L675.2,267.0 L674.7,267.0 L674.2,267.0 L673.7,267.0 L673.2,267.0 L672.7,267.0 L672.2,267.0 L671.7,267.0 L671.2,267.0 L670.7,267.0 L670.2,267.0 L669.7,267.0 L669.2,267.0 L668.7,267.0 L668.2,267.0 L667.7,267.0 L667.2,267.0 L666.7,267.0 L666.2,267.0 L665.7,267.0 L665.2,267.0 L664.7,267.0 L664.2,267.0 L663.7,267.0 L663.2,267.0 L662.7,267.0 L662.2,267.0 L661.7,267.0 L661.2,267.0 L660.7,267.0 L660.2,267.0 L659.7,267.0 L659.2,267.0 L658.7,267.0 L658.2,267.0 L657.7,267.0 L657.2,267.0 L656.7,267.0 L656.2,267.0 L655.7,267.0 L655.2,267.0 L654.7,267.0 L654.2,267.0 L653.7,267.0 L653.2,267.0 L652.7,267.0 L652.2,267.0 L651.7,267.0 L651.2,267.0 L650.7,267.0 L650.2,267.0 L649.7,267.0 L649.2,267.0 L648.7,267.0 L648.2,267.0 L647.7,267.0 L647.2,267.0 L646.7,267.0 L646.2,267.0 L645.7,267.0 L645.2,267.0 L644.7,267.0 L644.2,267.0 L643.7,267.0 L643.2,267.0 L642.7,267.0 L642.2,267.0 L641.7,267.0 L641.2,267.0 L640.7,267.0 L640.2,267.0 L639.7,267.0 L639.2,267.0 L638.7,267.0 L638.2,267.0 L637.7,267.0 L637.2,267.0 L636.7,267.0 L636.2,267.0 L635.7,267.0 L635.2,267.0 L634.7,267.0 L634.2,267.0 L633.7,267.0 L633.2,267.0 L632.7,267.0 L632.2,267.0 L631.7,267.0 L631.2,267.0 L630.7,267.0 L630.2,267.0 L629.7,267.0 L629.2,267.0 L628.7,267.0 L628.2,267.0 L627.7,267.0 L627.2,267.0 L626.7,267.0 L626.2,267.0 L625.7,267.0 L625.2,267.0 L624.7,267.0 L624.2,267.0 L623.7,267.0 L623.2,267.0 L622.7,267.0 L622.2,267.0 L621.7,267.0 L621.2,267.0 L620.7,267.0 L620.2,267.0 L619.7,267.0 L619.2,267.0 L618.7,267.0 L618.2,267.0 L617.7,267.0 L617.2,267.0 L616.7,267.0 L616.2,267.0 L615.7,267.0 L615.2,267.0 L614.7,267.0 L614.2,267.0 L613.7,267.0 L613.2,267.0 L612.7,267.0 L612.2,267.0 L611.7,267.0 L611.2,267.0 L610.7,267.0 L610.2,267.0 L609.7,267.0 L609.2,267.0 L608.7,267.0 L608.2,267.0 L607.7,267.0 L607.2,267.0 L606.7,267.0 L606.2,267.0 L605.7,267.0 L605.2,267.0 L604.7,267.0 L604.2,267.0 L603.7,267.0 L603.2,267.0 L602.7,267.0 L602.2,267.0 L601.7,267.0 L601.2,267.0 L600.7,267.0 L600.2,267.0 L599.7,267.0 L599.2,267.0 L598.7,267.0 L598.2,267.0 L597.7,267.0 L597.2,267.0 L596.7,267.0 L596.2,267.0 L595.7,267.0 L595.2,267.0 L594.7,267.0 L594.2,267.0 L593.7,267.0 L593.2,267.0 L592.7,267.0 L592.2,267.0 L591.7,267.0 L591.2,267.0 L590.7,267.0 L590.2,267.0 L589.7,267.0 L589.2,267.0 L588.7,267.0 L588.2,267.0 L587.7,267.0 L587.2,267.0 L586.7,267.0 L586.2,267.0 L585.7,267.0 L585.2,267.0 L584.7,267.0 L584.2,267.0 L583.7,267.0 L583.2,267.0 L582.7,267.0 L582.2,267.0 L581.7,267.0 L581.2,267.0 L580.7,267.0 L580.2,267.0 L579.7,267.0 L579.2,267.0 L578.7,267.0 L578.2,267.0 L577.7,267.0 L577.2,267.0 L576.7,267.0 L576.2,267.0 L575.7,267.0 L575.2,267.0 L574.7,267.0 L574.2,267.0 L573.7,267.0 L573.2,267.0 L572.7,267.0 L572.2,267.0 L571.7,267.0 L571.2,267.0 L570.7,267.0 L570.2,267.0 L569.7,267.0 L569.2,267.0 L568.7,267.0 L568.2,267.0 L567.7,267.1 L567.2,267.2 L566.7,267.3 L566.2,267.4 L565.7,267.5 L565.2,267.6 L564.7,267.8 L564.2,267.8 L563.7,267.9 L563.2,268.0 L562.7,268.4 L562.2,268.6 L561.7,268.7 L561.2,268.9 L560.7,267.0 L560.2,267.0 L559.7,267.0 L559.2,267.0 L558.7,267.0 L558.2,267.0 L557.7,267.0 L557.2,267.0 L556.7,267.0 L556.2,267.0 L555.7,267.0 L555.2,267.1 L554.7,267.1 L554.2,267.2 L553.7,267.3 L553.2,267.3 L552.7,267.4 L552.2,267.6 L551.7,267.7 L551.2,267.6 L550.7,267.8 L550.2,268.0 L549.7,268.1 L549.2,268.1 L548.7,268.4 L548.2,268.4 L547.7,268.6 L547.2,268.8 L546.7,269.1 L546.2,269.3 L545.7,269.5 L545.2,269.6 L544.7,269.9 L544.2,270.3 L543.7,270.9 L543.2,271.1 L542.7,267.0 L542.2,267.0 L541.7,267.0 L541.2,267.1 L540.7,267.3 L540.2,267.5 L539.7,267.7 L539.2,268.0 L538.7,268.3 L538.2,268.5 L537.7,268.9 L537.2,269.3 L536.7,269.4 L536.2,270.1 L535.7,270.6 L535.2,271.0 L534.7,271.8 L534.2,271.9 L533.7,273.1 L533.2,273.4 L532.7,274.7 L532.2,275.8 L531.7,276.3 L531.2,268.2 L530.7,268.3 L530.2,268.4 L529.7,268.4 L529.2,268.6 L528.7,268.8 L528.2,269.1 L527.7,269.2 L527.2,269.3 L526.7,269.5 L526.2,269.7 L525.7,270.0 L525.2,270.6 L524.7,270.5 L524.2,270.9 L523.7,271.8 L523.2,272.8 L522.7,273.3 L522.2,273.9 L521.7,275.8 L521.2,277.3 L520.7,279.6 L520.2,282.2 L519.7,267.0 L519.2,267.0 L518.7,267.0 L518.2,267.0 L517.7,267.0 L517.2,267.0 L516.7,267.0 L516.2,267.0 L515.7,267.0 L515.2,267.0 L514.7,267.0 L514.2,267.0 L513.7,267.1 L513.2,267.1 L512.7,267.2 L512.2,267.3 L511.7,267.4 L511.2,267.5 L510.7,267.5 L510.2,267.6 L509.7,267.7 L509.2,267.8 L508.7,267.9 L508.2,268.1 L507.7,268.1 L507.2,268.3 L506.7,268.5 L506.2,268.5 L505.7,268.7 L505.2,268.7 L504.7,269.0 L504.2,269.3 L503.7,269.4 L503.2,269.5 L502.7,269.5 L502.2,270.0 L501.7,270.0 L501.2,270.4 L500.7,270.7 L500.2,271.2 L499.7,271.4 L499.2,271.9 L498.7,272.4 L498.2,273.1 L497.7,273.0 L497.2,274.2 L496.7,267.0 L496.2,267.1 L495.7,267.3 L495.2,267.5 L494.7,267.7 L494.2,267.7 L493.7,267.8 L493.2,267.8 L492.7,267.9 L492.2,267.9 L491.7,268.1 L491.2,268.2 L490.7,268.1 L490.2,268.3 L489.7,268.3 L489.2,268.3 L488.7,268.4 L488.2,268.5 L487.7,268.7 L487.2,268.7 L486.7,268.7 L486.2,268.8 L485.7,268.9 L485.2,268.9 L484.7,269.0 L484.2,269.0 L483.7,269.2 L483.2,269.2 L482.7,269.4 L482.2,269.3 L481.7,269.2 L481.2,269.6 L480.7,269.5 L480.2,269.7 L479.7,269.6 L479.2,269.7 L478.7,269.8 L478.2,269.8 L477.7,269.9 L477.2,270.4 L476.7,270.5 L476.2,270.3 L475.7,270.8 L475.2,270.7 L474.7,271.0 L474.2,270.7 L473.7,271.2 L473.2,271.2 L472.7,271.5 L472.2,271.5 L471.7,271.4 L471.2,271.6 L470.7,271.9 L470.2,271.8 L469.7,272.5 L469.2,272.3 L468.7,272.6 L468.2,272.5 L467.7,273.3 L467.2,273.2 L466.7,273.1 L466.2,273.5 L465.7,273.3 L465.2,274.2 L464.7,274.6 L464.2,274.3 L463.7,274.4 L463.2,275.5 L462.7,276.1 L462.2,275.7 L461.7,276.3 L461.2,277.2 L460.7,276.4 L460.2,277.4 L459.7,276.2 L459.2,277.3 L458.7,276.6 L458.2,277.4 L457.7,277.7 L457.2,276.9 L456.7,277.1 L456.2,277.5 L455.7,276.6 L455.2,277.7 L454.7,276.7 L454.2,276.5 L453.7,278.5 L453.2,277.7 L452.7,277.9 L452.2,276.8 L451.7,277.6 L451.2,267.0 L450.7,267.0 L450.2,267.0 L449.7,267.0 L449.2,267.0 L448.7,267.0 L448.2,267.0 L447.7,267.0 L447.2,267.0 L446.7,267.0 L446.2,267.0 L445.7,267.1 L445.2,267.2 L444.7,267.3 L444.2,267.4 L443.7,267.5 L443.2,267.6 L442.7,267.7 L442.2,267.8 L441.7,268.1 L441.2,268.1 L440.7,268.3 L440.2,268.4 L439.7,268.7 L439.2,268.9 L438.7,268.8 L438.2,269.3 L437.7,269.4 L437.2,269.6 L436.7,269.7 L436.2,270.0 L435.7,270.2 L435.2,270.6 L434.7,270.7 L434.2,271.3 L433.7,271.4 L433.2,271.8 L432.7,271.7 L432.2,272.8 L431.7,273.1 L431.2,273.7 L430.7,274.0 L430.2,274.3 L429.7,275.2 L429.2,276.1 L428.7,276.7 L428.2,276.4 L427.7,267.0 L427.2,267.0 L426.7,267.0 L426.2,267.0 L425.7,267.0 L425.2,267.0 L424.7,267.0 L424.2,267.0 L423.7,267.0 L423.2,267.0 L422.7,267.1 L422.2,267.2 L421.7,267.3 L421.2,267.3 L420.7,267.5 L420.2,267.5 L419.7,267.7 L419.2,267.8 L418.7,267.8 L418.2,268.1 L417.7,268.1 L417.2,268.4 L416.7,268.3 L416.2,268.5 L415.7,268.9 L415.2,268.8 L414.7,269.1 L414.2,269.1 L413.7,269.6 L413.2,269.5 L412.7,269.7 L412.2,270.2 L411.7,270.6 L411.2,270.8 L410.7,271.2 L410.2,270.9 L409.7,271.4 L409.2,271.7 L408.7,272.7 L408.2,272.3 L407.7,273.4 L407.2,274.0 L406.7,274.0 L406.2,274.8 L405.7,276.6 L405.2,276.3 L404.7,267.0 L404.2,267.0 L403.7,267.0 L403.2,267.0 L402.7,267.0 L402.2,267.0 L401.7,267.0 L401.2,267.0 L400.7,267.0 L400.2,267.0 L399.7,267.0 L399.2,267.0 L398.7,267.0 L398.2,267.0 L397.7,267.0 L397.2,267.0 L396.7,267.0 L396.2,267.0 L395.7,267.0 L395.2,267.0 L394.7,267.0 L394.2,267.0 L393.7,267.0 L393.2,267.0 L392.7,267.0 L392.2,267.0 L391.7,267.0 L391.2,267.0 L390.7,267.0 L390.2,267.0 L389.7,267.0 L389.2,267.0 L388.7,267.1 L388.2,267.1 L387.7,267.1 L387.2,267.1 L386.7,267.2 L386.2,267.2 L385.7,267.2 L385.2,267.3 L384.7,267.3 L384.2,267.3 L383.7,267.4 L383.2,267.4 L382.7,267.4 L382.2,267.5 L381.7,267.6 L381.2,267.5 L380.7,267.6 L380.2,267.7 L379.7,267.7 L379.2,267.8 L378.7,267.8 L378.2,267.9 L377.7,267.9 L377.2,268.1 L376.7,268.1 L376.2,268.1 L375.7,268.1 L375.2,268.2 L374.7,268.2 L374.2,268.4 L373.7,268.4 L373.2,268.5 L372.7,268.5 L372.2,268.5 L371.7,268.5 L371.2,268.8 L370.7,268.9 L370.2,268.8 L369.7,268.9 L369.2,269.1 L368.7,269.0 L368.2,269.3 L367.7,269.4 L367.2,269.4 L366.7,269.3 L366.2,269.4 L365.7,269.6 L365.2,269.7 L364.7,269.9 L364.2,270.0 L363.7,270.2 L363.2,270.4 L362.7,270.3 L362.2,270.8 L361.7,270.9 L361.2,271.4 L360.7,271.4 L360.2,272.1 L359.7,272.8 L359.2,273.1 L358.7,267.0 L358.2,267.0 L357.7,267.0 L357.2,267.1 L356.7,267.2 L356.2,267.3 L355.7,267.5 L355.2,267.8 L354.7,268.1 L354.2,268.3 L353.7,268.7 L353.2,268.7 L352.7,269.3 L352.2,269.4 L351.7,270.1 L351.2,270.3 L350.7,270.7 L350.2,271.4 L349.7,272.0 L349.2,273.0 L348.7,273.5 L348.2,274.9 L347.7,275.9 L347.2,268.0 L346.7,268.2 L346.2,268.2 L345.7,268.3 L345.2,268.5 L344.7,268.7 L344.2,268.8 L343.7,269.0 L343.2,269.1 L342.7,269.4 L342.2,269.7 L341.7,270.1 L341.2,270.1 L340.7,270.7 L340.2,271.0 L339.7,271.8 L339.2,271.9 L338.7,273.2 L338.2,273.7 L337.7,276.1 L337.2,276.6 L336.7,278.5 L336.2,282.7 L335.7,267.0 L335.2,267.0 L334.7,267.0 L334.2,267.0 L333.7,267.0 L333.2,267.0 L332.7,267.0 L332.2,267.0 L331.7,267.0 L331.2,267.0 L330.7,267.0 L330.2,267.0 L329.7,267.0 L329.2,267.0 L328.7,267.0 L328.2,267.0 L327.7,267.0 L327.2,267.0 L326.7,267.0 L326.2,267.1 L325.7,267.1 L325.2,267.2 L324.7,267.3 L324.2,267.4 L323.7,267.4 L323.2,267.5 L322.7,267.6 L322.2,267.7 L321.7,267.8 L321.2,268.0 L320.7,268.0 L320.2,268.2 L319.7,268.3 L319.2,268.5 L318.7,268.6 L318.2,268.7 L317.7,268.8 L317.2,269.1 L316.7,269.3 L316.2,269.7 L315.7,269.7 L315.2,270.1 L314.7,270.3 L314.2,270.4 L313.7,271.2 L313.2,271.7 L312.7,271.6 L312.2,267.2 L311.7,267.3 L311.2,267.3 L310.7,267.4 L310.2,267.4 L309.7,267.5 L309.2,267.5 L308.7,267.6 L308.2,267.6 L307.7,267.7 L307.2,267.8 L306.7,267.8 L306.2,267.9 L305.7,268.0 L305.2,268.0 L304.7,268.1 L304.2,268.2 L303.7,268.1 L303.2,268.2 L302.7,268.3 L302.2,268.3 L301.7,268.4 L301.2,268.6 L300.7,268.6 L300.2,268.5 L299.7,268.8 L299.2,268.6 L298.7,268.7 L298.2,269.0 L297.7,269.1 L297.2,269.1 L296.7,269.1 L296.2,269.2 L295.7,269.2 L295.2,269.4 L294.7,269.5 L294.2,269.7 L293.7,269.8 L293.2,269.7 L292.7,269.9 L292.2,270.0 L291.7,270.2 L291.2,270.0 L290.7,270.1 L290.2,270.6 L289.7,270.5 L289.2,270.4 L288.7,270.7 L288.2,270.7 L287.7,270.6 L287.2,271.0 L286.7,271.2 L286.2,271.4 L285.7,271.5 L285.2,271.7 L284.7,271.6 L284.2,271.5 L283.7,272.3 L283.2,272.3 L282.7,272.0 L282.2,272.4 L281.7,272.7 L281.2,272.7 L280.7,272.8 L280.2,273.3 L279.7,273.6 L279.2,274.7 L278.7,274.4 L278.2,275.3 L277.7,276.5 L277.2,277.1 L276.7,277.4 L276.2,276.4 L275.7,276.9 L275.2,278.4 L274.7,278.5 L274.2,278.0 L273.7,279.7 L273.2,279.1 L272.7,280.0 L272.2,279.4 L271.7,279.5 L271.2,278.7 L270.7,278.9 L270.2,278.2 L269.7,277.2 L269.2,276.8 L268.7,276.4 L268.2,276.0 L267.7,276.0 L267.2,275.0 L266.7,270.1 L266.2,267.0 L265.7,267.0 L265.2,267.0 L264.7,267.0 L264.2,267.0 L263.7,267.0 L263.2,267.0 L262.7,267.0 L262.2,267.0 L261.7,267.0 L261.2,267.0 L260.7,267.0 L260.2,267.0 L259.7,267.0 L259.2,267.0 L258.7,267.0 L258.2,267.1 L257.7,267.1 L257.2,267.2 L256.7,267.2 L256.2,267.4 L255.7,267.3 L255.2,267.5 L254.7,267.5 L254.2,267.6 L253.7,267.8 L253.2,267.9 L252.7,268.0 L252.2,267.9 L251.7,268.0 L251.2,268.1 L250.7,268.3 L250.2,268.5 L249.7,268.6 L249.2,268.8 L248.7,269.0 L248.2,269.2 L247.7,269.2 L247.2,269.6 L246.7,269.6 L246.2,270.1 L245.7,270.2 L245.2,270.6 L244.7,270.7 L244.2,271.4 L243.7,271.8 L243.2,267.0 L242.7,267.0 L242.2,267.0 L241.7,267.0 L241.2,267.0 L240.7,267.0 L240.2,267.0 L239.7,267.0 L239.2,267.0 L238.7,267.0 L238.2,267.0 L237.7,267.0 L237.2,267.1 L236.7,267.1 L236.2,267.1 L235.7,267.2 L235.2,267.3 L234.7,267.4 L234.2,267.5 L233.7,267.6 L233.2,267.6 L232.7,267.8 L232.2,267.9 L231.7,268.0 L231.2,268.0 L230.7,268.3 L230.2,268.4 L229.7,268.4 L229.2,268.7 L228.7,268.8 L228.2,268.9 L227.7,269.2 L227.2,269.3 L226.7,269.7 L226.2,269.8 L225.7,269.7 L225.2,270.1 L224.7,270.2 L224.2,270.7 L223.7,271.2 L223.2,271.8 L222.7,271.8 L222.2,272.8 L221.7,273.5 L221.2,274.1 L220.7,267.0 L220.2,267.0 L219.7,267.0 L219.2,267.0 L218.7,267.0 L218.2,267.0 L217.7,267.0 L217.2,267.0 L216.7,267.0 L216.2,267.0 L215.7,267.0 L215.2,267.0 L214.7,267.0 L214.2,267.0 L213.7,267.0 L213.2,267.0 L212.7,267.0 L212.2,267.0 L211.7,267.0 L211.2,267.0 L210.7,267.0 L210.2,267.0 L209.7,267.0 L209.2,267.0 L208.7,267.0 L208.2,267.0 L207.7,267.0 L207.2,267.1 L206.7,267.1 L206.2,267.2 L205.7,267.2 L205.2,267.2 L204.7,267.2 L204.2,267.3 L203.7,267.4 L203.2,267.4 L202.7,267.5 L202.2,267.5 L201.7,267.6 L201.2,267.6 L200.7,267.7 L200.2,267.7 L199.7,267.8 L199.2,267.8 L198.7,268.0 L198.2,268.0 L197.7,268.0 L197.2,268.1 L196.7,268.1 L196.2,268.1 L195.7,268.4 L195.2,268.5 L194.7,268.4 L194.2,268.4 L193.7,268.5 L193.2,268.7 L192.7,268.6 L192.2,268.9 L191.7,269.0 L191.2,268.8 L190.7,269.1 L190.2,269.0 L189.7,269.2 L189.2,269.5 L188.7,269.3 L188.2,269.7 L187.7,269.8 L187.2,269.9 L186.7,269.8 L186.2,269.8 L185.7,269.9 L185.2,270.1 L184.7,270.1 L184.2,270.1 L183.7,270.7 L183.2,270.7 L182.7,271.0 L182.2,271.1 L181.7,271.0 L181.2,270.9 L180.7,271.5 L180.2,271.3 L179.7,272.0 L179.2,272.4 L178.7,272.1 L178.2,272.7 L177.7,273.0 L177.2,273.2 L176.7,274.3 L176.2,274.0 L175.7,275.3 L175.2,276.0Z" fill="#07222a"/></svg>
<div style="left:175.2px;top:318.6px;width:368.2px;height:17.6px;background:#1d8c52;"></div>
<svg style="left:175.2px;top:318.8px" width="29" height="6"><polygon points="0,0 28,0 25,5.4 0,5.4" fill="#2f6f4c"/></svg><span style="left:176.79999999999998px;top:320px;font-size:4.4px;line-height:4.4px;color:#d8eee0;">SampleOne</span>
<svg style="left:359.4px;top:318.8px" width="29" height="6"><polygon points="0,0 28,0 25,5.4 0,5.4" fill="#2f6f4c"/></svg><span style="left:361.0px;top:320px;font-size:4.4px;line-height:4.4px;color:#d8eee0;">SampleOne</span>
<div style="left:358.6px;top:318.6px;width:0.8px;height:17.6px;background:#146a3c;"></div>
<div style="left:175.2px;top:327.4px;width:46px;height:0.9px;background:#55b080;"></div>
<div style="left:267.2px;top:327.4px;width:46px;height:0.9px;background:#55b080;"></div>
<div style="left:359.2px;top:327.4px;width:46px;height:0.9px;background:#55b080;"></div>
<div style="left:451.2px;top:327.4px;width:46px;height:0.9px;background:#55b080;"></div>
<div style="left:819px;top:336.4px;width:73px;height:18.4px;background:#1f92e4;"></div>
<svg style="left:819px;top:336px" width="73" height="19"><polygon points="0,6.5 1,6.5 2,6.5 3,6.5 4,6.5 5,6.5 6,6.5 7,6.5 8,6.5 9,6.5 10,6.5 11,6.5 12,6.5 13,6.5 14,6.5 15,6.5 16,6.5 17,6.5 18,6.5 19,6.5 20,6.5 21,6.5 22,6.5 23,6.5 24,6.5 25,6.5 26,6.5 27,6.5 28,6.5 29,6.5 30,6.5 31,6.5 32,6.5 33,6.5 34,6.5 35,6.5 36,3.7 37,3.0 38,3.2 39,2.9 40,2.9 41,3.4 42,3.4 43,3.6 44,3.7 45,3.8 46,3.7 47,3.5 48,4.2 49,3.7 50,4.1 51,4.3 52,4.0 53,4.5 54,4.8 55,4.8 56,4.5 57,4.9 58,3.9 59,4.6 60,3.8 61,3.6 62,4.2 63,3.4 64,3.6 65,3.4 66,3.8 67,3.7 68,3.6 69,2.8 70,3.5 71,3.0 72,2.9 73,3.0 73,10.0 72,10.1 71,10.0 70,9.5 69,10.2 68,9.4 67,9.3 66,9.2 65,9.6 64,9.4 63,9.6 62,8.8 61,9.4 60,9.2 59,8.4 58,9.1 57,8.1 56,8.5 55,8.2 54,8.2 53,8.5 52,9.0 51,8.7 50,8.9 49,9.3 48,8.8 47,9.5 46,9.3 45,9.2 44,9.3 43,9.4 42,9.6 41,9.6 40,10.1 39,10.1 38,9.8 37,10.0 36,9.3 35,6.5 34,6.5 33,6.5 32,6.5 31,6.5 30,6.5 29,6.5 28,6.5 27,6.5 26,6.5 25,6.5 24,6.5 23,6.5 22,6.5 21,6.5 20,6.5 19,6.5 18,6.5 17,6.5 16,6.5 15,6.5 14,6.5 13,6.5 12,6.5 11,6.5 10,6.5 9,6.5 8,6.5 7,6.5 6,6.5 5,6.5 4,6.5 3,6.5 2,6.5 1,6.5 0,6.5" fill="#125a94"/><polygon points="0,11.5 1,11.6 2,11.5 3,11.4 4,12.1 5,11.6 6,11.7 7,11.8 8,12.8 9,12.1 10,13.0 11,13.0 12,12.6 13,12.1 14,12.5 15,11.8 16,12.0 17,12.0 18,11.9 19,11.9 20,11.9 21,11.7 22,11.2 23,10.9 24,11.6 25,11.7 26,10.8 27,11.2 28,11.4 29,11.6 30,11.4 31,11.3 32,11.7 33,11.9 34,12.3 35,11.7 36,12.7 37,12.4 38,12.3 39,13.1 40,12.6 41,12.2 42,12.3 43,12.0 44,12.5 45,12.0 46,12.1 47,11.4 48,11.8 49,11.5 50,10.9 51,11.0 52,10.9 53,11.3 54,11.3 55,11.1 56,11.3 57,11.5 58,11.5 59,11.8 60,11.7 61,11.3 62,11.4 63,11.9 64,12.2 65,12.5 66,12.9 67,12.9 68,12.6 69,12.4 70,12.6 71,12.1 72,11.9 73,11.9 73,17.1 72,17.1 71,16.9 70,16.4 69,16.6 68,16.4 67,16.1 66,16.1 65,16.5 64,16.8 63,17.1 62,17.6 61,17.7 60,17.3 59,17.2 58,17.5 57,17.5 56,17.7 55,17.9 54,17.7 53,17.7 52,18.1 51,18.0 50,18.1 49,17.5 48,17.2 47,17.6 46,16.9 45,17.0 44,16.5 43,17.0 42,16.7 41,16.8 40,16.4 39,15.9 38,16.7 37,16.6 36,16.3 35,17.3 34,16.7 33,17.1 32,17.3 31,17.7 30,17.6 29,17.4 28,17.6 27,17.8 26,18.2 25,17.3 24,17.4 23,18.1 22,17.8 21,17.3 20,17.1 19,17.1 18,17.1 17,17.0 16,17.0 15,17.2 14,16.5 13,16.9 12,16.4 11,16.0 10,16.0 9,16.9 8,16.2 7,17.2 6,17.3 5,17.4 4,16.9 3,17.6 2,17.5 1,17.4 0,17.5" fill="#125a94"/></svg>
<span style="left:820.5px;top:338px;font-size:4.4px;line-height:4.4px;color:#eaf4fc;">Glitch Flute(3)</span>
<div style="left:288.5px;top:34.6px;width:0.8px;height:321px;background:rgba(170,180,184,0.6);"></div>
<div style="left:543.6px;top:336px;width:0.6px;height:20px;background:#26272c;"></div>
<div style="left:891.6px;top:34px;width:8.4px;height:322px;background:#222428;"></div>
<div style="left:894.4px;top:112px;width:1.5px;height:142px;background:#50535a;"></div>
<svg style="left:892px;top:60px" width="8" height="6"><polygon points="2.6,4.2 5.4,4.2 4,2" fill="#6a6e75"/></svg>
<div style="left:727px;top:111px;width:164.6px;height:207.6px;background:#1c1d20;"></div>
<svg style="left:0;top:0" width="900" height="330"><polygon points="740.8,117.2 743.0,117.3 745.2,117.4 747.4,117.5 749.6,117.7 749.6,117.7 749.1,119.2 748.6,120.7 748.2,122.1 747.7,123.6 747.7,123.6 745.5,123.4 743.2,123.2 740.9,123.1 738.7,123.0 738.7,123.0 739.2,121.6 739.8,120.1 740.3,118.7 740.8,117.2" fill="#2aa6e2" stroke="#2aa6e2" stroke-width="1.4" stroke-linejoin="round"/><polygon points="752.2,118.1 754.4,118.4 756.6,118.7 758.8,119.1 761.0,119.6 761.0,119.6 760.6,121.1 760.2,122.6 759.9,124.1 759.5,125.6 759.5,125.6 757.2,125.1 755.0,124.7 752.7,124.3 750.5,124.0 750.5,124.0 750.9,122.5 751.4,121.0 751.8,119.5 752.2,118.1" fill="#2aa6e2" stroke="#2aa6e2" stroke-width="1.4" stroke-linejoin="round"/><polygon points="763.7,120.2 765.8,120.8 768.0,121.4 770.2,122.0 772.4,122.7 772.4,122.7 772.1,124.2 771.8,125.8 771.6,127.3 771.3,128.8 771.3,128.8 769.0,128.1 766.8,127.4 764.5,126.8 762.3,126.2 762.3,126.2 762.6,124.7 763.0,123.2 763.3,121.7 763.7,120.2" fill="#2aa6e2" stroke="#2aa6e2" stroke-width="1.4" stroke-linejoin="round"/><polygon points="775.1,123.6 777.3,124.4 779.4,125.3 781.6,126.2 783.8,127.2 783.8,127.2 783.6,128.7 783.4,130.2 783.3,131.8 783.1,133.3 783.1,133.3 780.8,132.4 778.5,131.5 776.3,130.6 774.0,129.8 774.0,129.8 774.3,128.2 774.6,126.7 774.8,125.2 775.1,123.6" fill="#2aa6e2" stroke="#2aa6e2" stroke-width="1.4" stroke-linejoin="round"/><polygon points="786.5,128.4 788.7,129.4 790.9,130.5 793.1,131.7 795.2,132.9 795.2,132.9 795.1,134.4 795.0,136.0 794.9,137.5 794.8,139.1 794.8,139.1 792.6,137.9 790.3,136.7 788.1,135.6 785.8,134.6 785.8,134.6 786.0,133.0 786.2,131.5 786.3,129.9 786.5,128.4" fill="#2aa6e2" stroke="#2aa6e2" stroke-width="1.4" stroke-linejoin="round"/><polygon points="797.9,134.4 800.2,135.8 802.4,137.2 804.7,138.6 807.0,140.1 807.0,140.1 807.0,141.7 807.0,143.2 806.9,144.8 806.9,146.3 806.9,146.3 804.6,144.8 802.3,143.4 799.9,142.0 797.6,140.6 797.6,140.6 797.7,139.1 797.8,137.5 797.8,136.0 797.9,134.4" fill="#2aa6e2" stroke="#2aa6e2" stroke-width="1.4" stroke-linejoin="round"/><polygon points="737.7,125.9 739.9,125.9 742.2,126.1 744.5,126.3 746.8,126.5 746.8,126.5 746.4,128.0 745.9,129.4 745.4,130.9 745.0,132.4 745.0,132.4 742.6,132.1 740.3,131.9 737.9,131.7 735.5,131.7 735.5,131.7 736.1,130.2 736.6,128.8 737.1,127.3 737.7,125.9" fill="#2aa6e2" stroke="#2aa6e2" stroke-width="1.4" stroke-linejoin="round"/><polygon points="749.6,126.8 751.9,127.2 754.2,127.6 756.5,128.0 758.8,128.5 758.8,128.5 758.4,130.0 758.0,131.5 757.7,133.0 757.3,134.5 757.3,134.5 754.9,134.0 752.6,133.5 750.2,133.1 747.9,132.7 747.9,132.7 748.3,131.3 748.7,129.8 749.2,128.3 749.6,126.8" fill="#e2e2e4" stroke="#e2e2e4" stroke-width="1.4" stroke-linejoin="round"/><polygon points="761.6,129.2 763.9,129.8 766.1,130.4 768.4,131.1 770.7,131.8 770.7,131.8 770.4,133.3 770.2,134.8 769.9,136.4 769.6,137.9 769.6,137.9 767.3,137.1 764.9,136.4 762.5,135.8 760.2,135.2 760.2,135.2 760.5,133.7 760.9,132.2 761.2,130.7 761.6,129.2" fill="#e2e2e4" stroke="#e2e2e4" stroke-width="1.4" stroke-linejoin="round"/><polygon points="773.5,132.8 775.8,133.6 778.1,134.5 780.4,135.4 782.7,136.4 782.7,136.4 782.5,137.9 782.3,139.4 782.1,141.0 781.9,142.5 781.9,142.5 779.6,141.6 777.2,140.6 774.8,139.7 772.5,138.9 772.5,138.9 772.8,137.3 773.0,135.8 773.3,134.3 773.5,132.8" fill="#e2e2e4" stroke="#e2e2e4" stroke-width="1.4" stroke-linejoin="round"/><polygon points="785.5,137.6 787.8,138.7 790.1,139.8 792.4,140.9 794.6,142.1 794.6,142.1 794.5,143.7 794.4,145.3 794.3,146.8 794.2,148.4 794.2,148.4 791.9,147.2 789.5,146.0 787.2,144.9 784.8,143.8 784.8,143.8 785.0,142.2 785.1,140.7 785.3,139.2 785.5,137.6" fill="#e2e2e4" stroke="#e2e2e4" stroke-width="1.4" stroke-linejoin="round"/><polygon points="797.4,143.7 799.8,145.0 802.2,146.4 804.6,147.9 806.9,149.4 806.9,149.4 806.9,150.9 806.9,152.5 806.9,154.0 806.9,155.6 806.9,155.6 804.4,154.1 802.0,152.6 799.6,151.2 797.1,149.9 797.1,149.9 797.2,148.3 797.3,146.8 797.4,145.2 797.4,143.7" fill="#2aa6e2" stroke="#2aa6e2" stroke-width="1.4" stroke-linejoin="round"/><polygon points="734.5,134.5 736.9,134.6 739.3,134.8 741.7,135.0 744.1,135.2 744.1,135.2 743.6,136.7 743.2,138.2 742.7,139.6 742.2,141.1 742.2,141.1 739.8,140.8 737.3,140.6 734.9,140.4 732.4,140.3 732.4,140.3 732.9,138.8 733.4,137.4 734.0,135.9 734.5,134.5" fill="#2aa6e2" stroke="#2aa6e2" stroke-width="1.4" stroke-linejoin="round"/><polygon points="747.0,135.6 749.4,136.0 751.8,136.4 754.2,136.9 756.6,137.4 756.6,137.4 756.2,138.9 755.8,140.4 755.5,141.9 755.1,143.4 755.1,143.4 752.6,142.9 750.2,142.4 747.7,141.9 745.2,141.5 745.2,141.5 745.7,140.0 746.1,138.6 746.6,137.1 747.0,135.6" fill="#e2e2e4" stroke="#e2e2e4" stroke-width="1.4" stroke-linejoin="round"/><polygon points="759.5,138.1 761.9,138.7 764.3,139.4 766.7,140.1 769.1,140.9 769.1,140.9 768.8,142.4 768.5,143.9 768.2,145.5 767.9,147.0 767.9,147.0 765.5,146.2 763.0,145.5 760.6,144.8 758.1,144.1 758.1,144.1 758.4,142.6 758.8,141.1 759.1,139.6 759.5,138.1" fill="#2aa6e2" stroke="#2aa6e2" stroke-width="1.4" stroke-linejoin="round"/><polygon points="772.0,141.9 774.4,142.7 776.8,143.6 779.2,144.6 781.6,145.6 781.6,145.6 781.4,147.1 781.2,148.6 781.0,150.2 780.8,151.7 780.8,151.7 778.3,150.7 775.9,149.8 773.4,148.9 770.9,148.0 770.9,148.0 771.2,146.5 771.5,144.9 771.7,143.4 772.0,141.9" fill="#2aa6e2" stroke="#2aa6e2" stroke-width="1.4" stroke-linejoin="round"/><polygon points="784.5,146.8 786.9,147.9 789.3,149.0 791.7,150.2 794.0,151.4 794.0,151.4 793.9,153.0 793.8,154.5 793.7,156.1 793.6,157.6 793.6,157.6 791.2,156.4 788.7,155.2 786.3,154.1 783.8,153.0 783.8,153.0 784.0,151.5 784.1,149.9 784.3,148.4 784.5,146.8" fill="#2aa6e2" stroke="#2aa6e2" stroke-width="1.4" stroke-linejoin="round"/><polygon points="797.0,152.9 799.4,154.3 801.9,155.7 804.4,157.1 806.9,158.6 806.9,158.6 806.9,160.2 806.9,161.7 806.9,163.3 806.8,164.8 806.8,164.8 804.3,163.3 801.7,161.9 799.2,160.5 796.7,159.2 796.7,159.2 796.7,157.6 796.8,156.1 796.9,154.5 797.0,152.9" fill="#2aa6e2" stroke="#2aa6e2" stroke-width="1.4" stroke-linejoin="round"/><polygon points="731.4,143.1 733.8,143.2 736.3,143.4 738.8,143.7 741.3,144.0 741.3,144.0 740.9,145.4 740.4,146.9 740.0,148.4 739.5,149.8 739.5,149.8 736.9,149.5 734.4,149.3 731.8,149.1 729.2,148.9 729.2,148.9 729.8,147.5 730.3,146.0 730.8,144.6 731.4,143.1" fill="#2aa6e2" stroke="#2aa6e2" stroke-width="1.4" stroke-linejoin="round"/><polygon points="744.4,144.4 746.9,144.8 749.4,145.3 751.9,145.8 754.4,146.3 754.4,146.3 754.0,147.8 753.6,149.3 753.3,150.8 752.9,152.3 752.9,152.3 750.3,151.7 747.8,151.2 745.2,150.7 742.6,150.3 742.6,150.3 743.1,148.8 743.5,147.4 743.9,145.9 744.4,144.4" fill="#e2e2e4" stroke="#e2e2e4" stroke-width="1.4" stroke-linejoin="round"/><polygon points="757.4,147.1 759.9,147.7 762.4,148.4 764.9,149.2 767.4,150.0 767.4,150.0 767.1,151.5 766.8,153.0 766.5,154.5 766.3,156.1 766.3,156.1 763.7,155.3 761.1,154.5 758.6,153.8 756.0,153.1 756.0,153.1 756.4,151.6 756.7,150.1 757.1,148.6 757.4,147.1" fill="#e2e2e4" stroke="#e2e2e4" stroke-width="1.4" stroke-linejoin="round"/><polygon points="770.4,151.0 772.9,151.9 775.4,152.8 777.9,153.8 780.4,154.8 780.4,154.8 780.2,156.3 780.0,157.8 779.8,159.4 779.7,160.9 779.7,160.9 777.1,159.9 774.5,158.9 772.0,158.0 769.4,157.1 769.4,157.1 769.7,155.6 769.9,154.0 770.2,152.5 770.4,151.0" fill="#e2e2e4" stroke="#e2e2e4" stroke-width="1.4" stroke-linejoin="round"/><polygon points="783.5,156.0 786.0,157.1 788.5,158.3 791.0,159.5 793.4,160.7 793.4,160.7 793.3,162.2 793.2,163.8 793.1,165.3 793.0,166.9 793.0,166.9 790.5,165.7 787.9,164.5 785.4,163.3 782.8,162.2 782.8,162.2 783.0,160.7 783.1,159.1 783.3,157.6 783.5,156.0" fill="#2aa6e2" stroke="#2aa6e2" stroke-width="1.4" stroke-linejoin="round"/><polygon points="796.5,162.2 799.1,163.6 801.7,165.0 804.2,166.4 806.8,167.9 806.8,167.9 806.8,169.4 806.8,171.0 806.8,172.5 806.8,174.1 806.8,174.1 804.1,172.6 801.5,171.2 798.8,169.8 796.2,168.4 796.2,168.4 796.3,166.9 796.3,165.3 796.4,163.8 796.5,162.2" fill="#2aa6e2" stroke="#2aa6e2" stroke-width="1.4" stroke-linejoin="round"/><polygon points="728.2,151.8 730.8,151.9 733.4,152.1 736.0,152.4 738.6,152.7 738.6,152.7 738.1,154.2 737.7,155.6 737.2,157.1 736.8,158.6 736.8,158.6 734.1,158.2 731.4,157.9 728.8,157.7 726.1,157.6 726.1,157.6 726.6,156.1 727.1,154.7 727.7,153.2 728.2,151.8" fill="#2aa6e2" stroke="#2aa6e2" stroke-width="1.4" stroke-linejoin="round"/><polygon points="741.8,153.2 744.4,153.6 747.0,154.1 749.6,154.7 752.2,155.3 752.2,155.3 751.8,156.8 751.4,158.3 751.0,159.7 750.7,161.2 750.7,161.2 748.0,160.6 745.3,160.1 742.7,159.5 740.0,159.1 740.0,159.1 740.4,157.6 740.9,156.1 741.3,154.7 741.8,153.2" fill="#e2e2e4" stroke="#e2e2e4" stroke-width="1.4" stroke-linejoin="round"/><polygon points="755.3,156.0 757.9,156.7 760.5,157.5 763.1,158.2 765.7,159.1 765.7,159.1 765.4,160.6 765.2,162.1 764.9,163.6 764.6,165.1 764.6,165.1 761.9,164.3 759.3,163.5 756.6,162.8 753.9,162.1 753.9,162.1 754.3,160.6 754.6,159.0 755.0,157.5 755.3,156.0" fill="#2aa6e2" stroke="#2aa6e2" stroke-width="1.4" stroke-linejoin="round"/><polygon points="768.9,160.1 771.5,161.0 774.1,162.0 776.7,162.9 779.3,164.0 779.3,164.0 779.1,165.5 778.9,167.1 778.7,168.6 778.5,170.1 778.5,170.1 775.9,169.1 773.2,168.1 770.5,167.1 767.9,166.2 767.9,166.2 768.1,164.7 768.4,163.2 768.6,161.6 768.9,160.1" fill="#2aa6e2" stroke="#2aa6e2" stroke-width="1.4" stroke-linejoin="round"/><polygon points="782.5,165.3 785.1,166.4 787.7,167.5 790.3,168.7 792.8,169.9 792.8,169.9 792.7,171.5 792.6,173.0 792.5,174.6 792.4,176.1 792.4,176.1 789.8,174.9 787.1,173.7 784.4,172.6 781.8,171.5 781.8,171.5 782.0,169.9 782.1,168.4 782.3,166.8 782.5,165.3" fill="#2aa6e2" stroke="#2aa6e2" stroke-width="1.4" stroke-linejoin="round"/><polygon points="796.0,171.5 798.7,172.8 801.4,174.2 804.1,175.6 806.8,177.1 806.8,177.1 806.8,178.7 806.8,180.2 806.8,181.8 806.7,183.3 806.7,183.3 804.0,181.9 801.2,180.4 798.5,179.0 795.7,177.7 795.7,177.7 795.8,176.1 795.9,174.6 795.9,173.0 796.0,171.5" fill="#2aa6e2" stroke="#2aa6e2" stroke-width="1.4" stroke-linejoin="round"/><polygon points="725.0,160.4 727.7,160.6 730.4,160.8 733.1,161.1 735.9,161.5 735.9,161.5 735.4,162.9 734.9,164.4 734.5,165.9 734.0,167.3 734.0,167.3 731.2,166.9 728.5,166.6 725.7,166.4 722.9,166.2 722.9,166.2 723.5,164.7 724.0,163.3 724.5,161.9 725.0,160.4" fill="#2aa6e2" stroke="#2aa6e2" stroke-width="1.4" stroke-linejoin="round"/><polygon points="739.1,162.0 741.8,162.4 744.5,163.0 747.3,163.6 750.0,164.2 750.0,164.2 749.6,165.7 749.2,167.2 748.8,168.7 748.5,170.2 748.5,170.2 745.7,169.5 742.9,168.9 740.2,168.4 737.4,167.9 737.4,167.9 737.8,166.4 738.3,164.9 738.7,163.4 739.1,162.0" fill="#e2e2e4" stroke="#e2e2e4" stroke-width="1.4" stroke-linejoin="round"/><polygon points="753.2,165.0 755.9,165.7 758.6,166.5 761.4,167.3 764.1,168.1 764.1,168.1 763.8,169.7 763.5,171.2 763.2,172.7 762.9,174.2 762.9,174.2 760.2,173.4 757.4,172.5 754.6,171.8 751.9,171.0 751.9,171.0 752.2,169.5 752.6,168.0 752.9,166.5 753.2,165.0" fill="#2aa6e2" stroke="#2aa6e2" stroke-width="1.4" stroke-linejoin="round"/><polygon points="767.3,169.2 770.0,170.1 772.7,171.1 775.5,172.1 778.2,173.2 778.2,173.2 778.0,174.7 777.8,176.3 777.6,177.8 777.4,179.3 777.4,179.3 774.6,178.3 771.9,177.3 769.1,176.3 766.3,175.3 766.3,175.3 766.6,173.8 766.8,172.3 767.1,170.7 767.3,169.2" fill="#2aa6e2" stroke="#2aa6e2" stroke-width="1.4" stroke-linejoin="round"/><polygon points="781.4,174.5 784.1,175.6 786.8,176.8 789.6,178.0 792.3,179.2 792.3,179.2 792.1,180.7 792.0,182.3 791.9,183.9 791.8,185.4 791.8,185.4 789.1,184.2 786.3,183.0 783.5,181.8 780.8,180.7 780.8,180.7 780.9,179.1 781.1,177.6 781.3,176.0 781.4,174.5" fill="#2aa6e2" stroke="#2aa6e2" stroke-width="1.4" stroke-linejoin="round"/><polygon points="795.5,180.7 798.3,182.1 801.1,183.5 803.9,184.9 806.7,186.4 806.7,186.4 806.7,187.9 806.7,189.5 806.7,191.0 806.7,192.6 806.7,192.6 803.8,191.1 801.0,189.7 798.1,188.3 795.2,187.0 795.2,187.0 795.3,185.4 795.4,183.9 795.5,182.3 795.5,180.7" fill="#2aa6e2" stroke="#2aa6e2" stroke-width="1.4" stroke-linejoin="round"/><polygon points="721.9,169.0 724.7,169.2 727.5,169.5 730.3,169.8 733.1,170.2 733.1,170.2 732.6,171.7 732.2,173.1 731.7,174.6 731.3,176.1 731.3,176.1 728.4,175.6 725.5,175.3 722.7,175.0 719.8,174.8 719.8,174.8 720.3,173.4 720.8,171.9 721.4,170.5 721.9,169.0" fill="#2aa6e2" stroke="#2aa6e2" stroke-width="1.4" stroke-linejoin="round"/><polygon points="736.5,170.8 739.3,171.3 742.1,171.8 744.9,172.4 747.7,173.1 747.7,173.1 747.4,174.6 747.0,176.1 746.6,177.6 746.3,179.1 746.3,179.1 743.4,178.4 740.5,177.8 737.6,177.2 734.8,176.6 734.8,176.6 735.2,175.2 735.7,173.7 736.1,172.2 736.5,170.8" fill="#2aa6e2" stroke="#2aa6e2" stroke-width="1.4" stroke-linejoin="round"/><polygon points="751.2,174.0 754.0,174.7 756.8,175.5 759.6,176.3 762.4,177.2 762.4,177.2 762.1,178.7 761.8,180.3 761.5,181.8 761.3,183.3 761.3,183.3 758.4,182.4 755.5,181.6 752.6,180.8 749.8,180.0 749.8,180.0 750.1,178.5 750.5,177.0 750.8,175.5 751.2,174.0" fill="#2aa6e2" stroke="#2aa6e2" stroke-width="1.4" stroke-linejoin="round"/><polygon points="765.8,178.3 768.6,179.3 771.4,180.3 774.2,181.3 777.0,182.4 777.0,182.4 776.8,183.9 776.6,185.5 776.4,187.0 776.3,188.5 776.3,188.5 773.4,187.5 770.5,186.4 767.6,185.4 764.8,184.5 764.8,184.5 765.0,182.9 765.3,181.4 765.5,179.9 765.8,178.3" fill="#2aa6e2" stroke="#2aa6e2" stroke-width="1.4" stroke-linejoin="round"/><polygon points="780.4,183.7 783.2,184.8 786.0,186.0 788.8,187.2 791.7,188.5 791.7,188.5 791.6,190.0 791.5,191.6 791.4,193.1 791.3,194.7 791.3,194.7 788.4,193.4 785.5,192.2 782.6,191.0 779.8,189.9 779.8,189.9 779.9,188.4 780.1,186.8 780.3,185.3 780.4,183.7" fill="#2aa6e2" stroke="#2aa6e2" stroke-width="1.4" stroke-linejoin="round"/><polygon points="795.1,190.0 798.0,191.4 800.9,192.7 803.8,194.2 806.7,195.6 806.7,195.6 806.7,197.2 806.7,198.7 806.7,200.3 806.7,201.8 806.7,201.8 803.7,200.4 800.7,199.0 797.7,197.6 794.8,196.2 794.8,196.2 794.8,194.7 794.9,193.1 795.0,191.6 795.1,190.0" fill="#2aa6e2" stroke="#2aa6e2" stroke-width="1.4" stroke-linejoin="round"/><polygon points="876.0,117.2 873.8,117.3 871.6,117.4 869.4,117.5 867.2,117.7 867.2,117.7 867.7,119.2 868.2,120.7 868.6,122.1 869.1,123.6 869.1,123.6 871.3,123.4 873.6,123.2 875.9,123.1 878.1,123.0 878.1,123.0 877.6,121.6 877.0,120.1 876.5,118.7 876.0,117.2" fill="#2aa6e2" stroke="#2aa6e2" stroke-width="1.4" stroke-linejoin="round"/><polygon points="864.6,118.1 862.4,118.4 860.2,118.7 858.0,119.1 855.8,119.6 855.8,119.6 856.2,121.1 856.6,122.6 856.9,124.1 857.3,125.6 857.3,125.6 859.6,125.1 861.8,124.7 864.1,124.3 866.3,124.0 866.3,124.0 865.9,122.5 865.4,121.0 865.0,119.5 864.6,118.1" fill="#2aa6e2" stroke="#2aa6e2" stroke-width="1.4" stroke-linejoin="round"/><polygon points="853.1,120.2 851.0,120.8 848.8,121.4 846.6,122.0 844.4,122.7 844.4,122.7 844.7,124.2 845.0,125.8 845.2,127.3 845.5,128.8 845.5,128.8 847.8,128.1 850.0,127.4 852.3,126.8 854.5,126.2 854.5,126.2 854.2,124.7 853.8,123.2 853.5,121.7 853.1,120.2" fill="#2aa6e2" stroke="#2aa6e2" stroke-width="1.4" stroke-linejoin="round"/><polygon points="841.7,123.6 839.5,124.4 837.4,125.3 835.2,126.2 833.0,127.2 833.0,127.2 833.2,128.7 833.4,130.2 833.5,131.8 833.7,133.3 833.7,133.3 836.0,132.4 838.3,131.5 840.5,130.6 842.8,129.8 842.8,129.8 842.5,128.2 842.2,126.7 842.0,125.2 841.7,123.6" fill="#2aa6e2" stroke="#2aa6e2" stroke-width="1.4" stroke-linejoin="round"/><polygon points="830.3,128.4 828.1,129.4 825.9,130.5 823.7,131.7 821.6,132.9 821.6,132.9 821.7,134.4 821.8,136.0 821.9,137.5 822.0,139.1 822.0,139.1 824.2,137.9 826.5,136.7 828.7,135.6 831.0,134.6 831.0,134.6 830.8,133.0 830.6,131.5 830.5,129.9 830.3,128.4" fill="#2aa6e2" stroke="#2aa6e2" stroke-width="1.4" stroke-linejoin="round"/><polygon points="818.9,134.4 816.6,135.8 814.4,137.2 812.1,138.6 809.8,140.1 809.8,140.1 809.8,141.7 809.8,143.2 809.9,144.8 809.9,146.3 809.9,146.3 812.2,144.8 814.5,143.4 816.9,142.0 819.2,140.6 819.2,140.6 819.1,139.1 819.0,137.5 819.0,136.0 818.9,134.4" fill="#2aa6e2" stroke="#2aa6e2" stroke-width="1.4" stroke-linejoin="round"/><polygon points="879.1,125.9 876.9,125.9 874.6,126.1 872.3,126.3 870.0,126.5 870.0,126.5 870.4,128.0 870.9,129.4 871.4,130.9 871.8,132.4 871.8,132.4 874.2,132.1 876.5,131.9 878.9,131.7 881.3,131.7 881.3,131.7 880.7,130.2 880.2,128.8 879.7,127.3 879.1,125.9" fill="#2aa6e2" stroke="#2aa6e2" stroke-width="1.4" stroke-linejoin="round"/><polygon points="867.2,126.8 864.9,127.2 862.6,127.6 860.3,128.0 858.0,128.5 858.0,128.5 858.4,130.0 858.8,131.5 859.1,133.0 859.5,134.5 859.5,134.5 861.9,134.0 864.2,133.5 866.6,133.1 868.9,132.7 868.9,132.7 868.5,131.3 868.1,129.8 867.6,128.3 867.2,126.8" fill="#2aa6e2" stroke="#2aa6e2" stroke-width="1.4" stroke-linejoin="round"/><polygon points="855.2,129.2 852.9,129.8 850.7,130.4 848.4,131.1 846.1,131.8 846.1,131.8 846.4,133.3 846.6,134.8 846.9,136.4 847.2,137.9 847.2,137.9 849.5,137.1 851.9,136.4 854.3,135.8 856.6,135.2 856.6,135.2 856.3,133.7 855.9,132.2 855.6,130.7 855.2,129.2" fill="#e2e2e4" stroke="#e2e2e4" stroke-width="1.4" stroke-linejoin="round"/><polygon points="843.3,132.8 841.0,133.6 838.7,134.5 836.4,135.4 834.1,136.4 834.1,136.4 834.3,137.9 834.5,139.4 834.7,141.0 834.9,142.5 834.9,142.5 837.2,141.6 839.6,140.6 842.0,139.7 844.3,138.9 844.3,138.9 844.0,137.3 843.8,135.8 843.5,134.3 843.3,132.8" fill="#e2e2e4" stroke="#e2e2e4" stroke-width="1.4" stroke-linejoin="round"/><polygon points="831.3,137.6 829.0,138.7 826.7,139.8 824.4,140.9 822.2,142.1 822.2,142.1 822.3,143.7 822.4,145.3 822.5,146.8 822.6,148.4 822.6,148.4 824.9,147.2 827.3,146.0 829.6,144.9 832.0,143.8 832.0,143.8 831.8,142.2 831.7,140.7 831.5,139.2 831.3,137.6" fill="#e2e2e4" stroke="#e2e2e4" stroke-width="1.4" stroke-linejoin="round"/><polygon points="819.4,143.7 817.0,145.0 814.6,146.4 812.2,147.9 809.9,149.4 809.9,149.4 809.9,150.9 809.9,152.5 809.9,154.0 809.9,155.6 809.9,155.6 812.4,154.1 814.8,152.6 817.2,151.2 819.7,149.9 819.7,149.9 819.6,148.3 819.5,146.8 819.4,145.2 819.4,143.7" fill="#2aa6e2" stroke="#2aa6e2" stroke-width="1.4" stroke-linejoin="round"/><polygon points="882.3,134.5 879.9,134.6 877.5,134.8 875.1,135.0 872.7,135.2 872.7,135.2 873.2,136.7 873.6,138.2 874.1,139.6 874.6,141.1 874.6,141.1 877.0,140.8 879.5,140.6 881.9,140.4 884.4,140.3 884.4,140.3 883.9,138.8 883.4,137.4 882.8,135.9 882.3,134.5" fill="#2aa6e2" stroke="#2aa6e2" stroke-width="1.4" stroke-linejoin="round"/><polygon points="869.8,135.6 867.4,136.0 865.0,136.4 862.6,136.9 860.2,137.4 860.2,137.4 860.6,138.9 861.0,140.4 861.3,141.9 861.7,143.4 861.7,143.4 864.2,142.9 866.6,142.4 869.1,141.9 871.6,141.5 871.6,141.5 871.1,140.0 870.7,138.6 870.2,137.1 869.8,135.6" fill="#e2e2e4" stroke="#e2e2e4" stroke-width="1.4" stroke-linejoin="round"/><polygon points="857.3,138.1 854.9,138.7 852.5,139.4 850.1,140.1 847.7,140.9 847.7,140.9 848.0,142.4 848.3,143.9 848.6,145.5 848.9,147.0 848.9,147.0 851.3,146.2 853.8,145.5 856.2,144.8 858.7,144.1 858.7,144.1 858.4,142.6 858.0,141.1 857.7,139.6 857.3,138.1" fill="#2aa6e2" stroke="#2aa6e2" stroke-width="1.4" stroke-linejoin="round"/><polygon points="844.8,141.9 842.4,142.7 840.0,143.6 837.6,144.6 835.2,145.6 835.2,145.6 835.4,147.1 835.6,148.6 835.8,150.2 836.0,151.7 836.0,151.7 838.5,150.7 840.9,149.8 843.4,148.9 845.9,148.0 845.9,148.0 845.6,146.5 845.3,144.9 845.1,143.4 844.8,141.9" fill="#2aa6e2" stroke="#2aa6e2" stroke-width="1.4" stroke-linejoin="round"/><polygon points="832.3,146.8 829.9,147.9 827.5,149.0 825.1,150.2 822.8,151.4 822.8,151.4 822.9,153.0 823.0,154.5 823.1,156.1 823.2,157.6 823.2,157.6 825.6,156.4 828.1,155.2 830.5,154.1 833.0,153.0 833.0,153.0 832.8,151.5 832.7,149.9 832.5,148.4 832.3,146.8" fill="#e2e2e4" stroke="#e2e2e4" stroke-width="1.4" stroke-linejoin="round"/><polygon points="819.8,152.9 817.4,154.3 814.9,155.7 812.4,157.1 809.9,158.6 809.9,158.6 809.9,160.2 809.9,161.7 809.9,163.3 810.0,164.8 810.0,164.8 812.5,163.3 815.1,161.9 817.6,160.5 820.1,159.2 820.1,159.2 820.1,157.6 820.0,156.1 819.9,154.5 819.8,152.9" fill="#2aa6e2" stroke="#2aa6e2" stroke-width="1.4" stroke-linejoin="round"/><polygon points="885.4,143.1 883.0,143.2 880.5,143.4 878.0,143.7 875.5,144.0 875.5,144.0 875.9,145.4 876.4,146.9 876.8,148.4 877.3,149.8 877.3,149.8 879.9,149.5 882.4,149.3 885.0,149.1 887.6,148.9 887.6,148.9 887.0,147.5 886.5,146.0 886.0,144.6 885.4,143.1" fill="#2aa6e2" stroke="#2aa6e2" stroke-width="1.4" stroke-linejoin="round"/><polygon points="872.4,144.4 869.9,144.8 867.4,145.3 864.9,145.8 862.4,146.3 862.4,146.3 862.8,147.8 863.2,149.3 863.5,150.8 863.9,152.3 863.9,152.3 866.5,151.7 869.0,151.2 871.6,150.7 874.2,150.3 874.2,150.3 873.7,148.8 873.3,147.4 872.9,145.9 872.4,144.4" fill="#e2e2e4" stroke="#e2e2e4" stroke-width="1.4" stroke-linejoin="round"/><polygon points="859.4,147.1 856.9,147.7 854.4,148.4 851.9,149.2 849.4,150.0 849.4,150.0 849.7,151.5 850.0,153.0 850.3,154.5 850.5,156.1 850.5,156.1 853.1,155.3 855.7,154.5 858.2,153.8 860.8,153.1 860.8,153.1 860.4,151.6 860.1,150.1 859.7,148.6 859.4,147.1" fill="#2aa6e2" stroke="#2aa6e2" stroke-width="1.4" stroke-linejoin="round"/><polygon points="846.4,151.0 843.9,151.9 841.4,152.8 838.9,153.8 836.4,154.8 836.4,154.8 836.6,156.3 836.8,157.8 837.0,159.4 837.1,160.9 837.1,160.9 839.7,159.9 842.3,158.9 844.8,158.0 847.4,157.1 847.4,157.1 847.1,155.6 846.9,154.0 846.6,152.5 846.4,151.0" fill="#2aa6e2" stroke="#2aa6e2" stroke-width="1.4" stroke-linejoin="round"/><polygon points="833.3,156.0 830.8,157.1 828.3,158.3 825.8,159.5 823.4,160.7 823.4,160.7 823.5,162.2 823.6,163.8 823.7,165.3 823.8,166.9 823.8,166.9 826.3,165.7 828.9,164.5 831.4,163.3 834.0,162.2 834.0,162.2 833.8,160.7 833.7,159.1 833.5,157.6 833.3,156.0" fill="#e2e2e4" stroke="#e2e2e4" stroke-width="1.4" stroke-linejoin="round"/><polygon points="820.3,162.2 817.7,163.6 815.1,165.0 812.6,166.4 810.0,167.9 810.0,167.9 810.0,169.4 810.0,171.0 810.0,172.5 810.0,174.1 810.0,174.1 812.7,172.6 815.3,171.2 818.0,169.8 820.6,168.4 820.6,168.4 820.5,166.9 820.5,165.3 820.4,163.8 820.3,162.2" fill="#2aa6e2" stroke="#2aa6e2" stroke-width="1.4" stroke-linejoin="round"/><polygon points="888.6,151.8 886.0,151.9 883.4,152.1 880.8,152.4 878.2,152.7 878.2,152.7 878.7,154.2 879.1,155.6 879.6,157.1 880.0,158.6 880.0,158.6 882.7,158.2 885.4,157.9 888.0,157.7 890.7,157.6 890.7,157.6 890.2,156.1 889.7,154.7 889.1,153.2 888.6,151.8" fill="#2aa6e2" stroke="#2aa6e2" stroke-width="1.4" stroke-linejoin="round"/><polygon points="875.0,153.2 872.4,153.6 869.8,154.1 867.2,154.7 864.6,155.3 864.6,155.3 865.0,156.8 865.4,158.3 865.8,159.7 866.1,161.2 866.1,161.2 868.8,160.6 871.5,160.1 874.1,159.5 876.8,159.1 876.8,159.1 876.4,157.6 875.9,156.1 875.5,154.7 875.0,153.2" fill="#e2e2e4" stroke="#e2e2e4" stroke-width="1.4" stroke-linejoin="round"/><polygon points="861.5,156.0 858.9,156.7 856.3,157.5 853.7,158.2 851.1,159.1 851.1,159.1 851.4,160.6 851.6,162.1 851.9,163.6 852.2,165.1 852.2,165.1 854.9,164.3 857.5,163.5 860.2,162.8 862.9,162.1 862.9,162.1 862.5,160.6 862.2,159.0 861.8,157.5 861.5,156.0" fill="#2aa6e2" stroke="#2aa6e2" stroke-width="1.4" stroke-linejoin="round"/><polygon points="847.9,160.1 845.3,161.0 842.7,162.0 840.1,162.9 837.5,164.0 837.5,164.0 837.7,165.5 837.9,167.1 838.1,168.6 838.3,170.1 838.3,170.1 840.9,169.1 843.6,168.1 846.3,167.1 848.9,166.2 848.9,166.2 848.7,164.7 848.4,163.2 848.2,161.6 847.9,160.1" fill="#2aa6e2" stroke="#2aa6e2" stroke-width="1.4" stroke-linejoin="round"/><polygon points="834.3,165.3 831.7,166.4 829.1,167.5 826.5,168.7 824.0,169.9 824.0,169.9 824.1,171.5 824.2,173.0 824.3,174.6 824.4,176.1 824.4,176.1 827.0,174.9 829.7,173.7 832.4,172.6 835.0,171.5 835.0,171.5 834.8,169.9 834.7,168.4 834.5,166.8 834.3,165.3" fill="#e2e2e4" stroke="#e2e2e4" stroke-width="1.4" stroke-linejoin="round"/><polygon points="820.8,171.5 818.1,172.8 815.4,174.2 812.7,175.6 810.0,177.1 810.0,177.1 810.0,178.7 810.0,180.2 810.0,181.8 810.1,183.3 810.1,183.3 812.8,181.9 815.6,180.4 818.3,179.0 821.1,177.7 821.1,177.7 821.0,176.1 820.9,174.6 820.9,173.0 820.8,171.5" fill="#2aa6e2" stroke="#2aa6e2" stroke-width="1.4" stroke-linejoin="round"/><polygon points="891.8,160.4 889.1,160.6 886.4,160.8 883.7,161.1 880.9,161.5 880.9,161.5 881.4,162.9 881.9,164.4 882.3,165.9 882.8,167.3 882.8,167.3 885.6,166.9 888.3,166.6 891.1,166.4 893.9,166.2 893.9,166.2 893.3,164.7 892.8,163.3 892.3,161.9 891.8,160.4" fill="#2aa6e2" stroke="#2aa6e2" stroke-width="1.4" stroke-linejoin="round"/><polygon points="877.7,162.0 875.0,162.4 872.3,163.0 869.5,163.6 866.8,164.2 866.8,164.2 867.2,165.7 867.6,167.2 868.0,168.7 868.3,170.2 868.3,170.2 871.1,169.5 873.9,168.9 876.6,168.4 879.4,167.9 879.4,167.9 879.0,166.4 878.5,164.9 878.1,163.4 877.7,162.0" fill="#2aa6e2" stroke="#2aa6e2" stroke-width="1.4" stroke-linejoin="round"/><polygon points="863.6,165.0 860.9,165.7 858.2,166.5 855.4,167.3 852.7,168.1 852.7,168.1 853.0,169.7 853.3,171.2 853.6,172.7 853.9,174.2 853.9,174.2 856.6,173.4 859.4,172.5 862.2,171.8 864.9,171.0 864.9,171.0 864.6,169.5 864.2,168.0 863.9,166.5 863.6,165.0" fill="#e2e2e4" stroke="#e2e2e4" stroke-width="1.4" stroke-linejoin="round"/><polygon points="849.5,169.2 846.8,170.1 844.1,171.1 841.3,172.1 838.6,173.2 838.6,173.2 838.8,174.7 839.0,176.3 839.2,177.8 839.4,179.3 839.4,179.3 842.2,178.3 844.9,177.3 847.7,176.3 850.5,175.3 850.5,175.3 850.2,173.8 850.0,172.3 849.7,170.7 849.5,169.2" fill="#e2e2e4" stroke="#e2e2e4" stroke-width="1.4" stroke-linejoin="round"/><polygon points="835.4,174.5 832.7,175.6 830.0,176.8 827.2,178.0 824.5,179.2 824.5,179.2 824.7,180.7 824.8,182.3 824.9,183.9 825.0,185.4 825.0,185.4 827.7,184.2 830.5,183.0 833.3,181.8 836.0,180.7 836.0,180.7 835.9,179.1 835.7,177.6 835.5,176.0 835.4,174.5" fill="#e2e2e4" stroke="#e2e2e4" stroke-width="1.4" stroke-linejoin="round"/><polygon points="821.3,180.7 818.5,182.1 815.7,183.5 812.9,184.9 810.1,186.4 810.1,186.4 810.1,187.9 810.1,189.5 810.1,191.0 810.1,192.6 810.1,192.6 813.0,191.1 815.8,189.7 818.7,188.3 821.6,187.0 821.6,187.0 821.5,185.4 821.4,183.9 821.3,182.3 821.3,180.7" fill="#2aa6e2" stroke="#2aa6e2" stroke-width="1.4" stroke-linejoin="round"/><polygon points="894.9,169.0 892.1,169.2 889.3,169.5 886.5,169.8 883.7,170.2 883.7,170.2 884.2,171.7 884.6,173.1 885.1,174.6 885.5,176.1 885.5,176.1 888.4,175.6 891.3,175.3 894.1,175.0 897.0,174.8 897.0,174.8 896.5,173.4 896.0,171.9 895.4,170.5 894.9,169.0" fill="#2aa6e2" stroke="#2aa6e2" stroke-width="1.4" stroke-linejoin="round"/><polygon points="880.3,170.8 877.5,171.3 874.7,171.8 871.9,172.4 869.1,173.1 869.1,173.1 869.4,174.6 869.8,176.1 870.2,177.6 870.5,179.1 870.5,179.1 873.4,178.4 876.3,177.8 879.2,177.2 882.0,176.6 882.0,176.6 881.6,175.2 881.1,173.7 880.7,172.2 880.3,170.8" fill="#2aa6e2" stroke="#2aa6e2" stroke-width="1.4" stroke-linejoin="round"/><polygon points="865.6,174.0 862.8,174.7 860.0,175.5 857.2,176.3 854.4,177.2 854.4,177.2 854.7,178.7 855.0,180.3 855.3,181.8 855.5,183.3 855.5,183.3 858.4,182.4 861.3,181.6 864.2,180.8 867.0,180.0 867.0,180.0 866.7,178.5 866.3,177.0 866.0,175.5 865.6,174.0" fill="#2aa6e2" stroke="#2aa6e2" stroke-width="1.4" stroke-linejoin="round"/><polygon points="851.0,178.3 848.2,179.3 845.4,180.3 842.6,181.3 839.8,182.4 839.8,182.4 840.0,183.9 840.2,185.5 840.4,187.0 840.5,188.5 840.5,188.5 843.4,187.5 846.3,186.4 849.2,185.4 852.0,184.5 852.0,184.5 851.8,182.9 851.5,181.4 851.3,179.9 851.0,178.3" fill="#2aa6e2" stroke="#2aa6e2" stroke-width="1.4" stroke-linejoin="round"/><polygon points="836.4,183.7 833.6,184.8 830.8,186.0 828.0,187.2 825.1,188.5 825.1,188.5 825.2,190.0 825.3,191.6 825.4,193.1 825.5,194.7 825.5,194.7 828.4,193.4 831.3,192.2 834.2,191.0 837.0,189.9 837.0,189.9 836.9,188.4 836.7,186.8 836.5,185.3 836.4,183.7" fill="#2aa6e2" stroke="#2aa6e2" stroke-width="1.4" stroke-linejoin="round"/><polygon points="821.7,190.0 818.8,191.4 815.9,192.7 813.0,194.2 810.1,195.6 810.1,195.6 810.1,197.2 810.1,198.7 810.1,200.3 810.1,201.8 810.1,201.8 813.1,200.4 816.1,199.0 819.1,197.6 822.0,196.2 822.0,196.2 822.0,194.7 821.9,193.1 821.8,191.6 821.7,190.0" fill="#2aa6e2" stroke="#2aa6e2" stroke-width="1.4" stroke-linejoin="round"/></svg>
<span dir="rtl" style="left:690px;top:204px;width:240px;text-align:center;font-family:'DejaVu Sans', 'Liberation Sans', sans-serif;font-weight:bold;font-size:43.5px;line-height:64px;color:#050506;transform:scaleX(0.68);transform-origin:50% 50%">فرادرس</span>
<span dir="rtl" style="left:708px;top:269px;width:200px;text-align:center;font-family:'DejaVu Sans', 'Liberation Sans', sans-serif;font-weight:bold;font-size:15px;line-height:22px;color:#2b8fd2;transform:scaleX(0.71);transform-origin:50% 50%">فراتر از یک کلاس درس</span>
<span style="left:738px;top:287px;width:140px;text-align:center;font-family:'Liberation Serif',serif;font-weight:bold;font-size:12.6px;line-height:16px;letter-spacing:1.4px;color:#2b8fd2">www.faradars.org</span>
<div style="left:0px;top:19px;width:2px;height:345px;background:#141518;"></div>
<div style="left:2px;top:19px;width:135.5px;height:15.4px;background:#25272b;"></div>
<div style="left:2px;top:34.4px;width:135.5px;height:11.8px;background:#2e3136;"></div>
<div style="left:2px;top:46.4px;width:135.5px;height:11.6px;background:#2e3136;"></div>
<div style="left:2px;top:18.4px;width:135.5px;height:0.8px;background:#1f3640;"></div>
<div style="left:133px;top:58px;width:5px;height:298px;background:#26282d;"></div>
<svg style="left:0;top:19px" width="138" height="15" fill="none" stroke="#d6d8dc" stroke-width="1" stroke-linecap="round">
<g stroke="none" fill="#b9bcc1"><rect x="4" y="5" width="6.6" height="1.5"/><rect x="4" y="7.3" width="6.6" height="1.5"/><rect x="4" y="9.6" width="6.6" height="1.5"/></g>
<line x1="19" y1="7.4" x2="19" y2="11.4" stroke-width="1.2"/><circle cx="19" cy="5" r="0.7" fill="#d6d8dc" stroke="none"/>
<line x1="29.4" y1="6" x2="33.6" y2="10.8" stroke-width="1.5"/><circle cx="29" cy="5.6" r="1.3" stroke-width="0.9"/>
<path d="M65.6,11 C68,3 69.5,3 70.4,7.5 C71.3,12 72.6,11 74,4" stroke="#9da0a6" stroke-width="0.9"/>
<path d="M80,11.6 L80,4.6 L86,4.6 L84.4,8.2 L80,8.2" stroke="#9da0a6" stroke-width="0.9"/>
<g stroke="none" fill="#f0f1f3"><rect x="92.6" y="4.4" width="5.6" height="1.6"/><rect x="93" y="4.4" width="1.1" height="6"/><rect x="96.6" y="4.4" width="1.1" height="5"/><circle cx="92.8" cy="10.6" r="1.3"/><circle cx="96.4" cy="9.8" r="1.3"/>
<rect x="104.6" y="4.2" width="4.6" height="1.5" transform="rotate(-14 106 5)"/><rect x="104.4" y="4.6" width="1.1" height="6"/><circle cx="103.8" cy="10.6" r="1.4"/><circle cx="108.6" cy="8.6" r="1"/></g>
<circle cx="119" cy="7.6" r="3" stroke-width="0.9" stroke="#c6c8cc"/><path d="M119,5.6 L119,7.8 L117.6,8.8" stroke-width="0.7" stroke="#c6c8cc"/>
<line x1="128" y1="7.6" x2="134.4" y2="7.6" stroke-width="1.3" stroke="#eceef0"/><line x1="131.2" y1="4.4" x2="131.2" y2="10.8" stroke-width="1.3" stroke="#eceef0"/>
</svg>
<span style="left:6px;top:38px;font-size:5.2px;line-height:5.2px;color:#a6a9ae;">Arranger</span>
<svg style="left:125px;top:37px" width="10" height="9" viewBox="0 0 12 11" fill="#b4b7bc"><rect x="3" y="1.4" width="4" height="0.9"/><rect x="3" y="1.4" width="0.8" height="4.4"/><rect x="6.2" y="1.4" width="0.8" height="3.8"/><circle cx="2.6" cy="6" r="1"/><circle cx="5.8" cy="5.4" r="1"/></svg>
<span style="left:6px;top:50px;font-size:5.2px;line-height:5.2px;color:#a6a9ae;">Chords</span>
<span style="left:82.5px;top:49px;font-size:6.4px;line-height:6.4px;color:#c6c8cc;">D<span style="position:static;font-family:'DejaVu Sans',sans-serif;font-size:6.8px;letter-spacing:-0.4px;-webkit-text-stroke:0.35px currentColor">♭</span>m11</span>
<div style="left:108px;top:48.6px;width:26px;height:7.6px;background:#2f80d6;"></div>
<span style="left:113.5px;top:51px;font-size:4.8px;line-height:4.8px;color:#f2f6fa;font-weight:bold">Follow</span>
<div style="left:2px;top:56px;width:131px;height:17.4px;background:#303338;"></div><div style="left:6.0px;top:56px;width:4.6px;height:17.4px;background:#2cd6a6;"></div><span style="left:13.0px;top:61px;font-size:4.6px;line-height:4.6px;color:#b4b7bc;font-weight:bold">10</span><div style="left:22.0px;top:58px;width:40.4px;height:9.4px;background:#41454c;border-radius:1px"></div><div style="left:31.8px;top:58px;width:0.6px;height:9.4px;background:#303338;"></div><div style="left:41.900000000000006px;top:58px;width:0.6px;height:9.4px;background:#303338;"></div><div style="left:52.0px;top:58px;width:0.6px;height:9.4px;background:#303338;"></div><span style="left:24.9px;top:60px;font-size:5.4px;line-height:5.4px;color:#cfd2d6;">M</span><span style="left:35.4px;top:60px;font-size:5.4px;line-height:5.4px;color:#cfd2d6;">S</span><svg style="left:42.0px;top:58px" width="21" height="10"><circle cx="5.2" cy="4.8" r="1.7" fill="#eef0f2"/><circle cx="15.4" cy="4.8" r="1.7" fill="none" stroke="#d4d6da" stroke-width="0.6"/><path d="M15.4,3.1 a1.7,1.7 0 0 0 0,3.4Z" fill="#eef0f2"/></svg><span style="left:65.4px;top:60px;font-size:5.6px;line-height:5.6px;color:#a9acb1;">Choir Filtered</span><svg style="left:122px;top:58.4px" width="10" height="8" fill="#b9bcc1"><rect x="0.6" y="5" width="8" height="1.6"/><rect x="0.8" y="1" width="0.9" height="4.4"/><rect x="2.6" y="1" width="0.9" height="4.4"/><rect x="4.4" y="1" width="0.9" height="4.4"/><rect x="6.2" y="1" width="0.9" height="4.4"/><rect x="7.8" y="1" width="0.9" height="4.4"/></svg><div style="left:21.4px;top:69.3px;width:83px;height:1.5px;background:#393c42;border-radius:0.7px"></div><div style="left:21.4px;top:69.3px;width:56px;height:1.5px;background:#6a6e76;border-radius:0.7px"></div>
<div style="left:2px;top:56px;width:133px;height:2.2px;background:#2e3136;"></div>
<div style="left:2px;top:74.2px;width:131px;height:17.8px;background:#303338;"></div><div style="left:1.6px;top:74.2px;width:4.6px;height:17.8px;background:#40e890;"></div><span style="left:8.6px;top:79px;font-size:4.6px;line-height:4.6px;color:#b4b7bc;font-weight:bold">11</span><div style="left:17.6px;top:76.2px;width:40.4px;height:9.4px;background:#41454c;border-radius:1px"></div><div style="left:27.400000000000002px;top:76.2px;width:0.6px;height:9.4px;background:#303338;"></div><div style="left:37.5px;top:76.2px;width:0.6px;height:9.4px;background:#303338;"></div><div style="left:47.6px;top:76.2px;width:0.6px;height:9.4px;background:#303338;"></div><span style="left:20.5px;top:79px;font-size:5.4px;line-height:5.4px;color:#cfd2d6;">M</span><span style="left:31.0px;top:79px;font-size:5.4px;line-height:5.4px;color:#cfd2d6;">S</span><svg style="left:37.6px;top:76.2px" width="21" height="10"><circle cx="5.2" cy="4.8" r="1.7" fill="#eef0f2"/><circle cx="15.4" cy="4.8" r="1.7" fill="none" stroke="#d4d6da" stroke-width="0.6"/><path d="M15.4,3.1 a1.7,1.7 0 0 0 0,3.4Z" fill="#eef0f2"/></svg><span style="left:61px;top:79px;font-size:5.6px;line-height:5.6px;color:#a9acb1;">Synth Run</span><svg style="left:122.8px;top:77.8px" width="8" height="6.4" viewBox="0 0 10 8"><path d="M0.6,6.4 L2.6,2 L3.8,6 L5,0.8 L6.4,6 L7.6,2.6 L9,6.4" stroke="#b9bcc1" stroke-width="0.95" fill="none"/></svg><div style="left:17px;top:87.5px;width:83px;height:1.5px;background:#393c42;border-radius:0.7px"></div><div style="left:17px;top:87.5px;width:39px;height:1.5px;background:#6a6e76;border-radius:0.7px"></div>
<div style="left:1.6px;top:88px;width:4.6px;height:4px;background:#2e8c54;"></div>
<div style="left:2px;top:92.6px;width:131px;height:17.8px;background:#303338;"></div><div style="left:1.6px;top:92.6px;width:4.6px;height:17.8px;background:#1f9fc2;"></div><span style="left:8.6px;top:98px;font-size:4.6px;line-height:4.6px;color:#b4b7bc;font-weight:bold">12</span><div style="left:17.6px;top:94.6px;width:40.4px;height:9.4px;background:#41454c;border-radius:1px"></div><div style="left:27.400000000000002px;top:94.6px;width:0.6px;height:9.4px;background:#303338;"></div><div style="left:37.5px;top:94.6px;width:0.6px;height:9.4px;background:#303338;"></div><div style="left:47.6px;top:94.6px;width:0.6px;height:9.4px;background:#303338;"></div><span style="left:20.5px;top:97px;font-size:5.4px;line-height:5.4px;color:#cfd2d6;">M</span><span style="left:31.0px;top:97px;font-size:5.4px;line-height:5.4px;color:#cfd2d6;">S</span><svg style="left:37.6px;top:94.6px" width="21" height="10"><circle cx="5.2" cy="4.8" r="1.7" fill="#eef0f2"/><circle cx="15.4" cy="4.8" r="1.7" fill="none" stroke="#d4d6da" stroke-width="0.6"/><path d="M15.4,3.1 a1.7,1.7 0 0 0 0,3.4Z" fill="#eef0f2"/></svg><span style="left:61px;top:97px;font-size:5.6px;line-height:5.6px;color:#a9acb1;">Piano</span><svg style="left:122.8px;top:96.19999999999999px" width="8" height="6.4" viewBox="0 0 10 8"><path d="M0.6,6.4 L2.6,2 L3.8,6 L5,0.8 L6.4,6 L7.6,2.6 L9,6.4" stroke="#b9bcc1" stroke-width="0.95" fill="none"/></svg><div style="left:17px;top:105.89999999999999px;width:83px;height:1.5px;background:#393c42;border-radius:0.7px"></div><div style="left:17px;top:105.89999999999999px;width:69px;height:1.5px;background:#6a6e76;border-radius:0.7px"></div>
<div style="left:2px;top:111px;width:131px;height:207px;background:#4e545c;"></div><div style="left:1.6px;top:111px;width:4.6px;height:207px;background:#8ff67e;"></div><span style="left:8.6px;top:116px;font-size:4.6px;line-height:4.6px;color:#e6e8ea;font-weight:bold">13</span><div style="left:17.6px;top:113px;width:40.4px;height:9.4px;background:#5e646c;border-radius:1px"></div><div style="left:27.400000000000002px;top:113px;width:0.6px;height:9.4px;background:#4e545c;"></div><div style="left:37.5px;top:113px;width:0.6px;height:9.4px;background:#4e545c;"></div><div style="left:47.6px;top:113px;width:0.6px;height:9.4px;background:#4e545c;"></div><span style="left:20.5px;top:115px;font-size:5.4px;line-height:5.4px;color:#cfd2d6;">M</span><span style="left:31.0px;top:115px;font-size:5.4px;line-height:5.4px;color:#cfd2d6;">S</span><svg style="left:37.6px;top:113px" width="21" height="10"><circle cx="5.2" cy="4.8" r="1.7" fill="#eef0f2"/><circle cx="15.4" cy="4.8" r="1.7" fill="none" stroke="#d4d6da" stroke-width="0.6"/><path d="M15.4,3.1 a1.7,1.7 0 0 0 0,3.4Z" fill="#eef0f2"/></svg><span style="left:61px;top:115px;font-size:5.0px;line-height:5.0px;color:#f2f4f6;font-weight:bold">Electric Guitar</span><svg style="left:122.8px;top:114.6px" width="8" height="6.4" viewBox="0 0 10 8"><path d="M0.6,6.4 L2.6,2 L3.8,6 L5,0.8 L6.4,6 L7.6,2.6 L9,6.4" stroke="#b9bcc1" stroke-width="0.95" fill="none"/></svg><div style="left:17px;top:124.3px;width:83px;height:1.5px;background:#464b52;border-radius:0.7px"></div><div style="left:17px;top:124.3px;width:53px;height:1.5px;background:#8c9098;border-radius:0.7px"></div>
<div style="left:17.5px;top:129.2px;width:65.6px;height:6.2px;background:#636971;border-radius:1px"></div>
<div style="left:17.5px;top:136.6px;width:80.6px;height:6.2px;background:#636971;border-radius:1px"></div>
<div style="left:17.5px;top:144px;width:80.6px;height:6.2px;background:#636971;border-radius:1px"></div>
<span style="left:19px;top:132px;font-size:4.8px;line-height:4.8px;color:#eef0f2;">Input L+R</span>
<span style="left:25.5px;top:139px;font-size:4.8px;line-height:4.8px;color:#eef0f2;">None</span>
<span style="left:25.5px;top:147px;font-size:4.8px;line-height:4.8px;color:#eef0f2;">Electric Guitar 1</span>
<svg style="left:17px;top:129px" width="84" height="22" fill="#c6c9ce"><polygon points="65,2.4 68,2.4 66.500,4.2"/><polygon points="76.600,9.600 79.600,9.600 78.100,11.400"/><polygon points="76.600,17 79.600,17 78.100,18.800"/><rect x="72" y="0.800" width="9" height="4.800" rx="2.400" fill="#e8eaec"/><circle cx="78.400" cy="3.200" r="1.800" fill="#4e545c"/><rect x="2" y="10.000" width="3.600" height="1.400" /><circle cx="3.600" cy="18.200" r="1.300"/></svg>
<div style="left:133px;top:111px;width:5px;height:207px;background:#484d55;"></div>
<div style="left:134px;top:243px;width:3.4px;height:74.6px;background:#4f92d6;"></div>
<div style="left:133.6px;top:88.6px;width:4.4px;height:2px;background:#3f82c2;"></div>
<div style="left:133.6px;top:104.4px;width:4.4px;height:6px;background:#3f82c2;"></div>
<div style="left:2px;top:318.6px;width:131px;height:17.6px;background:#303338;"></div><div style="left:1.6px;top:318.6px;width:4.6px;height:17.6px;background:#1d8c52;"></div><span style="left:8.6px;top:324px;font-size:4.6px;line-height:4.6px;color:#b4b7bc;font-weight:bold">14</span><div style="left:17.6px;top:320.6px;width:40.4px;height:9.4px;background:#41454c;border-radius:1px"></div><div style="left:27.400000000000002px;top:320.6px;width:0.6px;height:9.4px;background:#303338;"></div><div style="left:37.5px;top:320.6px;width:0.6px;height:9.4px;background:#303338;"></div><div style="left:47.6px;top:320.6px;width:0.6px;height:9.4px;background:#303338;"></div><span style="left:20.5px;top:323px;font-size:5.4px;line-height:5.4px;color:#cfd2d6;">M</span><span style="left:31.0px;top:323px;font-size:5.4px;line-height:5.4px;color:#cfd2d6;">S</span><svg style="left:37.6px;top:320.6px" width="21" height="10"><circle cx="5.2" cy="4.8" r="1.7" fill="#eef0f2"/><circle cx="15.4" cy="4.8" r="1.7" fill="none" stroke="#d4d6da" stroke-width="0.6"/><path d="M15.4,3.1 a1.7,1.7 0 0 0 0,3.4Z" fill="#eef0f2"/></svg><span style="left:61px;top:323px;font-size:5.6px;line-height:5.6px;color:#a9acb1;">Bollywood Vox</span><svg style="left:122px;top:321.0px" width="10" height="8" fill="#b9bcc1"><rect x="0.6" y="5" width="8" height="1.6"/><rect x="0.8" y="1" width="0.9" height="4.4"/><rect x="2.6" y="1" width="0.9" height="4.4"/><rect x="4.4" y="1" width="0.9" height="4.4"/><rect x="6.2" y="1" width="0.9" height="4.4"/><rect x="7.8" y="1" width="0.9" height="4.4"/></svg><div style="left:17px;top:331.90000000000003px;width:83px;height:1.5px;background:#393c42;border-radius:0.7px"></div><div style="left:17px;top:331.90000000000003px;width:64px;height:1.5px;background:#6a6e76;border-radius:0.7px"></div>
<div style="left:2px;top:337px;width:131px;height:18.6px;background:#303338;"></div><div style="left:1.6px;top:337px;width:4.6px;height:18.6px;background:#1f88e2;"></div><span style="left:8.6px;top:342px;font-size:4.6px;line-height:4.6px;color:#b4b7bc;font-weight:bold">15</span><div style="left:17.6px;top:339px;width:40.4px;height:9.4px;background:#41454c;border-radius:1px"></div><div style="left:27.400000000000002px;top:339px;width:0.6px;height:9.4px;background:#303338;"></div><div style="left:37.5px;top:339px;width:0.6px;height:9.4px;background:#303338;"></div><div style="left:47.6px;top:339px;width:0.6px;height:9.4px;background:#303338;"></div><span style="left:20.5px;top:341px;font-size:5.4px;line-height:5.4px;color:#cfd2d6;">M</span><span style="left:31.0px;top:341px;font-size:5.4px;line-height:5.4px;color:#cfd2d6;">S</span><svg style="left:37.6px;top:339px" width="21" height="10"><circle cx="5.2" cy="4.8" r="1.7" fill="#eef0f2"/><circle cx="15.4" cy="4.8" r="1.7" fill="none" stroke="#d4d6da" stroke-width="0.6"/><path d="M15.4,3.1 a1.7,1.7 0 0 0 0,3.4Z" fill="#eef0f2"/></svg><span style="left:61px;top:341px;font-size:5.6px;line-height:5.6px;color:#a9acb1;">Glitch Flute</span><svg style="left:122.8px;top:340.6px" width="8" height="6.4" viewBox="0 0 10 8"><path d="M0.6,6.4 L2.6,2 L3.8,6 L5,0.8 L6.4,6 L7.6,2.6 L9,6.4" stroke="#b9bcc1" stroke-width="0.95" fill="none"/></svg><div style="left:17px;top:350.3px;width:83px;height:1.5px;background:#393c42;border-radius:0.7px"></div><div style="left:17px;top:350.3px;width:48px;height:1.5px;background:#6a6e76;border-radius:0.7px"></div>
<div style="left:0px;top:74px;width:138px;height:0.7px;background:#1e1f23;"></div>
<div style="left:0px;top:92.2px;width:138px;height:0.7px;background:#1e1f23;"></div>
<div style="left:0px;top:110.4px;width:138px;height:0.7px;background:#1e1f23;"></div>
<div style="left:0px;top:318px;width:138px;height:0.7px;background:#1e1f23;"></div>
<div style="left:0px;top:336.4px;width:138px;height:0.7px;background:#1e1f23;"></div>
<div style="left:0px;top:356px;width:900px;height:8.4px;background:#1b1c20;"></div>
<div style="left:2px;top:356.4px;width:135.5px;height:7.8px;background:#222428;"></div>
<span style="left:10px;top:359px;font-size:4.6px;line-height:4.6px;color:#b4b7bc;">M</span>
<span style="left:31.5px;top:359px;font-size:4.6px;line-height:4.6px;color:#b4b7bc;">S</span>
<svg style="left:51px;top:357px" width="8" height="7"><rect x="1.200" y="1.200" width="4.600" height="3.600" rx="0.800" fill="none" stroke="#3a8ae0" stroke-width="0.9"/></svg>
<div style="left:66px;top:356.8px;width:63px;height:7px;background:#1c1d21;"></div>
<span style="left:88px;top:359px;font-size:4.4px;line-height:4.4px;color:#b4b7bc;">Small</span>
<svg style="left:120px;top:357px" width="30" height="7" fill="#80848a"><polygon points="2.4,2.6 5,2.6 3.700,4.400"/><rect x="12" y="1.600" width="3.400" height="3.400" fill="none" stroke="#70747a" stroke-width="0.600"/><polygon points="23.600,1.800 23.600,5 21.600,3.400"/></svg>
<div style="left:234px;top:357.4px;width:94px;height:2.4px;background:#4a4d53;border-radius:1.2px"></div>
<svg style="left:845px;top:356px" width="50" height="8" fill="#6a6e75"><polygon points="4,1.800 6.600,3.600 4,5.400"/><polygon points="11.500,5.400 14.500,5.400 13,2.800"/><rect x="16" y="3.400" width="24" height="0.600"/><rect x="17.600" y="1.600" width="1.600" height="4.200" fill="#8a8e94"/><polygon points="40.600,5.600 45.400,5.600 43,1.800"/></svg>
<div style="left:0px;top:364.4px;width:900px;height:1.6px;background:#15161a;"></div>
<div style="left:1px;top:366px;width:899px;height:14.6px;background:#4b5058;"></div>
<div style="left:127px;top:366px;width:14px;height:14.6px;background:#2f80d6;"></div>
<div style="left:261.5px;top:366px;width:36px;height:14.6px;background:#41454c;"></div>
<div style="left:298.5px;top:366px;width:14.2px;height:14.6px;background:#2f80d6;"></div>
<div style="left:313px;top:366px;width:114.4px;height:14.6px;background:#30343a;"></div>
<div style="left:427.6px;top:366px;width:29px;height:14.6px;background:#2f80d6;"></div>
<div style="left:457px;top:366px;width:13.4px;height:14.6px;background:#30343a;"></div>
<svg style="left:0;top:366px" width="900" height="15" fill="none" stroke="#e6e8ec" stroke-width="1.2" stroke-linecap="round">
<line x1="66.6" y1="2.4" x2="66.6" y2="12.4" stroke="#d0d2d6" stroke-width="0.7"/>
<polygon points="77,3.400 77,10.900 79.100,9 80.500,11.800 81.700,11.200 80.300,8.600 82.900,8.400" fill="#eef0f2" stroke="none"/>
<rect x="89" y="4.200" width="6.500" height="6.500" stroke-width="0.800" stroke-dasharray="1.2 0.8"/><rect x="91" y="6.200" width="2.600" height="2.600" fill="#e6e8ec" stroke="none"/>
<line x1="103" y1="10.200" x2="108" y2="4.700" stroke-width="1.600"/>
<rect x="115" y="5.400" width="8" height="4" rx="1.500" transform="rotate(-35 119 7.400)" fill="#e6e8ec" stroke="none"/>
<line x1="131" y1="10.400" x2="136.600" y2="4.400" stroke="#fff" stroke-width="1.500"/>
<polygon points="143.500,6 146,6 149.500,3.300 149.500,11.500 146,9.100 143.500,9.100" fill="#e6e8ec" stroke="none"/><line x1="143" y1="3.500" x2="150.500" y2="11.500" stroke-width="0.800"/>
<line x1="161.500" y1="3" x2="161.500" y2="12" stroke-width="0.900"/><polygon points="162.500,4.500 167.500,7.500 162.500,10.500" fill="#e6e8ec" stroke="none"/><line x1="157.500" y1="7.500" x2="160.500" y2="7.500" stroke-width="1"/>
<polygon points="172,6.300 174.500,6.300 178.500,2.900 178.500,11.700 174.500,8.700 172,8.700" fill="#e6e8ec" stroke="none"/><line x1="180.500" y1="5.500" x2="180.500" y2="9.500" stroke-width="0.700"/>
<line x1="188.5" y1="2" x2="188.5" y2="13" stroke="#5a5f67" stroke-width="0.6"/>
<line x1="201.600" y1="3.400" x2="201.600" y2="11.400" stroke-width="0.900"/><polygon points="203,4.400 208,7.400 203,10.400" fill="#e6e8ec" stroke="none"/><line x1="204" y1="4" x2="204" y2="11" stroke-width="0.700"/>
<rect x="213.600" y="5.200" width="2" height="4.400" fill="#e6e8ec" stroke="none"/><polygon points="216.600,6.200 219,7.400 216.600,8.600" fill="#e6e8ec" stroke="none"/><polygon points="220,5 223.600,7.400 220,9.800" fill="#e6e8ec" stroke="none"/>
<circle cx="231.600" cy="7.400" r="2.700" stroke-width="1"/><line x1="233.200" y1="9.400" x2="234.800" y2="11" stroke-width="1"/>
<path d="M242.600,8.400 q3.800,-3.600 7.600,0" stroke-width="1.300"/><polygon points="244.900,9.800 248.100,9.800 246.500,12" fill="#e6e8ec" stroke="none"/><rect x="245.100" y="2.600" width="2.800" height="1.800" stroke-width="0.600"/>
<polygon points="287,6.400 291.400,6.400 289.200,9" fill="#e6e8ec" stroke="none"/>
<g stroke="none" fill="#fff"><rect x="303.6" y="3.600" width="4.600" height="1.400" transform="rotate(-14 305 4.400)"/><rect x="303.4" y="4" width="1" height="6"/><circle cx="302.800" cy="10" r="1.400"/><circle cx="307.600" cy="8" r="1"/></g>
<line x1="433" y1="5" x2="433" y2="10" stroke-width="0.700"/><line x1="433" y1="7.500" x2="438" y2="7.500" stroke-width="0.600"/><polygon points="434.500,6.500 436.500,7.500 434.500,8.500" fill="#e6e8ec" stroke="none"/>
<polygon points="444.400,6.300 448.800,6.300 448.800,4.500 452.400,7.400 448.800,10.300 448.800,8.500 444.400,8.500" fill="#fff" stroke="none"/>
<line x1="460" y1="7.400" x2="467" y2="7.400" stroke-width="0.800" stroke="#c6c8cc"/><rect x="462.200" y="3.800" width="2.400" height="1.600" fill="#c6c8cc" stroke="none"/><rect x="462.200" y="9.600" width="2.400" height="1.600" fill="#c6c8cc" stroke="none"/>
<line x1="881" y1="9.200" x2="884.600" y2="5.600" stroke-width="1"/><polygon points="882.600,5 885.200,5 885.200,7.600" fill="#e6e8ec" stroke="none"/>
<line x1="889.600" y1="5" x2="893.600" y2="9.400" stroke-width="1.300"/><line x1="893.600" y1="5" x2="889.600" y2="9.400" stroke-width="1.300"/>
<g fill="#9a9da3" stroke="none"><polygon points="346.5,11 349.500,11 348,12.800"/><polygon points="382.500,11 385.500,11 384,12.800"/><polygon points="420.5,11 423.500,11 422,12.800"/></g>
</svg>
<span style="left:266.5px;top:371px;font-size:5.2px;line-height:5.2px;color:#d4d6da;font-weight:bold">Action</span>
<span style="left:317px;top:369px;font-size:4.8px;line-height:4.8px;color:#b4b7bc;">Quantize</span>
<span style="left:317px;top:376px;font-size:4.8px;line-height:4.8px;color:#eceef0;">1/16</span>
<span style="left:353.5px;top:369px;font-size:4.8px;line-height:4.8px;color:#b4b7bc;">Timebase</span>
<span style="left:353.5px;top:376px;font-size:4.8px;line-height:4.8px;color:#eceef0;">Bars</span>
<span style="left:390.5px;top:369px;font-size:4.8px;line-height:4.8px;color:#b4b7bc;">Snap</span>
<span style="left:390.5px;top:376px;font-size:4.8px;line-height:4.8px;color:#eceef0;">Quantize</span>
<div style="left:0px;top:380.6px;width:900px;height:1.6px;background:#17181c;"></div>
<div style="left:1px;top:382.2px;width:84.4px;height:12.6px;background:#4b5058;"></div>
<div style="left:1.6px;top:382.2px;width:5.6px;height:12.6px;background:#94f28a;"></div>
<span style="left:26.6px;top:386px;font-size:5.0px;line-height:5.0px;color:#eef0f2;font-weight:bold">Electric Guitar</span>
<svg style="left:76px;top:385px" width="8" height="7"><polygon points="2.6,2.4 5.400,2.400 4,4.200" fill="#c6c8cc"/></svg>
<div style="left:0px;top:394.8px;width:85.4px;height:143.4px;background:#1f2125;"></div>
<div style="left:85.4px;top:382.2px;width:23px;height:156px;background:#141519;"></div>
<svg style="left:3px;top:397px" width="10" height="8"><path d="M1,5.400 Q3.400,0.600 6,5.400 M2.400,5.400 L2.400,3.600 M3.600,5.400 L3.600,3 M4.800,5.400 L4.800,3.600" stroke="#80848a" stroke-width="0.700" fill="none"/></svg>
<div style="left:42px;top:396.4px;width:38px;height:8.4px;background:#26282d;"></div>
<span style="left:45.6px;top:398px;font-size:5.2px;line-height:5.2px;color:#9a9da3;">M</span>
<span style="left:60.8px;top:398px;font-size:5.2px;line-height:5.2px;color:#9a9da3;">S</span>
<svg style="left:72px;top:397px" width="12" height="8"><rect x="1.800" y="1.600" width="7.600" height="4" rx="2" fill="#b4b7bc"/><circle cx="7.200" cy="3.600" r="1.400" fill="#26282d"/></svg>
<span style="left:4px;top:414px;font-size:4.8px;line-height:4.8px;color:#a6a9ae;font-weight:bold">No chord selected</span>
<div style="left:98px;top:382.2px;width:802px;height:2.8px;background:#3a94e6;"></div>
<div style="left:108px;top:385px;width:792px;height:10.4px;background:#26292e;"></div>
<span style="left:109.5px;top:387px;font-size:4.6px;line-height:4.6px;color:#d4d6da;">33</span>
<span style="left:149.375px;top:387px;font-size:4.6px;line-height:4.6px;color:#d4d6da;">34</span>
<span style="left:189.25px;top:387px;font-size:4.6px;line-height:4.6px;color:#d4d6da;">35</span>
<span style="left:229.125px;top:387px;font-size:4.6px;line-height:4.6px;color:#d4d6da;">36</span>
<span style="left:269.0px;top:387px;font-size:4.6px;line-height:4.6px;color:#d4d6da;">37</span>
<span style="left:308.875px;top:387px;font-size:4.6px;line-height:4.6px;color:#d4d6da;">38</span>
<span style="left:348.75px;top:387px;font-size:4.6px;line-height:4.6px;color:#d4d6da;">39</span>
<span style="left:388.625px;top:387px;font-size:4.6px;line-height:4.6px;color:#d4d6da;">40</span>
<span style="left:428.5px;top:387px;font-size:4.6px;line-height:4.6px;color:#d4d6da;">41</span>
<span style="left:468.375px;top:387px;font-size:4.6px;line-height:4.6px;color:#d4d6da;">42</span>
<span style="left:508.25px;top:387px;font-size:4.6px;line-height:4.6px;color:#d4d6da;">43</span>
<span style="left:548.125px;top:387px;font-size:4.6px;line-height:4.6px;color:#d4d6da;">44</span>
<span style="left:588.0px;top:387px;font-size:4.6px;line-height:4.6px;color:#d4d6da;">45</span>
<span style="left:627.875px;top:387px;font-size:4.6px;line-height:4.6px;color:#d4d6da;">46</span>
<span style="left:667.75px;top:387px;font-size:4.6px;line-height:4.6px;color:#d4d6da;">47</span>
<span style="left:707.625px;top:387px;font-size:4.6px;line-height:4.6px;color:#d4d6da;">48</span>
<span style="left:747.5px;top:387px;font-size:4.6px;line-height:4.6px;color:#d4d6da;">49</span>
<span style="left:787.375px;top:387px;font-size:4.6px;line-height:4.6px;color:#d4d6da;">50</span>
<span style="left:827.25px;top:387px;font-size:4.6px;line-height:4.6px;color:#d4d6da;">51</span>
<span style="left:867.125px;top:387px;font-size:4.6px;line-height:4.6px;color:#d4d6da;">52</span>
<svg style="left:0;top:0" width="900" height="400"><rect x="108.1" y="390.4" width="0.7" height="4.8" fill="#c6c8cc"/><rect x="118.1" y="393" width="0.6" height="2.2" fill="#90949a"/><rect x="128.0" y="393" width="0.6" height="2.2" fill="#90949a"/><rect x="138.0" y="393" width="0.6" height="2.2" fill="#90949a"/><rect x="148.0" y="390.4" width="0.7" height="4.8" fill="#c6c8cc"/><rect x="157.9" y="393" width="0.6" height="2.2" fill="#90949a"/><rect x="167.9" y="393" width="0.6" height="2.2" fill="#90949a"/><rect x="177.9" y="393" width="0.6" height="2.2" fill="#90949a"/><rect x="187.8" y="390.4" width="0.7" height="4.8" fill="#c6c8cc"/><rect x="197.8" y="393" width="0.6" height="2.2" fill="#90949a"/><rect x="207.8" y="393" width="0.6" height="2.2" fill="#90949a"/><rect x="217.8" y="393" width="0.6" height="2.2" fill="#90949a"/><rect x="227.7" y="390.4" width="0.7" height="4.8" fill="#c6c8cc"/><rect x="237.7" y="393" width="0.6" height="2.2" fill="#90949a"/><rect x="247.7" y="393" width="0.6" height="2.2" fill="#90949a"/><rect x="257.6" y="393" width="0.6" height="2.2" fill="#90949a"/><rect x="267.6" y="390.4" width="0.7" height="4.8" fill="#c6c8cc"/><rect x="277.6" y="393" width="0.6" height="2.2" fill="#90949a"/><rect x="287.5" y="393" width="0.6" height="2.2" fill="#90949a"/><rect x="297.5" y="393" width="0.6" height="2.2" fill="#90949a"/><rect x="307.5" y="390.4" width="0.7" height="4.8" fill="#c6c8cc"/><rect x="317.4" y="393" width="0.6" height="2.2" fill="#90949a"/><rect x="327.4" y="393" width="0.6" height="2.2" fill="#90949a"/><rect x="337.4" y="393" width="0.6" height="2.2" fill="#90949a"/><rect x="347.3" y="390.4" width="0.7" height="4.8" fill="#c6c8cc"/><rect x="357.3" y="393" width="0.6" height="2.2" fill="#90949a"/><rect x="367.3" y="393" width="0.6" height="2.2" fill="#90949a"/><rect x="377.3" y="393" width="0.6" height="2.2" fill="#90949a"/><rect x="387.2" y="390.4" width="0.7" height="4.8" fill="#c6c8cc"/><rect x="397.2" y="393" width="0.6" height="2.2" fill="#90949a"/><rect x="407.2" y="393" width="0.6" height="2.2" fill="#90949a"/><rect x="417.1" y="393" width="0.6" height="2.2" fill="#90949a"/><rect x="427.1" y="390.4" width="0.7" height="4.8" fill="#c6c8cc"/><rect x="437.1" y="393" width="0.6" height="2.2" fill="#90949a"/><rect x="447.0" y="393" width="0.6" height="2.2" fill="#90949a"/><rect x="457.0" y="393" width="0.6" height="2.2" fill="#90949a"/><rect x="467.0" y="390.4" width="0.7" height="4.8" fill="#c6c8cc"/><rect x="476.9" y="393" width="0.6" height="2.2" fill="#90949a"/><rect x="486.9" y="393" width="0.6" height="2.2" fill="#90949a"/><rect x="496.9" y="393" width="0.6" height="2.2" fill="#90949a"/><rect x="506.8" y="390.4" width="0.7" height="4.8" fill="#c6c8cc"/><rect x="516.8" y="393" width="0.6" height="2.2" fill="#90949a"/><rect x="526.8" y="393" width="0.6" height="2.2" fill="#90949a"/><rect x="536.8" y="393" width="0.6" height="2.2" fill="#90949a"/><rect x="546.7" y="390.4" width="0.7" height="4.8" fill="#c6c8cc"/><rect x="556.7" y="393" width="0.6" height="2.2" fill="#90949a"/><rect x="566.7" y="393" width="0.6" height="2.2" fill="#90949a"/><rect x="576.6" y="393" width="0.6" height="2.2" fill="#90949a"/><rect x="586.6" y="390.4" width="0.7" height="4.8" fill="#c6c8cc"/><rect x="596.6" y="393" width="0.6" height="2.2" fill="#90949a"/><rect x="606.5" y="393" width="0.6" height="2.2" fill="#90949a"/><rect x="616.5" y="393" width="0.6" height="2.2" fill="#90949a"/><rect x="626.5" y="390.4" width="0.7" height="4.8" fill="#c6c8cc"/><rect x="636.4" y="393" width="0.6" height="2.2" fill="#90949a"/><rect x="646.4" y="393" width="0.6" height="2.2" fill="#90949a"/><rect x="656.4" y="393" width="0.6" height="2.2" fill="#90949a"/><rect x="666.4" y="390.4" width="0.7" height="4.8" fill="#c6c8cc"/><rect x="676.3" y="393" width="0.6" height="2.2" fill="#90949a"/><rect x="686.3" y="393" width="0.6" height="2.2" fill="#90949a"/><rect x="696.3" y="393" width="0.6" height="2.2" fill="#90949a"/><rect x="706.2" y="390.4" width="0.7" height="4.8" fill="#c6c8cc"/><rect x="716.2" y="393" width="0.6" height="2.2" fill="#90949a"/><rect x="726.2" y="393" width="0.6" height="2.2" fill="#90949a"/><rect x="736.1" y="393" width="0.6" height="2.2" fill="#90949a"/><rect x="746.1" y="390.4" width="0.7" height="4.8" fill="#c6c8cc"/><rect x="756.1" y="393" width="0.6" height="2.2" fill="#90949a"/><rect x="766.0" y="393" width="0.6" height="2.2" fill="#90949a"/><rect x="776.0" y="393" width="0.6" height="2.2" fill="#90949a"/><rect x="786.0" y="390.4" width="0.7" height="4.8" fill="#c6c8cc"/><rect x="795.9" y="393" width="0.6" height="2.2" fill="#90949a"/><rect x="805.9" y="393" width="0.6" height="2.2" fill="#90949a"/><rect x="815.9" y="393" width="0.6" height="2.2" fill="#90949a"/><rect x="825.9" y="390.4" width="0.7" height="4.8" fill="#c6c8cc"/><rect x="835.8" y="393" width="0.6" height="2.2" fill="#90949a"/><rect x="845.8" y="393" width="0.6" height="2.2" fill="#90949a"/><rect x="855.8" y="393" width="0.6" height="2.2" fill="#90949a"/><rect x="865.7" y="390.4" width="0.7" height="4.8" fill="#c6c8cc"/><rect x="875.7" y="393" width="0.6" height="2.2" fill="#90949a"/><rect x="885.7" y="393" width="0.6" height="2.2" fill="#90949a"/><rect x="895.6" y="393" width="0.6" height="2.2" fill="#90949a"/></svg>
<span style="left:80px;top:395px;width:15.6px;text-align:right;font-size:3.9px;line-height:4.4px;color:#b4b7bc;font-weight:bold">0dB</span>
<div style="left:96.4px;top:397.3px;width:2.2px;height:0.5px;background:#80848a;"></div>
<span style="left:80px;top:402px;width:15.6px;text-align:right;font-size:3.9px;line-height:4.4px;color:#b4b7bc;font-weight:bold">-3.0</span>
<div style="left:96.4px;top:404.8px;width:2.2px;height:0.5px;background:#80848a;"></div>
<span style="left:80px;top:408px;width:15.6px;text-align:right;font-size:3.9px;line-height:4.4px;color:#b4b7bc;font-weight:bold">-6.0</span>
<div style="left:96.4px;top:410.8px;width:2.2px;height:0.5px;background:#80848a;"></div>
<span style="left:80px;top:413px;width:15.6px;text-align:right;font-size:3.9px;line-height:4.4px;color:#b4b7bc;font-weight:bold">-9.0</span>
<div style="left:96.4px;top:415.0px;width:2.2px;height:0.5px;background:#80848a;"></div>
<span style="left:80px;top:416px;width:15.6px;text-align:right;font-size:3.9px;line-height:4.4px;color:#b4b7bc;font-weight:bold">-12.0</span>
<div style="left:96.4px;top:418.40000000000003px;width:2.2px;height:0.5px;background:#80848a;"></div>
<span style="left:80px;top:422px;width:15.6px;text-align:right;font-size:3.9px;line-height:4.4px;color:#b4b7bc;font-weight:bold">-24.0</span>
<div style="left:96.4px;top:424.2px;width:2.2px;height:0.5px;background:#80848a;"></div>
<span style="left:80px;top:426px;width:15.6px;text-align:right;font-size:3.9px;line-height:4.4px;color:#b4b7bc;font-weight:bold">-24.0</span>
<div style="left:96.4px;top:428.40000000000003px;width:2.2px;height:0.5px;background:#80848a;"></div>
<span style="left:80px;top:432px;width:15.6px;text-align:right;font-size:3.9px;line-height:4.4px;color:#b4b7bc;font-weight:bold">-12.0</span>
<div style="left:96.4px;top:434.2px;width:2.2px;height:0.5px;background:#80848a;"></div>
<span style="left:80px;top:435px;width:15.6px;text-align:right;font-size:3.9px;line-height:4.4px;color:#b4b7bc;font-weight:bold">-9.0</span>
<div style="left:96.4px;top:437.2px;width:2.2px;height:0.5px;background:#80848a;"></div>
<span style="left:80px;top:439px;width:15.6px;text-align:right;font-size:3.9px;line-height:4.4px;color:#b4b7bc;font-weight:bold">-6.0</span>
<div style="left:96.4px;top:441.8px;width:2.2px;height:0.5px;background:#80848a;"></div>
<span style="left:80px;top:445px;width:15.6px;text-align:right;font-size:3.9px;line-height:4.4px;color:#b4b7bc;font-weight:bold">-3.0</span>
<div style="left:96.4px;top:447.8px;width:2.2px;height:0.5px;background:#80848a;"></div>
<span style="left:80px;top:453px;width:15.6px;text-align:right;font-size:3.9px;line-height:4.4px;color:#b4b7bc;font-weight:bold">0dB</span>
<div style="left:96.4px;top:455.8px;width:2.2px;height:0.5px;background:#80848a;"></div>
<span style="left:80px;top:456px;width:15.6px;text-align:right;font-size:3.9px;line-height:4.4px;color:#b4b7bc;font-weight:bold">-inf</span>
<div style="left:96.4px;top:458.0px;width:2.2px;height:0.5px;background:#80848a;"></div>
<span style="left:80px;top:463px;width:15.6px;text-align:right;font-size:3.9px;line-height:4.4px;color:#b4b7bc;font-weight:bold">-3.0</span>
<div style="left:96.4px;top:465.8px;width:2.2px;height:0.5px;background:#80848a;"></div>
<span style="left:80px;top:469px;width:15.6px;text-align:right;font-size:3.9px;line-height:4.4px;color:#b4b7bc;font-weight:bold">-6.0</span>
<div style="left:96.4px;top:471.8px;width:2.2px;height:0.5px;background:#80848a;"></div>
<span style="left:80px;top:474px;width:15.6px;text-align:right;font-size:3.9px;line-height:4.4px;color:#b4b7bc;font-weight:bold">-9.0</span>
<div style="left:96.4px;top:476.0px;width:2.2px;height:0.5px;background:#80848a;"></div>
<span style="left:80px;top:477px;width:15.6px;text-align:right;font-size:3.9px;line-height:4.4px;color:#b4b7bc;font-weight:bold">-12.0</span>
<div style="left:96.4px;top:479.40000000000003px;width:2.2px;height:0.5px;background:#80848a;"></div>
<span style="left:80px;top:483px;width:15.6px;text-align:right;font-size:3.9px;line-height:4.4px;color:#b4b7bc;font-weight:bold">-24.0</span>
<div style="left:96.4px;top:485.2px;width:2.2px;height:0.5px;background:#80848a;"></div>
<span style="left:80px;top:487px;width:15.6px;text-align:right;font-size:3.9px;line-height:4.4px;color:#b4b7bc;font-weight:bold">-24.0</span>
<div style="left:96.4px;top:489.40000000000003px;width:2.2px;height:0.5px;background:#80848a;"></div>
<span style="left:80px;top:493px;width:15.6px;text-align:right;font-size:3.9px;line-height:4.4px;color:#b4b7bc;font-weight:bold">-12.0</span>
<div style="left:96.4px;top:495.2px;width:2.2px;height:0.5px;background:#80848a;"></div>
<span style="left:80px;top:496px;width:15.6px;text-align:right;font-size:3.9px;line-height:4.4px;color:#b4b7bc;font-weight:bold">-9.0</span>
<div style="left:96.4px;top:498.2px;width:2.2px;height:0.5px;background:#80848a;"></div>
<span style="left:80px;top:500px;width:15.6px;text-align:right;font-size:3.9px;line-height:4.4px;color:#b4b7bc;font-weight:bold">-6.0</span>
<div style="left:96.4px;top:502.8px;width:2.2px;height:0.5px;background:#80848a;"></div>
<span style="left:80px;top:506px;width:15.6px;text-align:right;font-size:3.9px;line-height:4.4px;color:#b4b7bc;font-weight:bold">-3.0</span>
<div style="left:96.4px;top:508.8px;width:2.2px;height:0.5px;background:#80848a;"></div>
<span style="left:80px;top:515px;width:15.6px;text-align:right;font-size:3.9px;line-height:4.4px;color:#b4b7bc;font-weight:bold">0dB</span>
<div style="left:96.4px;top:517.1999999999999px;width:2.2px;height:0.5px;background:#80848a;"></div>
<div style="left:108.4px;top:395.4px;width:790.2px;height:136.0px;background:#94f28a;"></div>
<svg style="left:108.5px;top:395.4px" width="37" height="6"><polygon points="0,0 36,0 33,5.4 0,5.4" fill="#5a9a5a"/></svg><span style="left:110.1px;top:397px;font-size:4.4px;line-height:4.4px;color:#e2f4dc;">Electric Guitar</span>
<div style="left:585.6px;top:396px;width:2.6px;height:2.6px;background:#f0fcee;"></div>
<svg style="left:0;top:0" width="900" height="540"><rect x="108.4" y="457.1" width="790.2" height="0.7" fill="#c8fac4" opacity="0.8"/><rect x="108.4" y="456.9" width="153" height="1.2" fill="#aef03c"/><rect x="261.4" y="457" width="108" height="0.9" fill="#b4f45a" opacity="0.7"/><polygon points="110.0,457.4 110.0,443.9 152.3,443.9 162.2,443.6 171.0,447.8 183.0,457.4 207.3,464.0 221.2,463.4 257.5,456.2 266.3,467.0 275.9,453.8 285.0,453.8 306.2,459.2 343.7,460.7 367.6,457.4 367.6,457.4" fill="rgba(30,70,40,0.55)"/><circle cx="110.0" cy="443.9" r="1.35" fill="none" stroke="#e8f8dc" stroke-width="0.75"/><circle cx="152.3" cy="443.9" r="1.35" fill="none" stroke="#e8f8dc" stroke-width="0.75"/><circle cx="162.2" cy="443.6" r="1.35" fill="none" stroke="#e8f8dc" stroke-width="0.75"/><circle cx="171.0" cy="447.8" r="1.35" fill="none" stroke="#e8f8dc" stroke-width="0.75"/><circle cx="183.0" cy="457.4" r="1.35" fill="none" stroke="#e8f8dc" stroke-width="0.75"/><circle cx="207.3" cy="464.0" r="1.35" fill="none" stroke="#e8f8dc" stroke-width="0.75"/><circle cx="221.2" cy="463.4" r="1.35" fill="none" stroke="#e8f8dc" stroke-width="0.75"/><circle cx="257.5" cy="456.2" r="1.35" fill="none" stroke="#e8f8dc" stroke-width="0.75"/><circle cx="266.3" cy="467.0" r="1.35" fill="none" stroke="#e8f8dc" stroke-width="0.75"/><circle cx="275.9" cy="453.8" r="1.35" fill="none" stroke="#e8f8dc" stroke-width="0.75"/><circle cx="285.0" cy="453.8" r="1.35" fill="none" stroke="#e8f8dc" stroke-width="0.75"/><circle cx="306.2" cy="459.2" r="1.35" fill="none" stroke="#e8f8dc" stroke-width="0.75"/><circle cx="343.7" cy="460.7" r="1.35" fill="none" stroke="#e8f8dc" stroke-width="0.75"/><circle cx="367.6" cy="457.4" r="1.35" fill="none" stroke="#e8f8dc" stroke-width="0.75"/><polygon points="432.6,457.4 432.6,457.4 437.8,455.0 475.3,453.5 524.3,446.0 543.0,446.0 588.5,455.0 588.5,467.0 593.7,467.0 593.7,457.4 600.9,457.4 645.9,459.5 683.8,459.3 706.5,457.4 746.4,451.4 770.3,451.4 770.3,457.4 770.3,457.4" fill="rgba(30,70,40,0.55)"/><circle cx="432.6" cy="457.4" r="1.35" fill="none" stroke="#e8f8dc" stroke-width="0.75"/><circle cx="437.8" cy="455.0" r="1.35" fill="none" stroke="#e8f8dc" stroke-width="0.75"/><circle cx="475.3" cy="453.5" r="1.35" fill="none" stroke="#e8f8dc" stroke-width="0.75"/><circle cx="524.3" cy="446.0" r="1.35" fill="none" stroke="#e8f8dc" stroke-width="0.75"/><circle cx="543.0" cy="446.0" r="1.35" fill="none" stroke="#e8f8dc" stroke-width="0.75"/><circle cx="588.5" cy="455.0" r="1.35" fill="none" stroke="#e8f8dc" stroke-width="0.75"/><circle cx="588.5" cy="467.0" r="1.35" fill="none" stroke="#e8f8dc" stroke-width="0.75"/><circle cx="593.7" cy="467.0" r="1.35" fill="none" stroke="#e8f8dc" stroke-width="0.75"/><circle cx="593.7" cy="457.4" r="1.35" fill="none" stroke="#e8f8dc" stroke-width="0.75"/><circle cx="600.9" cy="457.4" r="1.35" fill="none" stroke="#e8f8dc" stroke-width="0.75"/><circle cx="645.9" cy="459.5" r="1.35" fill="none" stroke="#e8f8dc" stroke-width="0.75"/><circle cx="683.8" cy="459.3" r="1.35" fill="none" stroke="#e8f8dc" stroke-width="0.75"/><circle cx="706.5" cy="457.4" r="1.35" fill="none" stroke="#e8f8dc" stroke-width="0.75"/><circle cx="746.4" cy="451.4" r="1.35" fill="none" stroke="#e8f8dc" stroke-width="0.75"/><circle cx="770.3" cy="451.4" r="1.35" fill="none" stroke="#e8f8dc" stroke-width="0.75"/><circle cx="770.3" cy="457.4" r="1.35" fill="none" stroke="#e8f8dc" stroke-width="0.75"/><path d="M788,453.2 L898,453.2" stroke="#a4f044" stroke-width="1.3" fill="none"/><path d="M236,456.5 L262,453.500 M368,456.600 L400,454 430,452.400 M668,456 L710,453.800 M730,450 L760,447 775,447.600 790,451.600" stroke="#b2f45a" stroke-width="0.900" fill="none" opacity="0.600"/><path d="M108.4,420.1 L109.1,420.4 L109.8,420.6 L110.5,421.3 L111.2,421.4 L111.9,421.2 L112.6,421.6 L113.3,421.9 L114.0,422.1 L114.7,422.3 L115.4,422.4 L116.1,422.5 L116.8,422.8 L117.5,422.7 L118.2,422.9 L118.9,423.0 L119.6,423.2 L120.3,423.2 L121.0,423.2 L121.7,423.5 L122.4,423.3 L123.1,423.5 L123.8,423.6 L124.5,423.7 L125.2,423.7 L125.9,423.7 L126.6,423.7 L127.3,423.8 L128.0,423.8 L128.7,423.9 L129.4,424.0 L130.1,424.0 L130.8,424.2 L131.5,424.1 L132.2,424.3 L132.9,424.3 L133.6,424.4 L134.3,424.3 L135.0,424.4 L135.7,424.4 L136.4,424.4 L137.1,424.6 L137.8,424.6 L138.5,424.6 L139.2,424.7 L139.9,424.7 L140.6,424.8 L141.3,424.8 L142.0,424.8 L142.7,424.9 L143.4,424.9 L144.1,424.9 L144.8,424.9 L145.5,425.0 L146.2,425.1 L146.9,425.0 L147.6,425.1 L148.3,425.2 L149.0,425.3 L149.7,425.2 L150.4,425.2 L151.1,425.3 L151.8,425.3 L152.5,425.4 L153.2,425.4 L153.9,425.4 L154.6,425.4 L155.3,425.5 L156.0,425.5 L156.7,425.5 L157.4,425.5 L158.1,425.6 L158.8,425.6 L159.5,425.6 L160.2,425.7 L160.9,425.7 L161.6,425.7 L162.3,425.7 L163.0,425.7 L163.7,425.7 L164.4,425.7 L165.1,425.7 L165.8,425.7 L166.5,425.7 L167.2,425.7 L167.9,425.7 L168.6,425.7 L169.3,425.7 L170.0,425.7 L170.7,425.7 L171.4,425.7 L172.1,425.7 L172.8,425.7 L173.5,425.7 L174.2,425.7 L174.9,425.7 L175.6,425.7 L176.3,425.7 L177.0,425.7 L177.7,425.7 L178.4,425.7 L179.1,425.7 L179.8,425.7 L180.5,425.7 L181.2,425.7 L181.9,425.7 L182.6,425.7 L183.3,425.7 L184.0,425.7 L184.7,425.7 L185.4,425.7 L186.1,425.7 L186.8,425.7 L187.5,425.7 L188.2,421.6 L188.9,421.5 L189.6,421.9 L190.3,422.3 L191.0,422.8 L191.7,422.9 L192.4,423.1 L193.1,423.1 L193.8,423.6 L194.5,423.7 L195.2,423.6 L195.9,424.0 L196.6,424.0 L197.3,424.1 L198.0,424.2 L198.7,424.4 L199.4,424.5 L200.1,424.5 L200.8,424.7 L201.5,424.7 L202.2,424.7 L202.9,424.8 L203.6,424.9 L204.3,425.0 L205.0,425.0 L205.7,425.1 L206.4,425.2 L207.1,425.3 L207.8,425.3 L208.5,425.3 L209.2,425.3 L209.9,425.4 L210.6,425.5 L211.3,425.5 L212.0,425.6 L212.7,425.6 L213.4,425.7 L214.1,425.7 L214.8,425.7 L215.5,425.7 L216.2,425.7 L216.9,425.7 L217.6,425.7 L218.3,425.7 L219.0,425.7 L219.7,425.7 L220.4,425.7 L221.1,425.7 L221.8,425.7 L222.5,425.7 L223.2,425.7 L223.9,425.7 L224.6,425.7 L225.3,425.7 L226.0,425.7 L226.7,422.6 L227.4,423.0 L228.1,422.8 L228.8,423.1 L229.5,423.4 L230.2,423.5 L230.9,423.8 L231.6,423.8 L232.3,424.1 L233.0,424.0 L233.7,424.3 L234.4,424.4 L235.1,424.5 L235.8,424.6 L236.5,424.6 L237.2,424.7 L237.9,424.8 L238.6,424.8 L239.3,425.0 L240.0,425.0 L240.7,425.1 L241.4,425.1 L242.1,425.2 L242.8,425.2 L243.5,425.3 L244.2,425.3 L244.9,425.4 L245.6,425.4 L246.3,425.4 L247.0,425.5 L247.7,425.5 L248.4,425.6 L249.1,425.6 L249.8,425.7 L250.5,425.7 L251.2,425.7 L251.9,425.7 L252.6,425.7 L253.3,425.7 L254.0,425.7 L254.7,425.7 L255.4,425.7 L256.1,425.7 L256.8,425.7 L257.5,425.7 L258.2,425.7 L258.9,425.7 L259.6,425.7 L260.3,425.7 L261.0,425.7 L261.7,425.7 L262.4,425.7 L263.1,425.7 L263.8,425.7 L264.5,425.7 L265.2,425.7 L265.9,425.7 L266.6,425.7 L267.3,422.1 L268.0,420.6 L268.7,420.1 L269.4,420.1 L270.1,419.2 L270.8,418.6 L271.5,418.2 L272.2,417.6 L272.9,417.3 L273.6,417.5 L274.3,417.6 L275.0,416.5 L275.7,416.3 L276.4,416.7 L277.1,415.6 L277.8,416.1 L278.5,416.0 L279.2,416.8 L279.9,416.8 L280.6,417.3 L281.3,417.8 L282.0,418.0 L282.7,417.5 L283.4,418.5 L284.1,419.1 L284.8,419.0 L285.5,419.5 L286.2,420.0 L286.9,420.2 L287.6,420.7 L288.3,420.6 L289.0,420.9 L289.7,421.1 L290.4,421.7 L291.1,421.8 L291.8,421.9 L292.5,421.8 L293.2,422.1 L293.9,422.5 L294.6,422.2 L295.3,422.4 L296.0,422.6 L296.7,422.8 L297.4,422.5 L298.1,422.7 L298.8,422.6 L299.5,422.7 L300.2,423.1 L300.9,423.1 L301.6,423.1 L302.3,423.3 L303.0,423.2 L303.7,423.2 L304.4,423.2 L305.1,423.3 L305.8,423.3 L306.5,423.4 L307.2,423.4 L307.9,423.7 L308.6,423.8 L309.3,423.8 L310.0,423.7 L310.7,423.8 L311.4,423.9 L312.1,423.8 L312.8,424.0 L313.5,423.9 L314.2,424.1 L314.9,424.0 L315.6,424.3 L316.3,424.1 L317.0,424.2 L317.7,424.3 L318.4,424.3 L319.1,424.5 L319.8,424.5 L320.5,424.6 L321.2,424.5 L321.9,424.5 L322.6,424.6 L323.3,424.7 L324.0,424.7 L324.7,424.7 L325.4,424.7 L326.1,424.8 L326.8,424.8 L327.5,424.8 L328.2,424.8 L328.9,424.9 L329.6,424.9 L330.3,425.0 L331.0,425.0 L331.7,425.0 L332.4,425.1 L333.1,425.1 L333.8,425.2 L334.5,425.1 L335.2,425.1 L335.9,425.2 L336.6,425.2 L337.3,425.3 L338.0,425.3 L338.7,425.4 L339.4,425.4 L340.1,425.4 L340.8,425.4 L341.5,425.5 L342.2,425.5 L342.9,425.5 L343.6,425.6 L344.3,425.6 L345.0,425.6 L345.7,425.7 L346.4,422.3 L347.1,422.7 L347.8,422.9 L348.5,423.2 L349.2,423.3 L349.9,423.6 L350.6,423.7 L351.3,423.7 L352.0,423.9 L352.7,424.2 L353.4,424.3 L354.1,424.2 L354.8,424.4 L355.5,424.6 L356.2,424.7 L356.9,424.8 L357.6,424.8 L358.3,424.9 L359.0,425.0 L359.7,425.0 L360.4,425.1 L361.1,425.1 L361.8,425.2 L362.5,425.2 L363.2,425.4 L363.9,425.4 L364.6,425.4 L365.3,425.5 L366.0,425.5 L366.7,425.5 L367.4,425.6 L368.1,425.6 L368.8,425.6 L369.5,425.7 L370.2,425.7 L370.9,425.7 L371.6,425.7 L372.3,425.7 L373.0,425.7 L373.7,425.7 L374.4,425.7 L375.1,425.7 L375.8,425.7 L376.5,425.7 L377.2,425.7 L377.9,425.7 L378.6,425.7 L379.3,425.7 L380.0,425.7 L380.7,425.7 L381.4,425.7 L382.1,425.7 L382.8,425.7 L383.5,425.7 L384.2,425.7 L384.9,425.7 L385.6,425.7 L386.3,425.7 L387.0,425.7 L387.7,414.1 L388.4,417.0 L389.1,418.1 L389.8,420.0 L390.5,420.4 L391.2,420.9 L391.9,421.9 L392.6,422.4 L393.3,422.6 L394.0,423.0 L394.7,423.3 L395.4,423.3 L396.1,423.7 L396.8,423.7 L397.5,424.1 L398.2,424.1 L398.9,424.3 L399.6,424.3 L400.3,424.3 L401.0,424.4 L401.7,424.7 L402.4,424.7 L403.1,424.8 L403.8,424.9 L404.5,424.9 L405.2,425.0 L405.9,425.1 L406.6,425.1 L407.3,425.1 L408.0,420.8 L408.7,421.0 L409.4,421.6 L410.1,422.0 L410.8,422.5 L411.5,422.6 L412.2,422.8 L412.9,423.2 L413.6,423.4 L414.3,423.8 L415.0,424.1 L415.7,424.2 L416.4,424.4 L417.1,424.6 L417.8,424.7 L418.5,424.8 L419.2,425.1 L419.9,425.2 L420.6,425.3 L421.3,425.4 L422.0,425.5 L422.7,425.6 L423.4,425.7 L424.1,425.7 L424.8,425.7 L425.5,425.7 L426.2,425.7 L426.9,425.7 L427.6,422.0 L428.3,422.3 L429.0,422.2 L429.7,422.7 L430.4,422.9 L431.1,423.1 L431.8,423.3 L432.5,423.4 L433.2,423.4 L433.9,423.4 L434.6,423.5 L435.3,423.8 L436.0,423.9 L436.7,423.9 L437.4,423.9 L438.1,424.1 L438.8,424.2 L439.5,424.2 L440.2,424.1 L440.9,424.3 L441.6,424.2 L442.3,424.4 L443.0,424.3 L443.7,424.3 L444.4,424.5 L445.1,424.5 L445.8,424.6 L446.5,424.7 L447.2,424.7 L447.9,424.7 L448.6,424.6 L449.3,424.7 L450.0,424.8 L450.7,424.8 L451.4,424.9 L452.1,424.9 L452.8,424.9 L453.5,424.9 L454.2,425.0 L454.9,425.0 L455.6,425.0 L456.3,425.0 L457.0,425.0 L457.7,425.2 L458.4,425.2 L459.1,425.1 L459.8,425.2 L460.5,425.3 L461.2,425.2 L461.9,425.3 L462.6,425.3 L463.3,425.3 L464.0,425.4 L464.7,425.4 L465.4,425.4 L466.1,425.4 L466.8,425.4 L467.5,425.4 L468.2,425.5 L468.9,425.5 L469.6,425.5 L470.3,425.6 L471.0,425.6 L471.7,425.6 L472.4,425.6 L473.1,425.6 L473.8,425.7 L474.5,425.7 L475.2,425.7 L475.9,425.7 L476.6,425.7 L477.3,425.7 L478.0,425.7 L478.7,425.7 L479.4,425.7 L480.1,425.7 L480.8,425.7 L481.5,425.7 L482.2,425.7 L482.9,425.7 L483.6,425.7 L484.3,425.7 L485.0,425.7 L485.7,425.7 L486.4,425.7 L487.1,425.7 L487.8,425.7 L488.5,425.7 L489.2,425.7 L489.9,425.7 L490.6,425.7 L491.3,425.7 L492.0,425.7 L492.7,425.7 L493.4,425.7 L494.1,425.7 L494.8,425.7 L495.5,425.7 L496.2,425.7 L496.9,425.7 L497.6,425.7 L498.3,425.7 L499.0,425.7 L499.7,425.7 L500.4,425.7 L501.1,425.7 L501.8,425.7 L502.5,425.7 L503.2,425.7 L503.9,425.7 L504.6,425.7 L505.3,425.7 L506.0,425.7 L506.7,425.7 L507.4,419.0 L508.1,419.9 L508.8,420.5 L509.5,421.0 L510.2,421.0 L510.9,421.3 L511.6,421.5 L512.3,422.2 L513.0,422.3 L513.7,422.6 L514.4,422.8 L515.1,422.7 L515.8,422.9 L516.5,423.3 L517.2,423.5 L517.9,423.5 L518.6,423.5 L519.3,423.8 L520.0,424.0 L520.7,424.1 L521.4,424.2 L522.1,424.3 L522.8,424.3 L523.5,424.4 L524.2,424.5 L524.9,424.7 L525.6,424.7 L526.3,424.8 L527.0,424.9 L527.7,424.9 L528.4,425.0 L529.1,425.1 L529.8,425.1 L530.5,425.2 L531.2,425.3 L531.9,425.3 L532.6,425.4 L533.3,425.4 L534.0,425.5 L534.7,425.5 L535.4,425.6 L536.1,425.7 L536.8,425.7 L537.5,425.7 L538.2,425.7 L538.9,425.7 L539.6,425.7 L540.3,425.7 L541.0,425.7 L541.7,425.7 L542.4,425.7 L543.1,425.7 L543.8,425.7 L544.5,425.7 L545.2,425.7 L545.9,425.7 L546.6,425.7 L547.3,418.6 L548.0,419.3 L548.7,420.3 L549.4,420.5 L550.1,420.9 L550.8,421.0 L551.5,421.1 L552.2,421.7 L552.9,422.0 L553.6,421.9 L554.3,422.1 L555.0,422.6 L555.7,422.5 L556.4,422.9 L557.1,423.2 L557.8,423.1 L558.5,423.3 L559.2,423.7 L559.9,423.6 L560.6,423.8 L561.3,424.0 L562.0,424.1 L562.7,424.2 L563.4,424.3 L564.1,424.3 L564.8,424.4 L565.5,424.5 L566.2,424.6 L566.9,424.8 L567.6,424.9 L568.3,425.0 L569.0,425.0 L569.7,425.0 L570.4,425.2 L571.1,425.2 L571.8,425.2 L572.5,425.4 L573.2,425.4 L573.9,425.4 L574.6,425.5 L575.3,425.6 L576.0,425.6 L576.7,425.7 L577.4,425.7 L578.1,425.7 L578.8,425.7 L579.5,425.7 L580.2,425.7 L580.9,425.7 L581.6,425.7 L582.3,425.7 L583.0,425.7 L583.7,425.7 L584.4,425.7 L585.1,425.7 L585.8,425.7 L586.5,425.7 L587.2,423.2 L587.9,418.2 L588.6,417.6 L589.3,417.5 L590.0,418.0 L590.7,417.6 L591.4,417.5 L592.1,417.5 L592.8,417.9 L593.5,418.4 L594.2,419.4 L594.9,419.2 L595.6,419.6 L596.3,419.0 L597.0,418.4 L597.7,417.6 L598.4,418.1 L599.1,418.3 L599.8,418.0 L600.5,417.7 L601.2,418.8 L601.9,419.5 L602.6,418.8 L603.3,419.7 L604.0,419.6 L604.7,419.8 L605.4,420.1 L606.1,420.3 L606.8,420.5 L607.5,420.6 L608.2,420.3 L608.9,420.5 L609.6,420.8 L610.3,420.9 L611.0,420.9 L611.7,421.6 L612.4,421.1 L613.1,421.4 L613.8,421.7 L614.5,421.6 L615.2,421.9 L615.9,422.0 L616.6,422.1 L617.3,422.0 L618.0,421.9 L618.7,422.4 L619.4,422.6 L620.1,422.4 L620.8,422.7 L621.5,422.8 L622.2,422.7 L622.9,422.6 L623.6,423.0 L624.3,423.1 L625.0,422.9 L625.7,423.0 L626.4,423.3 L627.1,423.4 L627.8,423.2 L628.5,423.5 L629.2,423.5 L629.9,423.5 L630.6,423.7 L631.3,423.6 L632.0,423.6 L632.7,423.7 L633.4,423.8 L634.1,424.0 L634.8,423.9 L635.5,424.0 L636.2,424.1 L636.9,424.0 L637.6,424.2 L638.3,424.1 L639.0,424.3 L639.7,424.1 L640.4,424.4 L641.1,424.4 L641.8,424.2 L642.5,424.5 L643.2,424.5 L643.9,424.4 L644.6,424.4 L645.3,424.6 L646.0,424.5 L646.7,424.6 L647.4,424.7 L648.1,424.6 L648.8,424.6 L649.5,424.8 L650.2,424.8 L650.9,424.7 L651.6,424.8 L652.3,424.9 L653.0,424.8 L653.7,425.0 L654.4,425.0 L655.1,425.0 L655.8,425.1 L656.5,425.1 L657.2,425.1 L657.9,425.2 L658.6,425.2 L659.3,425.2 L660.0,425.3 L660.7,425.3 L661.4,425.3 L662.1,425.3 L662.8,425.4 L663.5,425.5 L664.2,425.6 L664.9,425.7 L665.6,425.7 L666.3,425.7 L667.0,421.5 L667.7,421.8 L668.4,422.0 L669.1,422.3 L669.8,422.6 L670.5,422.9 L671.2,423.1 L671.9,423.3 L672.6,423.4 L673.3,423.5 L674.0,423.5 L674.7,423.6 L675.4,423.9 L676.1,423.9 L676.8,424.1 L677.5,424.1 L678.2,424.2 L678.9,424.5 L679.6,424.6 L680.3,424.5 L681.0,424.6 L681.7,424.8 L682.4,424.9 L683.1,424.8 L683.8,424.9 L684.5,425.0 L685.2,425.0 L685.9,425.2 L686.6,425.1 L687.3,425.2 L688.0,425.3 L688.7,425.3 L689.4,425.4 L690.1,425.4 L690.8,425.5 L691.5,425.6 L692.2,425.6 L692.9,425.6 L693.6,425.7 L694.3,425.7 L695.0,425.7 L695.7,425.7 L696.4,425.7 L697.1,425.7 L697.8,425.7 L698.5,425.7 L699.2,425.7 L699.9,425.7 L700.6,425.7 L701.3,425.7 L702.0,425.7 L702.7,425.7 L703.4,425.7 L704.1,425.7 L704.8,425.7 L705.5,425.7 L706.2,425.7 L706.9,414.7 L707.6,417.3 L708.3,418.5 L709.0,419.8 L709.7,420.8 L710.4,421.1 L711.1,422.1 L711.8,422.3 L712.5,422.5 L713.2,423.0 L713.9,423.2 L714.6,423.3 L715.3,423.7 L716.0,423.8 L716.7,423.9 L717.4,424.2 L718.1,424.3 L718.8,424.2 L719.5,424.5 L720.2,424.5 L720.9,424.5 L721.6,424.6 L722.3,424.8 L723.0,424.8 L723.7,424.9 L724.4,425.0 L725.1,425.1 L725.8,425.0 L726.5,419.1 L727.2,419.5 L727.9,420.6 L728.6,421.2 L729.3,421.7 L730.0,421.9 L730.7,422.1 L731.4,422.4 L732.1,423.0 L732.8,423.2 L733.5,423.4 L734.2,423.6 L734.9,424.0 L735.6,424.1 L736.3,424.4 L737.0,424.6 L737.7,424.7 L738.4,424.9 L739.1,425.1 L739.8,425.2 L740.5,425.3 L741.2,425.4 L741.9,425.6 L742.6,425.7 L743.3,425.7 L744.0,425.7 L744.7,425.7 L745.4,425.7 L746.1,425.7 L746.8,423.0 L747.5,423.5 L748.2,423.6 L748.9,423.8 L749.6,423.8 L750.3,424.0 L751.0,424.3 L751.7,424.3 L752.4,424.5 L753.1,424.6 L753.8,424.7 L754.5,424.7 L755.2,424.8 L755.9,424.9 L756.6,425.0 L757.3,425.0 L758.0,425.1 L758.7,425.2 L759.4,425.3 L760.1,425.3 L760.8,425.3 L761.5,425.4 L762.2,425.5 L762.9,425.5 L763.6,425.6 L764.3,425.6 L765.0,425.7 L765.7,425.7 L766.4,425.7 L767.1,425.7 L767.8,425.7 L768.5,425.7 L769.2,425.7 L769.9,425.7 L770.6,425.7 L771.3,425.7 L772.0,425.7 L772.7,425.7 L773.4,425.7 L774.1,425.7 L774.8,425.7 L775.5,425.7 L776.2,425.7 L776.9,425.7 L777.6,424.4 L778.3,424.5 L779.0,424.7 L779.7,424.9 L780.4,425.0 L781.1,425.1 L781.8,425.1 L782.5,425.2 L783.2,425.3 L783.9,425.4 L784.6,425.4 L785.3,425.5 L786.0,425.6 L786.7,425.6 L787.4,425.6 L788.1,425.7 L788.8,425.7 L789.5,425.7 L790.2,425.7 L790.9,425.7 L791.6,425.7 L792.3,425.7 L793.0,425.7 L793.7,425.7 L794.4,425.7 L795.1,425.7 L795.8,425.7 L796.5,425.7 L797.2,425.7 L797.9,425.7 L798.6,425.7 L799.3,425.7 L800.0,425.7 L800.7,425.7 L801.4,425.7 L802.1,425.7 L802.8,425.7 L803.5,425.7 L804.2,425.7 L804.9,425.7 L805.6,425.7 L806.3,425.7 L807.0,425.7 L807.7,425.7 L808.4,425.7 L809.1,425.7 L809.8,425.7 L810.5,425.7 L811.2,425.7 L811.9,425.7 L812.6,425.7 L813.3,425.7 L814.0,425.7 L814.7,425.7 L815.4,425.7 L816.1,425.7 L816.8,425.7 L817.5,425.7 L818.2,425.7 L818.9,425.7 L819.6,425.7 L820.3,425.7 L821.0,425.7 L821.7,425.7 L822.4,425.7 L823.1,425.7 L823.8,425.7 L824.5,425.7 L825.2,425.7 L825.9,425.7 L826.6,425.7 L827.3,425.7 L828.0,425.7 L828.7,425.7 L829.4,425.7 L830.1,425.7 L830.8,425.7 L831.5,425.7 L832.2,425.7 L832.9,425.7 L833.6,425.7 L834.3,425.7 L835.0,425.7 L835.7,425.7 L836.4,425.7 L837.1,425.7 L837.8,425.7 L838.5,425.7 L839.2,425.7 L839.9,425.7 L840.6,425.7 L841.3,425.7 L842.0,425.7 L842.7,425.7 L843.4,425.7 L844.1,425.7 L844.8,425.7 L845.5,425.7 L846.2,425.7 L846.9,425.7 L847.6,425.7 L848.3,425.7 L849.0,425.7 L849.7,425.7 L850.4,425.7 L851.1,425.7 L851.8,425.7 L852.5,425.7 L853.2,425.7 L853.9,425.7 L854.6,425.7 L855.3,425.7 L856.0,425.7 L856.7,425.7 L857.4,425.7 L858.1,425.7 L858.8,425.7 L859.5,425.7 L860.2,425.7 L860.9,425.7 L861.6,425.7 L862.3,425.7 L863.0,425.7 L863.7,425.7 L864.4,425.7 L865.1,425.7 L865.8,425.7 L866.5,425.7 L867.2,425.7 L867.9,425.7 L868.6,425.7 L869.3,425.7 L870.0,425.7 L870.7,425.7 L871.4,425.7 L872.1,425.7 L872.8,425.7 L873.5,425.7 L874.2,425.7 L874.9,425.7 L875.6,425.7 L876.3,425.7 L877.0,425.7 L877.7,425.7 L878.4,425.7 L879.1,425.7 L879.8,425.7 L880.5,425.7 L881.2,425.7 L881.9,425.7 L882.6,425.7 L883.3,425.7 L884.0,425.7 L884.7,425.7 L885.4,425.7 L886.1,425.7 L886.8,425.7 L887.5,425.7 L888.2,425.7 L888.9,425.7 L889.6,425.7 L890.3,425.7 L891.0,425.7 L891.7,425.7 L892.4,425.7 L893.1,425.7 L893.8,425.7 L894.5,425.7 L895.2,425.7 L895.9,425.7 L896.6,425.7 L897.3,425.7 L897.3,426.3 L896.6,426.3 L895.9,426.3 L895.2,426.3 L894.5,426.3 L893.8,426.3 L893.1,426.3 L892.4,426.3 L891.7,426.3 L891.0,426.3 L890.3,426.3 L889.6,426.3 L888.9,426.3 L888.2,426.3 L887.5,426.3 L886.8,426.3 L886.1,426.3 L885.4,426.3 L884.7,426.3 L884.0,426.3 L883.3,426.3 L882.6,426.3 L881.9,426.3 L881.2,426.3 L880.5,426.3 L879.8,426.3 L879.1,426.3 L878.4,426.3 L877.7,426.3 L877.0,426.3 L876.3,426.3 L875.6,426.3 L874.9,426.3 L874.2,426.3 L873.5,426.3 L872.8,426.3 L872.1,426.3 L871.4,426.3 L870.7,426.3 L870.0,426.3 L869.3,426.3 L868.6,426.3 L867.9,426.3 L867.2,426.3 L866.5,426.3 L865.8,426.3 L865.1,426.3 L864.4,426.3 L863.7,426.3 L863.0,426.3 L862.3,426.3 L861.6,426.3 L860.9,426.3 L860.2,426.3 L859.5,426.3 L858.8,426.3 L858.1,426.3 L857.4,426.3 L856.7,426.3 L856.0,426.3 L855.3,426.3 L854.6,426.3 L853.9,426.3 L853.2,426.3 L852.5,426.3 L851.8,426.3 L851.1,426.3 L850.4,426.3 L849.7,426.3 L849.0,426.3 L848.3,426.3 L847.6,426.3 L846.9,426.3 L846.2,426.3 L845.5,426.3 L844.8,426.3 L844.1,426.3 L843.4,426.3 L842.7,426.3 L842.0,426.3 L841.3,426.3 L840.6,426.3 L839.9,426.3 L839.2,426.3 L838.5,426.3 L837.8,426.3 L837.1,426.3 L836.4,426.3 L835.7,426.3 L835.0,426.3 L834.3,426.3 L833.6,426.3 L832.9,426.3 L832.2,426.3 L831.5,426.3 L830.8,426.3 L830.1,426.3 L829.4,426.3 L828.7,426.3 L828.0,426.3 L827.3,426.3 L826.6,426.3 L825.9,426.3 L825.2,426.3 L824.5,426.3 L823.8,426.3 L823.1,426.3 L822.4,426.3 L821.7,426.3 L821.0,426.3 L820.3,426.3 L819.6,426.3 L818.9,426.3 L818.2,426.3 L817.5,426.3 L816.8,426.3 L816.1,426.3 L815.4,426.3 L814.7,426.3 L814.0,426.3 L813.3,426.3 L812.6,426.3 L811.9,426.3 L811.2,426.3 L810.5,426.3 L809.8,426.3 L809.1,426.3 L808.4,426.3 L807.7,426.3 L807.0,426.3 L806.3,426.3 L805.6,426.3 L804.9,426.3 L804.2,426.3 L803.5,426.3 L802.8,426.3 L802.1,426.3 L801.4,426.3 L800.7,426.3 L800.0,426.3 L799.3,426.3 L798.6,426.3 L797.9,426.3 L797.2,426.3 L796.5,426.3 L795.8,426.3 L795.1,426.3 L794.4,426.3 L793.7,426.3 L793.0,426.3 L792.3,426.3 L791.6,426.3 L790.9,426.3 L790.2,426.3 L789.5,426.3 L788.8,426.3 L788.1,426.3 L787.4,426.4 L786.7,426.4 L786.0,426.5 L785.3,426.5 L784.6,426.5 L783.9,426.6 L783.2,426.6 L782.5,426.7 L781.8,426.8 L781.1,426.9 L780.4,427.0 L779.7,427.1 L779.0,427.3 L778.3,427.3 L777.6,427.4 L776.9,426.3 L776.2,426.3 L775.5,426.3 L774.8,426.3 L774.1,426.3 L773.4,426.3 L772.7,426.3 L772.0,426.3 L771.3,426.3 L770.6,426.3 L769.9,426.3 L769.2,426.3 L768.5,426.3 L767.8,426.3 L767.1,426.3 L766.4,426.3 L765.7,426.3 L765.0,426.3 L764.3,426.4 L763.6,426.4 L762.9,426.5 L762.2,426.5 L761.5,426.6 L760.8,426.6 L760.1,426.6 L759.4,426.7 L758.7,426.7 L758.0,426.8 L757.3,426.8 L756.6,427.0 L755.9,427.1 L755.2,427.0 L754.5,427.2 L753.8,427.3 L753.1,427.3 L752.4,427.5 L751.7,427.6 L751.0,427.8 L750.3,427.8 L749.6,428.1 L748.9,428.1 L748.2,428.4 L747.5,428.5 L746.8,428.8 L746.1,426.3 L745.4,426.3 L744.7,426.3 L744.0,426.3 L743.3,426.3 L742.6,426.3 L741.9,426.4 L741.2,426.5 L740.5,426.6 L739.8,426.8 L739.1,426.9 L738.4,427.0 L737.7,427.1 L737.0,427.3 L736.3,427.5 L735.6,427.8 L734.9,428.0 L734.2,428.2 L733.5,428.5 L732.8,428.8 L732.1,428.9 L731.4,429.1 L730.7,429.7 L730.0,430.2 L729.3,430.6 L728.6,431.1 L727.9,431.1 L727.2,431.7 L726.5,432.6 L725.8,427.0 L725.1,427.0 L724.4,427.0 L723.7,427.0 L723.0,427.2 L722.3,427.2 L721.6,427.2 L720.9,427.3 L720.2,427.4 L719.5,427.6 L718.8,427.7 L718.1,427.6 L717.4,427.7 L716.7,428.0 L716.0,428.1 L715.3,428.2 L714.6,428.5 L713.9,428.7 L713.2,429.0 L712.5,429.2 L711.8,429.4 L711.1,430.0 L710.4,430.7 L709.7,431.3 L709.0,432.1 L708.3,432.9 L707.6,433.3 L706.9,435.4 L706.2,426.3 L705.5,426.3 L704.8,426.3 L704.1,426.3 L703.4,426.3 L702.7,426.3 L702.0,426.3 L701.3,426.3 L700.6,426.3 L699.9,426.3 L699.2,426.3 L698.5,426.3 L697.8,426.3 L697.1,426.3 L696.4,426.3 L695.7,426.3 L695.0,426.3 L694.3,426.3 L693.6,426.3 L692.9,426.4 L692.2,426.4 L691.5,426.5 L690.8,426.5 L690.1,426.6 L689.4,426.6 L688.7,426.6 L688.0,426.7 L687.3,426.7 L686.6,426.8 L685.9,426.8 L685.2,426.8 L684.5,427.0 L683.8,427.1 L683.1,427.0 L682.4,427.2 L681.7,427.3 L681.0,427.2 L680.3,427.3 L679.6,427.4 L678.9,427.6 L678.2,427.6 L677.5,427.8 L676.8,427.9 L676.1,427.9 L675.4,427.9 L674.7,428.0 L674.0,428.4 L673.3,428.6 L672.6,428.4 L671.9,428.9 L671.2,429.1 L670.5,429.3 L669.8,429.4 L669.1,429.6 L668.4,429.8 L667.7,429.9 L667.0,430.4 L666.3,426.3 L665.6,426.3 L664.9,426.3 L664.2,426.4 L663.5,426.5 L662.8,426.6 L662.1,426.6 L661.4,426.7 L660.7,426.7 L660.0,426.7 L659.3,426.8 L658.6,426.8 L657.9,426.8 L657.2,426.9 L656.5,426.9 L655.8,427.0 L655.1,427.0 L654.4,427.1 L653.7,427.1 L653.0,427.0 L652.3,427.0 L651.6,427.1 L650.9,427.2 L650.2,427.3 L649.5,427.2 L648.8,427.2 L648.1,427.4 L647.4,427.4 L646.7,427.4 L646.0,427.4 L645.3,427.4 L644.6,427.4 L643.9,427.4 L643.2,427.5 L642.5,427.7 L641.8,427.6 L641.1,427.6 L640.4,427.8 L639.7,427.6 L639.0,427.7 L638.3,427.8 L637.6,427.7 L636.9,427.8 L636.2,428.0 L635.5,428.0 L634.8,427.8 L634.1,428.1 L633.4,428.2 L632.7,428.2 L632.0,428.1 L631.3,428.3 L630.6,428.3 L629.9,428.4 L629.2,428.4 L628.5,428.6 L627.8,428.7 L627.1,428.7 L626.4,428.6 L625.7,428.7 L625.0,428.8 L624.3,429.1 L623.6,429.0 L622.9,429.1 L622.2,429.1 L621.5,429.1 L620.8,429.2 L620.1,429.5 L619.4,429.4 L618.7,429.5 L618.0,429.7 L617.3,430.0 L616.6,429.8 L615.9,430.0 L615.2,430.2 L614.5,429.9 L613.8,430.2 L613.1,430.4 L612.4,430.4 L611.7,430.7 L611.0,430.3 L610.3,430.8 L609.6,430.7 L608.9,431.2 L608.2,431.4 L607.5,431.2 L606.8,432.1 L606.1,432.3 L605.4,432.2 L604.7,432.1 L604.0,432.3 L603.3,432.7 L602.6,433.0 L601.9,433.0 L601.2,432.3 L600.5,432.4 L599.8,432.4 L599.1,432.7 L598.4,433.2 L597.7,432.2 L597.0,432.0 L596.3,432.8 L595.6,432.9 L594.9,432.4 L594.2,432.2 L593.5,432.2 L592.8,432.7 L592.1,432.8 L591.4,432.7 L590.7,432.8 L590.0,432.6 L589.3,432.8 L588.6,432.9 L587.9,432.6 L587.2,428.7 L586.5,426.3 L585.8,426.3 L585.1,426.3 L584.4,426.3 L583.7,426.3 L583.0,426.3 L582.3,426.3 L581.6,426.3 L580.9,426.3 L580.2,426.3 L579.5,426.3 L578.8,426.3 L578.1,426.3 L577.4,426.3 L576.7,426.3 L576.0,426.4 L575.3,426.4 L574.6,426.5 L573.9,426.5 L573.2,426.6 L572.5,426.7 L571.8,426.7 L571.1,426.8 L570.4,426.8 L569.7,426.9 L569.0,427.0 L568.3,427.1 L567.6,427.2 L566.9,427.1 L566.2,427.3 L565.5,427.3 L564.8,427.5 L564.1,427.6 L563.4,427.8 L562.7,427.8 L562.0,427.9 L561.3,428.1 L560.6,428.3 L559.9,428.2 L559.2,428.4 L558.5,428.7 L557.8,428.8 L557.1,428.7 L556.4,429.0 L555.7,429.0 L555.0,429.2 L554.3,429.5 L553.6,429.5 L552.9,429.9 L552.2,430.0 L551.5,430.5 L550.8,431.1 L550.1,430.9 L549.4,431.5 L548.7,431.9 L548.0,432.0 L547.3,432.3 L546.6,426.3 L545.9,426.3 L545.2,426.3 L544.5,426.3 L543.8,426.3 L543.1,426.3 L542.4,426.3 L541.7,426.3 L541.0,426.3 L540.3,426.3 L539.6,426.3 L538.9,426.3 L538.2,426.3 L537.5,426.3 L536.8,426.3 L536.1,426.3 L535.4,426.4 L534.7,426.4 L534.0,426.5 L533.3,426.5 L532.6,426.6 L531.9,426.6 L531.2,426.7 L530.5,426.8 L529.8,426.8 L529.1,426.9 L528.4,427.0 L527.7,427.1 L527.0,427.0 L526.3,427.2 L525.6,427.3 L524.9,427.4 L524.2,427.5 L523.5,427.5 L522.8,427.6 L522.1,427.7 L521.4,427.7 L520.7,428.0 L520.0,428.0 L519.3,428.1 L518.6,428.2 L517.9,428.6 L517.2,428.6 L516.5,428.6 L515.8,428.8 L515.1,428.9 L514.4,429.4 L513.7,429.6 L513.0,429.5 L512.3,429.6 L511.6,430.3 L510.9,430.7 L510.2,430.6 L509.5,431.1 L508.8,431.8 L508.1,431.6 L507.4,432.5 L506.7,426.3 L506.0,426.3 L505.3,426.3 L504.6,426.3 L503.9,426.3 L503.2,426.3 L502.5,426.3 L501.8,426.3 L501.1,426.3 L500.4,426.3 L499.7,426.3 L499.0,426.3 L498.3,426.3 L497.6,426.3 L496.9,426.3 L496.2,426.3 L495.5,426.3 L494.8,426.3 L494.1,426.3 L493.4,426.3 L492.7,426.3 L492.0,426.3 L491.3,426.3 L490.6,426.3 L489.9,426.3 L489.2,426.3 L488.5,426.3 L487.8,426.3 L487.1,426.3 L486.4,426.3 L485.7,426.3 L485.0,426.3 L484.3,426.3 L483.6,426.3 L482.9,426.3 L482.2,426.3 L481.5,426.3 L480.8,426.3 L480.1,426.3 L479.4,426.3 L478.7,426.3 L478.0,426.3 L477.3,426.3 L476.6,426.3 L475.9,426.3 L475.2,426.3 L474.5,426.3 L473.8,426.3 L473.1,426.3 L472.4,426.4 L471.7,426.4 L471.0,426.4 L470.3,426.4 L469.6,426.5 L468.9,426.4 L468.2,426.5 L467.5,426.5 L466.8,426.6 L466.1,426.6 L465.4,426.6 L464.7,426.6 L464.0,426.6 L463.3,426.6 L462.6,426.6 L461.9,426.7 L461.2,426.8 L460.5,426.8 L459.8,426.7 L459.1,426.8 L458.4,426.8 L457.7,426.8 L457.0,426.9 L456.3,426.9 L455.6,427.0 L454.9,426.9 L454.2,427.0 L453.5,427.0 L452.8,427.1 L452.1,427.1 L451.4,427.0 L450.7,427.2 L450.0,427.3 L449.3,427.2 L448.6,427.3 L447.9,427.2 L447.2,427.4 L446.5,427.3 L445.8,427.3 L445.1,427.5 L444.4,427.4 L443.7,427.5 L443.0,427.5 L442.3,427.7 L441.6,427.6 L440.9,427.6 L440.2,427.8 L439.5,427.9 L438.8,428.0 L438.1,428.1 L437.4,427.9 L436.7,428.0 L436.0,428.1 L435.3,428.4 L434.6,428.1 L433.9,428.5 L433.2,428.6 L432.5,428.5 L431.8,428.7 L431.1,429.1 L430.4,428.9 L429.7,429.2 L429.0,429.7 L428.3,429.6 L427.6,430.1 L426.9,426.3 L426.2,426.3 L425.5,426.3 L424.8,426.3 L424.1,426.3 L423.4,426.3 L422.7,426.4 L422.0,426.5 L421.3,426.5 L420.6,426.7 L419.9,426.8 L419.2,426.9 L418.5,427.0 L417.8,427.2 L417.1,427.4 L416.4,427.5 L415.7,427.9 L415.0,427.8 L414.3,428.2 L413.6,428.4 L412.9,428.8 L412.2,428.9 L411.5,429.4 L410.8,429.3 L410.1,429.8 L409.4,430.5 L408.7,430.9 L408.0,430.9 L407.3,426.9 L406.6,426.9 L405.9,426.9 L405.2,427.0 L404.5,427.1 L403.8,427.1 L403.1,427.2 L402.4,427.2 L401.7,427.3 L401.0,427.3 L400.3,427.6 L399.6,427.6 L398.9,427.7 L398.2,427.8 L397.5,428.0 L396.8,428.0 L396.1,428.2 L395.4,428.6 L394.7,428.7 L394.0,429.1 L393.3,429.3 L392.6,429.6 L391.9,429.9 L391.2,430.8 L390.5,431.6 L389.8,432.3 L389.1,432.2 L388.4,433.6 L387.7,435.2 L387.0,426.3 L386.3,426.3 L385.6,426.3 L384.9,426.3 L384.2,426.3 L383.5,426.3 L382.8,426.3 L382.1,426.3 L381.4,426.3 L380.7,426.3 L380.0,426.3 L379.3,426.3 L378.6,426.3 L377.9,426.3 L377.2,426.3 L376.5,426.3 L375.8,426.3 L375.1,426.3 L374.4,426.3 L373.7,426.3 L373.0,426.3 L372.3,426.3 L371.6,426.3 L370.9,426.3 L370.2,426.3 L369.5,426.3 L368.8,426.3 L368.1,426.3 L367.4,426.4 L366.7,426.5 L366.0,426.5 L365.3,426.6 L364.6,426.6 L363.9,426.7 L363.2,426.7 L362.5,426.7 L361.8,426.7 L361.1,426.8 L360.4,426.9 L359.7,427.0 L359.0,427.0 L358.3,427.2 L357.6,427.1 L356.9,427.3 L356.2,427.2 L355.5,427.4 L354.8,427.4 L354.1,427.5 L353.4,427.7 L352.7,427.8 L352.0,428.0 L351.3,428.1 L350.6,428.3 L349.9,428.5 L349.2,428.4 L348.5,428.8 L347.8,428.8 L347.1,429.0 L346.4,429.4 L345.7,426.3 L345.0,426.3 L344.3,426.4 L343.6,426.4 L342.9,426.4 L342.2,426.5 L341.5,426.5 L340.8,426.5 L340.1,426.6 L339.4,426.6 L338.7,426.7 L338.0,426.6 L337.3,426.7 L336.6,426.7 L335.9,426.8 L335.2,426.8 L334.5,426.8 L333.8,426.9 L333.1,426.8 L332.4,426.9 L331.7,426.9 L331.0,427.0 L330.3,426.9 L329.6,427.1 L328.9,427.0 L328.2,427.1 L327.5,427.1 L326.8,427.1 L326.1,427.1 L325.4,427.2 L324.7,427.2 L324.0,427.2 L323.3,427.4 L322.6,427.3 L321.9,427.3 L321.2,427.4 L320.5,427.4 L319.8,427.5 L319.1,427.5 L318.4,427.6 L317.7,427.6 L317.0,427.6 L316.3,427.7 L315.6,427.7 L314.9,427.8 L314.2,427.9 L313.5,427.9 L312.8,428.1 L312.1,428.0 L311.4,428.1 L310.7,428.2 L310.0,428.2 L309.3,428.2 L308.6,428.2 L307.9,428.2 L307.2,428.4 L306.5,428.4 L305.8,428.6 L305.1,428.5 L304.4,428.7 L303.7,428.7 L303.0,428.5 L302.3,428.9 L301.6,429.0 L300.9,428.7 L300.2,428.9 L299.5,429.1 L298.8,429.0 L298.1,429.4 L297.4,429.3 L296.7,429.4 L296.0,429.5 L295.3,429.5 L294.6,429.6 L293.9,429.8 L293.2,429.9 L292.5,429.8 L291.8,429.8 L291.1,430.3 L290.4,430.2 L289.7,430.4 L289.0,431.0 L288.3,430.7 L287.6,431.1 L286.9,431.7 L286.2,431.6 L285.5,431.9 L284.8,432.7 L284.1,433.0 L283.4,432.2 L282.7,433.0 L282.0,432.6 L281.3,432.9 L280.6,433.8 L279.9,433.9 L279.2,433.7 L278.5,433.8 L277.8,433.9 L277.1,433.6 L276.4,433.9 L275.7,433.6 L275.0,433.6 L274.3,433.6 L273.6,432.9 L272.9,433.0 L272.2,432.9 L271.5,432.8 L270.8,432.5 L270.1,432.1 L269.4,432.4 L268.7,431.7 L268.0,431.0 L267.3,429.8 L266.6,426.3 L265.9,426.3 L265.2,426.3 L264.5,426.3 L263.8,426.3 L263.1,426.3 L262.4,426.3 L261.7,426.3 L261.0,426.3 L260.3,426.3 L259.6,426.3 L258.9,426.3 L258.2,426.3 L257.5,426.3 L256.8,426.3 L256.1,426.3 L255.4,426.3 L254.7,426.3 L254.0,426.3 L253.3,426.3 L252.6,426.3 L251.9,426.3 L251.2,426.3 L250.5,426.3 L249.8,426.3 L249.1,426.4 L248.4,426.4 L247.7,426.5 L247.0,426.5 L246.3,426.6 L245.6,426.6 L244.9,426.6 L244.2,426.7 L243.5,426.7 L242.8,426.8 L242.1,426.9 L241.4,426.9 L240.7,426.9 L240.0,427.0 L239.3,427.0 L238.6,427.1 L237.9,427.2 L237.2,427.3 L236.5,427.4 L235.8,427.4 L235.1,427.5 L234.4,427.5 L233.7,427.7 L233.0,427.8 L232.3,428.0 L231.6,427.9 L230.9,428.2 L230.2,428.3 L229.5,428.6 L228.8,428.6 L228.1,428.9 L227.4,429.1 L226.7,429.3 L226.0,426.3 L225.3,426.3 L224.6,426.3 L223.9,426.3 L223.2,426.3 L222.5,426.3 L221.8,426.3 L221.1,426.3 L220.4,426.3 L219.7,426.3 L219.0,426.3 L218.3,426.3 L217.6,426.3 L216.9,426.3 L216.2,426.3 L215.5,426.3 L214.8,426.3 L214.1,426.3 L213.4,426.3 L212.7,426.4 L212.0,426.4 L211.3,426.5 L210.6,426.5 L209.9,426.5 L209.2,426.6 L208.5,426.6 L207.8,426.7 L207.1,426.8 L206.4,426.8 L205.7,426.8 L205.0,427.0 L204.3,427.0 L203.6,427.1 L202.9,427.2 L202.2,427.2 L201.5,427.3 L200.8,427.3 L200.1,427.4 L199.4,427.6 L198.7,427.6 L198.0,427.7 L197.3,427.9 L196.6,427.9 L195.9,428.1 L195.2,428.3 L194.5,428.2 L193.8,428.4 L193.1,428.5 L192.4,428.9 L191.7,429.1 L191.0,429.2 L190.3,429.7 L189.6,429.5 L188.9,430.3 L188.2,430.6 L187.5,426.3 L186.8,426.3 L186.1,426.3 L185.4,426.3 L184.7,426.3 L184.0,426.3 L183.3,426.3 L182.6,426.3 L181.9,426.3 L181.2,426.3 L180.5,426.3 L179.8,426.3 L179.1,426.3 L178.4,426.3 L177.7,426.3 L177.0,426.3 L176.3,426.3 L175.6,426.3 L174.9,426.3 L174.2,426.3 L173.5,426.3 L172.8,426.3 L172.1,426.3 L171.4,426.3 L170.7,426.3 L170.0,426.3 L169.3,426.3 L168.6,426.3 L167.9,426.3 L167.2,426.3 L166.5,426.3 L165.8,426.3 L165.1,426.3 L164.4,426.3 L163.7,426.3 L163.0,426.3 L162.3,426.3 L161.6,426.3 L160.9,426.3 L160.2,426.3 L159.5,426.4 L158.8,426.4 L158.1,426.4 L157.4,426.4 L156.7,426.5 L156.0,426.5 L155.3,426.5 L154.6,426.5 L153.9,426.6 L153.2,426.6 L152.5,426.6 L151.8,426.7 L151.1,426.7 L150.4,426.7 L149.7,426.7 L149.0,426.8 L148.3,426.8 L147.6,426.8 L146.9,426.9 L146.2,426.9 L145.5,427.0 L144.8,427.0 L144.1,427.0 L143.4,427.1 L142.7,427.1 L142.0,427.1 L141.3,427.2 L140.6,427.3 L139.9,427.2 L139.2,427.3 L138.5,427.2 L137.8,427.3 L137.1,427.5 L136.4,427.5 L135.7,427.4 L135.0,427.4 L134.3,427.5 L133.6,427.7 L132.9,427.6 L132.2,427.8 L131.5,427.9 L130.8,427.7 L130.1,427.9 L129.4,427.8 L128.7,428.0 L128.0,428.1 L127.3,427.9 L126.6,428.3 L125.9,428.3 L125.2,428.3 L124.5,428.3 L123.8,428.3 L123.1,428.3 L122.4,428.4 L121.7,428.4 L121.0,428.5 L120.3,428.9 L119.6,428.9 L118.9,429.0 L118.2,429.1 L117.5,429.1 L116.8,429.0 L116.1,429.3 L115.4,429.2 L114.7,429.7 L114.0,429.9 L113.3,429.7 L112.6,430.1 L111.9,430.3 L111.2,430.4 L110.5,431.1 L109.8,430.8 L109.1,431.6 L108.4,431.9Z" fill="#0a0f0e"/><path d="M108.4,481.5 L109.1,481.8 L109.8,482.0 L110.5,482.7 L111.2,482.8 L111.9,482.6 L112.6,483.0 L113.3,483.3 L114.0,483.5 L114.7,483.7 L115.4,483.8 L116.1,483.9 L116.8,484.2 L117.5,484.1 L118.2,484.3 L118.9,484.4 L119.6,484.6 L120.3,484.6 L121.0,484.6 L121.7,484.9 L122.4,484.7 L123.1,484.9 L123.8,485.0 L124.5,485.1 L125.2,485.1 L125.9,485.1 L126.6,485.1 L127.3,485.2 L128.0,485.2 L128.7,485.3 L129.4,485.4 L130.1,485.4 L130.8,485.6 L131.5,485.5 L132.2,485.7 L132.9,485.7 L133.6,485.8 L134.3,485.7 L135.0,485.8 L135.7,485.8 L136.4,485.8 L137.1,486.0 L137.8,486.0 L138.5,486.0 L139.2,486.1 L139.9,486.1 L140.6,486.2 L141.3,486.2 L142.0,486.2 L142.7,486.3 L143.4,486.3 L144.1,486.3 L144.8,486.3 L145.5,486.4 L146.2,486.5 L146.9,486.4 L147.6,486.5 L148.3,486.6 L149.0,486.7 L149.7,486.6 L150.4,486.6 L151.1,486.7 L151.8,486.7 L152.5,486.8 L153.2,486.8 L153.9,486.8 L154.6,486.8 L155.3,486.9 L156.0,486.9 L156.7,486.9 L157.4,486.9 L158.1,487.0 L158.8,487.0 L159.5,487.0 L160.2,487.1 L160.9,487.1 L161.6,487.1 L162.3,487.1 L163.0,487.1 L163.7,487.1 L164.4,487.1 L165.1,487.1 L165.8,487.1 L166.5,487.1 L167.2,487.1 L167.9,487.1 L168.6,487.1 L169.3,487.1 L170.0,487.1 L170.7,487.1 L171.4,487.1 L172.1,487.1 L172.8,487.1 L173.5,487.1 L174.2,487.1 L174.9,487.1 L175.6,487.1 L176.3,487.1 L177.0,487.1 L177.7,487.1 L178.4,487.1 L179.1,487.1 L179.8,487.1 L180.5,487.1 L181.2,487.1 L181.9,487.1 L182.6,487.1 L183.3,487.1 L184.0,487.1 L184.7,487.1 L185.4,487.1 L186.1,487.1 L186.8,487.1 L187.5,487.1 L188.2,483.0 L188.9,482.9 L189.6,483.3 L190.3,483.7 L191.0,484.2 L191.7,484.3 L192.4,484.5 L193.1,484.5 L193.8,485.0 L194.5,485.1 L195.2,485.0 L195.9,485.4 L196.6,485.4 L197.3,485.5 L198.0,485.6 L198.7,485.8 L199.4,485.9 L200.1,485.9 L200.8,486.1 L201.5,486.1 L202.2,486.1 L202.9,486.2 L203.6,486.3 L204.3,486.4 L205.0,486.4 L205.7,486.5 L206.4,486.6 L207.1,486.7 L207.8,486.7 L208.5,486.7 L209.2,486.7 L209.9,486.8 L210.6,486.9 L211.3,486.9 L212.0,487.0 L212.7,487.0 L213.4,487.1 L214.1,487.1 L214.8,487.1 L215.5,487.1 L216.2,487.1 L216.9,487.1 L217.6,487.1 L218.3,487.1 L219.0,487.1 L219.7,487.1 L220.4,487.1 L221.1,487.1 L221.8,487.1 L222.5,487.1 L223.2,487.1 L223.9,487.1 L224.6,487.1 L225.3,487.1 L226.0,487.1 L226.7,484.0 L227.4,484.4 L228.1,484.2 L228.8,484.5 L229.5,484.8 L230.2,484.9 L230.9,485.2 L231.6,485.2 L232.3,485.5 L233.0,485.4 L233.7,485.7 L234.4,485.8 L235.1,485.9 L235.8,486.0 L236.5,486.0 L237.2,486.1 L237.9,486.2 L238.6,486.2 L239.3,486.4 L240.0,486.4 L240.7,486.5 L241.4,486.5 L242.1,486.6 L242.8,486.6 L243.5,486.7 L244.2,486.7 L244.9,486.8 L245.6,486.8 L246.3,486.8 L247.0,486.9 L247.7,486.9 L248.4,487.0 L249.1,487.0 L249.8,487.1 L250.5,487.1 L251.2,487.1 L251.9,487.1 L252.6,487.1 L253.3,487.1 L254.0,487.1 L254.7,487.1 L255.4,487.1 L256.1,487.1 L256.8,487.1 L257.5,487.1 L258.2,487.1 L258.9,487.1 L259.6,487.1 L260.3,487.1 L261.0,487.1 L261.7,487.1 L262.4,487.1 L263.1,487.1 L263.8,487.1 L264.5,487.1 L265.2,487.1 L265.9,487.1 L266.6,487.1 L267.3,483.5 L268.0,482.0 L268.7,481.5 L269.4,481.5 L270.1,480.6 L270.8,480.0 L271.5,479.6 L272.2,479.0 L272.9,478.7 L273.6,478.9 L274.3,479.0 L275.0,477.9 L275.7,477.7 L276.4,478.1 L277.1,477.0 L277.8,477.5 L278.5,477.4 L279.2,478.2 L279.9,478.2 L280.6,478.7 L281.3,479.2 L282.0,479.4 L282.7,478.9 L283.4,479.9 L284.1,480.5 L284.8,480.4 L285.5,480.9 L286.2,481.4 L286.9,481.6 L287.6,482.1 L288.3,482.0 L289.0,482.3 L289.7,482.5 L290.4,483.1 L291.1,483.2 L291.8,483.3 L292.5,483.2 L293.2,483.5 L293.9,483.9 L294.6,483.6 L295.3,483.8 L296.0,484.0 L296.7,484.2 L297.4,483.9 L298.1,484.1 L298.8,484.0 L299.5,484.1 L300.2,484.5 L300.9,484.5 L301.6,484.5 L302.3,484.7 L303.0,484.6 L303.7,484.6 L304.4,484.6 L305.1,484.7 L305.8,484.7 L306.5,484.8 L307.2,484.8 L307.9,485.1 L308.6,485.2 L309.3,485.2 L310.0,485.1 L310.7,485.2 L311.4,485.3 L312.1,485.2 L312.8,485.4 L313.5,485.3 L314.2,485.5 L314.9,485.4 L315.6,485.7 L316.3,485.5 L317.0,485.6 L317.7,485.7 L318.4,485.7 L319.1,485.9 L319.8,485.9 L320.5,486.0 L321.2,485.9 L321.9,485.9 L322.6,486.0 L323.3,486.1 L324.0,486.1 L324.7,486.1 L325.4,486.1 L326.1,486.2 L326.8,486.2 L327.5,486.2 L328.2,486.2 L328.9,486.3 L329.6,486.3 L330.3,486.4 L331.0,486.4 L331.7,486.4 L332.4,486.5 L333.1,486.5 L333.8,486.6 L334.5,486.5 L335.2,486.5 L335.9,486.6 L336.6,486.6 L337.3,486.7 L338.0,486.7 L338.7,486.8 L339.4,486.8 L340.1,486.8 L340.8,486.8 L341.5,486.9 L342.2,486.9 L342.9,486.9 L343.6,487.0 L344.3,487.0 L345.0,487.0 L345.7,487.1 L346.4,483.7 L347.1,484.1 L347.8,484.3 L348.5,484.6 L349.2,484.7 L349.9,485.0 L350.6,485.1 L351.3,485.1 L352.0,485.3 L352.7,485.6 L353.4,485.7 L354.1,485.6 L354.8,485.8 L355.5,486.0 L356.2,486.1 L356.9,486.2 L357.6,486.2 L358.3,486.3 L359.0,486.4 L359.7,486.4 L360.4,486.5 L361.1,486.5 L361.8,486.6 L362.5,486.6 L363.2,486.8 L363.9,486.8 L364.6,486.8 L365.3,486.9 L366.0,486.9 L366.7,486.9 L367.4,487.0 L368.1,487.0 L368.8,487.0 L369.5,487.1 L370.2,487.1 L370.9,487.1 L371.6,487.1 L372.3,487.1 L373.0,487.1 L373.7,487.1 L374.4,487.1 L375.1,487.1 L375.8,487.1 L376.5,487.1 L377.2,487.1 L377.9,487.1 L378.6,487.1 L379.3,487.1 L380.0,487.1 L380.7,487.1 L381.4,487.1 L382.1,487.1 L382.8,487.1 L383.5,487.1 L384.2,487.1 L384.9,487.1 L385.6,487.1 L386.3,487.1 L387.0,487.1 L387.7,475.5 L388.4,478.4 L389.1,479.5 L389.8,481.4 L390.5,481.8 L391.2,482.3 L391.9,483.3 L392.6,483.8 L393.3,484.0 L394.0,484.4 L394.7,484.7 L395.4,484.7 L396.1,485.1 L396.8,485.1 L397.5,485.5 L398.2,485.5 L398.9,485.7 L399.6,485.7 L400.3,485.7 L401.0,485.8 L401.7,486.1 L402.4,486.1 L403.1,486.2 L403.8,486.3 L404.5,486.3 L405.2,486.4 L405.9,486.5 L406.6,486.5 L407.3,486.5 L408.0,482.2 L408.7,482.4 L409.4,483.0 L410.1,483.4 L410.8,483.9 L411.5,484.0 L412.2,484.2 L412.9,484.6 L413.6,484.8 L414.3,485.2 L415.0,485.5 L415.7,485.6 L416.4,485.8 L417.1,486.0 L417.8,486.1 L418.5,486.2 L419.2,486.5 L419.9,486.6 L420.6,486.7 L421.3,486.8 L422.0,486.9 L422.7,487.0 L423.4,487.1 L424.1,487.1 L424.8,487.1 L425.5,487.1 L426.2,487.1 L426.9,487.1 L427.6,483.4 L428.3,483.7 L429.0,483.6 L429.7,484.1 L430.4,484.3 L431.1,484.5 L431.8,484.7 L432.5,484.8 L433.2,484.8 L433.9,484.8 L434.6,484.9 L435.3,485.2 L436.0,485.3 L436.7,485.3 L437.4,485.3 L438.1,485.5 L438.8,485.6 L439.5,485.6 L440.2,485.5 L440.9,485.7 L441.6,485.6 L442.3,485.8 L443.0,485.7 L443.7,485.7 L444.4,485.9 L445.1,485.9 L445.8,486.0 L446.5,486.1 L447.2,486.1 L447.9,486.1 L448.6,486.0 L449.3,486.1 L450.0,486.2 L450.7,486.2 L451.4,486.3 L452.1,486.3 L452.8,486.3 L453.5,486.3 L454.2,486.4 L454.9,486.4 L455.6,486.4 L456.3,486.4 L457.0,486.4 L457.7,486.6 L458.4,486.6 L459.1,486.5 L459.8,486.6 L460.5,486.7 L461.2,486.6 L461.9,486.7 L462.6,486.7 L463.3,486.7 L464.0,486.8 L464.7,486.8 L465.4,486.8 L466.1,486.8 L466.8,486.8 L467.5,486.8 L468.2,486.9 L468.9,486.9 L469.6,486.9 L470.3,487.0 L471.0,487.0 L471.7,487.0 L472.4,487.0 L473.1,487.0 L473.8,487.1 L474.5,487.1 L475.2,487.1 L475.9,487.1 L476.6,487.1 L477.3,487.1 L478.0,487.1 L478.7,487.1 L479.4,487.1 L480.1,487.1 L480.8,487.1 L481.5,487.1 L482.2,487.1 L482.9,487.1 L483.6,487.1 L484.3,487.1 L485.0,487.1 L485.7,487.1 L486.4,487.1 L487.1,487.1 L487.8,487.1 L488.5,487.1 L489.2,487.1 L489.9,487.1 L490.6,487.1 L491.3,487.1 L492.0,487.1 L492.7,487.1 L493.4,487.1 L494.1,487.1 L494.8,487.1 L495.5,487.1 L496.2,487.1 L496.9,487.1 L497.6,487.1 L498.3,487.1 L499.0,487.1 L499.7,487.1 L500.4,487.1 L501.1,487.1 L501.8,487.1 L502.5,487.1 L503.2,487.1 L503.9,487.1 L504.6,487.1 L505.3,487.1 L506.0,487.1 L506.7,487.1 L507.4,480.4 L508.1,481.3 L508.8,481.9 L509.5,482.4 L510.2,482.4 L510.9,482.7 L511.6,482.9 L512.3,483.6 L513.0,483.7 L513.7,484.0 L514.4,484.2 L515.1,484.1 L515.8,484.3 L516.5,484.7 L517.2,484.9 L517.9,484.9 L518.6,484.9 L519.3,485.2 L520.0,485.4 L520.7,485.5 L521.4,485.6 L522.1,485.7 L522.8,485.7 L523.5,485.8 L524.2,485.9 L524.9,486.1 L525.6,486.1 L526.3,486.2 L527.0,486.3 L527.7,486.3 L528.4,486.4 L529.1,486.5 L529.8,486.5 L530.5,486.6 L531.2,486.7 L531.9,486.7 L532.6,486.8 L533.3,486.8 L534.0,486.9 L534.7,486.9 L535.4,487.0 L536.1,487.1 L536.8,487.1 L537.5,487.1 L538.2,487.1 L538.9,487.1 L539.6,487.1 L540.3,487.1 L541.0,487.1 L541.7,487.1 L542.4,487.1 L543.1,487.1 L543.8,487.1 L544.5,487.1 L545.2,487.1 L545.9,487.1 L546.6,487.1 L547.3,480.0 L548.0,480.7 L548.7,481.7 L549.4,481.9 L550.1,482.3 L550.8,482.4 L551.5,482.5 L552.2,483.1 L552.9,483.4 L553.6,483.3 L554.3,483.5 L555.0,484.0 L555.7,483.9 L556.4,484.3 L557.1,484.6 L557.8,484.5 L558.5,484.7 L559.2,485.1 L559.9,485.0 L560.6,485.2 L561.3,485.4 L562.0,485.5 L562.7,485.6 L563.4,485.7 L564.1,485.7 L564.8,485.8 L565.5,485.9 L566.2,486.0 L566.9,486.2 L567.6,486.3 L568.3,486.4 L569.0,486.4 L569.7,486.4 L570.4,486.6 L571.1,486.6 L571.8,486.6 L572.5,486.8 L573.2,486.8 L573.9,486.8 L574.6,486.9 L575.3,487.0 L576.0,487.0 L576.7,487.1 L577.4,487.1 L578.1,487.1 L578.8,487.1 L579.5,487.1 L580.2,487.1 L580.9,487.1 L581.6,487.1 L582.3,487.1 L583.0,487.1 L583.7,487.1 L584.4,487.1 L585.1,487.1 L585.8,487.1 L586.5,487.1 L587.2,484.6 L587.9,479.6 L588.6,479.0 L589.3,478.9 L590.0,479.4 L590.7,479.0 L591.4,478.9 L592.1,478.9 L592.8,479.3 L593.5,479.8 L594.2,480.8 L594.9,480.6 L595.6,481.0 L596.3,480.4 L597.0,479.8 L597.7,479.0 L598.4,479.5 L599.1,479.7 L599.8,479.4 L600.5,479.1 L601.2,480.2 L601.9,480.9 L602.6,480.2 L603.3,481.1 L604.0,481.0 L604.7,481.2 L605.4,481.5 L606.1,481.7 L606.8,481.9 L607.5,482.0 L608.2,481.7 L608.9,481.9 L609.6,482.2 L610.3,482.3 L611.0,482.3 L611.7,483.0 L612.4,482.5 L613.1,482.8 L613.8,483.1 L614.5,483.0 L615.2,483.3 L615.9,483.4 L616.6,483.5 L617.3,483.4 L618.0,483.3 L618.7,483.8 L619.4,484.0 L620.1,483.8 L620.8,484.1 L621.5,484.2 L622.2,484.1 L622.9,484.0 L623.6,484.4 L624.3,484.5 L625.0,484.3 L625.7,484.4 L626.4,484.7 L627.1,484.8 L627.8,484.6 L628.5,484.9 L629.2,484.9 L629.9,484.9 L630.6,485.1 L631.3,485.0 L632.0,485.0 L632.7,485.1 L633.4,485.2 L634.1,485.4 L634.8,485.3 L635.5,485.4 L636.2,485.5 L636.9,485.4 L637.6,485.6 L638.3,485.5 L639.0,485.7 L639.7,485.5 L640.4,485.8 L641.1,485.8 L641.8,485.6 L642.5,485.9 L643.2,485.9 L643.9,485.8 L644.6,485.8 L645.3,486.0 L646.0,485.9 L646.7,486.0 L647.4,486.1 L648.1,486.0 L648.8,486.0 L649.5,486.2 L650.2,486.2 L650.9,486.1 L651.6,486.2 L652.3,486.3 L653.0,486.2 L653.7,486.4 L654.4,486.4 L655.1,486.4 L655.8,486.5 L656.5,486.5 L657.2,486.5 L657.9,486.6 L658.6,486.6 L659.3,486.6 L660.0,486.7 L660.7,486.7 L661.4,486.7 L662.1,486.7 L662.8,486.8 L663.5,486.9 L664.2,487.0 L664.9,487.1 L665.6,487.1 L666.3,487.1 L667.0,482.9 L667.7,483.2 L668.4,483.4 L669.1,483.7 L669.8,484.0 L670.5,484.3 L671.2,484.5 L671.9,484.7 L672.6,484.8 L673.3,484.9 L674.0,484.9 L674.7,485.0 L675.4,485.3 L676.1,485.3 L676.8,485.5 L677.5,485.5 L678.2,485.6 L678.9,485.9 L679.6,486.0 L680.3,485.9 L681.0,486.0 L681.7,486.2 L682.4,486.3 L683.1,486.2 L683.8,486.3 L684.5,486.4 L685.2,486.4 L685.9,486.6 L686.6,486.5 L687.3,486.6 L688.0,486.7 L688.7,486.7 L689.4,486.8 L690.1,486.8 L690.8,486.9 L691.5,487.0 L692.2,487.0 L692.9,487.0 L693.6,487.1 L694.3,487.1 L695.0,487.1 L695.7,487.1 L696.4,487.1 L697.1,487.1 L697.8,487.1 L698.5,487.1 L699.2,487.1 L699.9,487.1 L700.6,487.1 L701.3,487.1 L702.0,487.1 L702.7,487.1 L703.4,487.1 L704.1,487.1 L704.8,487.1 L705.5,487.1 L706.2,487.1 L706.9,476.1 L707.6,478.7 L708.3,479.9 L709.0,481.2 L709.7,482.2 L710.4,482.5 L711.1,483.5 L711.8,483.7 L712.5,483.9 L713.2,484.4 L713.9,484.6 L714.6,484.7 L715.3,485.1 L716.0,485.2 L716.7,485.3 L717.4,485.6 L718.1,485.7 L718.8,485.6 L719.5,485.9 L720.2,485.9 L720.9,485.9 L721.6,486.0 L722.3,486.2 L723.0,486.2 L723.7,486.3 L724.4,486.4 L725.1,486.5 L725.8,486.4 L726.5,480.5 L727.2,480.9 L727.9,482.0 L728.6,482.6 L729.3,483.1 L730.0,483.3 L730.7,483.5 L731.4,483.8 L732.1,484.4 L732.8,484.6 L733.5,484.8 L734.2,485.0 L734.9,485.4 L735.6,485.5 L736.3,485.8 L737.0,486.0 L737.7,486.1 L738.4,486.3 L739.1,486.5 L739.8,486.6 L740.5,486.7 L741.2,486.8 L741.9,487.0 L742.6,487.1 L743.3,487.1 L744.0,487.1 L744.7,487.1 L745.4,487.1 L746.1,487.1 L746.8,484.4 L747.5,484.9 L748.2,485.0 L748.9,485.2 L749.6,485.2 L750.3,485.4 L751.0,485.7 L751.7,485.7 L752.4,485.9 L753.1,486.0 L753.8,486.1 L754.5,486.1 L755.2,486.2 L755.9,486.3 L756.6,486.4 L757.3,486.4 L758.0,486.5 L758.7,486.6 L759.4,486.7 L760.1,486.7 L760.8,486.7 L761.5,486.8 L762.2,486.9 L762.9,486.9 L763.6,487.0 L764.3,487.0 L765.0,487.1 L765.7,487.1 L766.4,487.1 L767.1,487.1 L767.8,487.1 L768.5,487.1 L769.2,487.1 L769.9,487.1 L770.6,487.1 L771.3,487.1 L772.0,487.1 L772.7,487.1 L773.4,487.1 L774.1,487.1 L774.8,487.1 L775.5,487.1 L776.2,487.1 L776.9,487.1 L777.6,485.8 L778.3,485.9 L779.0,486.1 L779.7,486.3 L780.4,486.4 L781.1,486.5 L781.8,486.5 L782.5,486.6 L783.2,486.7 L783.9,486.8 L784.6,486.8 L785.3,486.9 L786.0,487.0 L786.7,487.0 L787.4,487.0 L788.1,487.1 L788.8,487.1 L789.5,487.1 L790.2,487.1 L790.9,487.1 L791.6,487.1 L792.3,487.1 L793.0,487.1 L793.7,487.1 L794.4,487.1 L795.1,487.1 L795.8,487.1 L796.5,487.1 L797.2,487.1 L797.9,487.1 L798.6,487.1 L799.3,487.1 L800.0,487.1 L800.7,487.1 L801.4,487.1 L802.1,487.1 L802.8,487.1 L803.5,487.1 L804.2,487.1 L804.9,487.1 L805.6,487.1 L806.3,487.1 L807.0,487.1 L807.7,487.1 L808.4,487.1 L809.1,487.1 L809.8,487.1 L810.5,487.1 L811.2,487.1 L811.9,487.1 L812.6,487.1 L813.3,487.1 L814.0,487.1 L814.7,487.1 L815.4,487.1 L816.1,487.1 L816.8,487.1 L817.5,487.1 L818.2,487.1 L818.9,487.1 L819.6,487.1 L820.3,487.1 L821.0,487.1 L821.7,487.1 L822.4,487.1 L823.1,487.1 L823.8,487.1 L824.5,487.1 L825.2,487.1 L825.9,487.1 L826.6,487.1 L827.3,487.1 L828.0,487.1 L828.7,487.1 L829.4,487.1 L830.1,487.1 L830.8,487.1 L831.5,487.1 L832.2,487.1 L832.9,487.1 L833.6,487.1 L834.3,487.1 L835.0,487.1 L835.7,487.1 L836.4,487.1 L837.1,487.1 L837.8,487.1 L838.5,487.1 L839.2,487.1 L839.9,487.1 L840.6,487.1 L841.3,487.1 L842.0,487.1 L842.7,487.1 L843.4,487.1 L844.1,487.1 L844.8,487.1 L845.5,487.1 L846.2,487.1 L846.9,487.1 L847.6,487.1 L848.3,487.1 L849.0,487.1 L849.7,487.1 L850.4,487.1 L851.1,487.1 L851.8,487.1 L852.5,487.1 L853.2,487.1 L853.9,487.1 L854.6,487.1 L855.3,487.1 L856.0,487.1 L856.7,487.1 L857.4,487.1 L858.1,487.1 L858.8,487.1 L859.5,487.1 L860.2,487.1 L860.9,487.1 L861.6,487.1 L862.3,487.1 L863.0,487.1 L863.7,487.1 L864.4,487.1 L865.1,487.1 L865.8,487.1 L866.5,487.1 L867.2,487.1 L867.9,487.1 L868.6,487.1 L869.3,487.1 L870.0,487.1 L870.7,487.1 L871.4,487.1 L872.1,487.1 L872.8,487.1 L873.5,487.1 L874.2,487.1 L874.9,487.1 L875.6,487.1 L876.3,487.1 L877.0,487.1 L877.7,487.1 L878.4,487.1 L879.1,487.1 L879.8,487.1 L880.5,487.1 L881.2,487.1 L881.9,487.1 L882.6,487.1 L883.3,487.1 L884.0,487.1 L884.7,487.1 L885.4,487.1 L886.1,487.1 L886.8,487.1 L887.5,487.1 L888.2,487.1 L888.9,487.1 L889.6,487.1 L890.3,487.1 L891.0,487.1 L891.7,487.1 L892.4,487.1 L893.1,487.1 L893.8,487.1 L894.5,487.1 L895.2,487.1 L895.9,487.1 L896.6,487.1 L897.3,487.1 L897.3,487.7 L896.6,487.7 L895.9,487.7 L895.2,487.7 L894.5,487.7 L893.8,487.7 L893.1,487.7 L892.4,487.7 L891.7,487.7 L891.0,487.7 L890.3,487.7 L889.6,487.7 L888.9,487.7 L888.2,487.7 L887.5,487.7 L886.8,487.7 L886.1,487.7 L885.4,487.7 L884.7,487.7 L884.0,487.7 L883.3,487.7 L882.6,487.7 L881.9,487.7 L881.2,487.7 L880.5,487.7 L879.8,487.7 L879.1,487.7 L878.4,487.7 L877.7,487.7 L877.0,487.7 L876.3,487.7 L875.6,487.7 L874.9,487.7 L874.2,487.7 L873.5,487.7 L872.8,487.7 L872.1,487.7 L871.4,487.7 L870.7,487.7 L870.0,487.7 L869.3,487.7 L868.6,487.7 L867.9,487.7 L867.2,487.7 L866.5,487.7 L865.8,487.7 L865.1,487.7 L864.4,487.7 L863.7,487.7 L863.0,487.7 L862.3,487.7 L861.6,487.7 L860.9,487.7 L860.2,487.7 L859.5,487.7 L858.8,487.7 L858.1,487.7 L857.4,487.7 L856.7,487.7 L856.0,487.7 L855.3,487.7 L854.6,487.7 L853.9,487.7 L853.2,487.7 L852.5,487.7 L851.8,487.7 L851.1,487.7 L850.4,487.7 L849.7,487.7 L849.0,487.7 L848.3,487.7 L847.6,487.7 L846.9,487.7 L846.2,487.7 L845.5,487.7 L844.8,487.7 L844.1,487.7 L843.4,487.7 L842.7,487.7 L842.0,487.7 L841.3,487.7 L840.6,487.7 L839.9,487.7 L839.2,487.7 L838.5,487.7 L837.8,487.7 L837.1,487.7 L836.4,487.7 L835.7,487.7 L835.0,487.7 L834.3,487.7 L833.6,487.7 L832.9,487.7 L832.2,487.7 L831.5,487.7 L830.8,487.7 L830.1,487.7 L829.4,487.7 L828.7,487.7 L828.0,487.7 L827.3,487.7 L826.6,487.7 L825.9,487.7 L825.2,487.7 L824.5,487.7 L823.8,487.7 L823.1,487.7 L822.4,487.7 L821.7,487.7 L821.0,487.7 L820.3,487.7 L819.6,487.7 L818.9,487.7 L818.2,487.7 L817.5,487.7 L816.8,487.7 L816.1,487.7 L815.4,487.7 L814.7,487.7 L814.0,487.7 L813.3,487.7 L812.6,487.7 L811.9,487.7 L811.2,487.7 L810.5,487.7 L809.8,487.7 L809.1,487.7 L808.4,487.7 L807.7,487.7 L807.0,487.7 L806.3,487.7 L805.6,487.7 L804.9,487.7 L804.2,487.7 L803.5,487.7 L802.8,487.7 L802.1,487.7 L801.4,487.7 L800.7,487.7 L800.0,487.7 L799.3,487.7 L798.6,487.7 L797.9,487.7 L797.2,487.7 L796.5,487.7 L795.8,487.7 L795.1,487.7 L794.4,487.7 L793.7,487.7 L793.0,487.7 L792.3,487.7 L791.6,487.7 L790.9,487.7 L790.2,487.7 L789.5,487.7 L788.8,487.7 L788.1,487.7 L787.4,487.8 L786.7,487.8 L786.0,487.9 L785.3,487.9 L784.6,487.9 L783.9,488.0 L783.2,488.0 L782.5,488.1 L781.8,488.2 L781.1,488.3 L780.4,488.4 L779.7,488.5 L779.0,488.7 L778.3,488.7 L777.6,488.8 L776.9,487.7 L776.2,487.7 L775.5,487.7 L774.8,487.7 L774.1,487.7 L773.4,487.7 L772.7,487.7 L772.0,487.7 L771.3,487.7 L770.6,487.7 L769.9,487.7 L769.2,487.7 L768.5,487.7 L767.8,487.7 L767.1,487.7 L766.4,487.7 L765.7,487.7 L765.0,487.7 L764.3,487.8 L763.6,487.8 L762.9,487.9 L762.2,487.9 L761.5,488.0 L760.8,488.0 L760.1,488.0 L759.4,488.1 L758.7,488.1 L758.0,488.2 L757.3,488.2 L756.6,488.4 L755.9,488.5 L755.2,488.4 L754.5,488.6 L753.8,488.7 L753.1,488.7 L752.4,488.9 L751.7,489.0 L751.0,489.2 L750.3,489.2 L749.6,489.5 L748.9,489.5 L748.2,489.8 L747.5,489.9 L746.8,490.2 L746.1,487.7 L745.4,487.7 L744.7,487.7 L744.0,487.7 L743.3,487.7 L742.6,487.7 L741.9,487.8 L741.2,487.9 L740.5,488.0 L739.8,488.2 L739.1,488.3 L738.4,488.4 L737.7,488.5 L737.0,488.7 L736.3,488.9 L735.6,489.2 L734.9,489.4 L734.2,489.6 L733.5,489.9 L732.8,490.2 L732.1,490.3 L731.4,490.5 L730.7,491.1 L730.0,491.6 L729.3,492.0 L728.6,492.5 L727.9,492.5 L727.2,493.1 L726.5,494.0 L725.8,488.4 L725.1,488.4 L724.4,488.4 L723.7,488.4 L723.0,488.6 L722.3,488.6 L721.6,488.6 L720.9,488.7 L720.2,488.8 L719.5,489.0 L718.8,489.1 L718.1,489.0 L717.4,489.1 L716.7,489.4 L716.0,489.5 L715.3,489.6 L714.6,489.9 L713.9,490.1 L713.2,490.4 L712.5,490.6 L711.8,490.8 L711.1,491.4 L710.4,492.1 L709.7,492.7 L709.0,493.5 L708.3,494.3 L707.6,494.7 L706.9,496.8 L706.2,487.7 L705.5,487.7 L704.8,487.7 L704.1,487.7 L703.4,487.7 L702.7,487.7 L702.0,487.7 L701.3,487.7 L700.6,487.7 L699.9,487.7 L699.2,487.7 L698.5,487.7 L697.8,487.7 L697.1,487.7 L696.4,487.7 L695.7,487.7 L695.0,487.7 L694.3,487.7 L693.6,487.7 L692.9,487.8 L692.2,487.8 L691.5,487.9 L690.8,487.9 L690.1,488.0 L689.4,488.0 L688.7,488.0 L688.0,488.1 L687.3,488.1 L686.6,488.2 L685.9,488.2 L685.2,488.2 L684.5,488.4 L683.8,488.5 L683.1,488.4 L682.4,488.6 L681.7,488.7 L681.0,488.6 L680.3,488.7 L679.6,488.8 L678.9,489.0 L678.2,489.0 L677.5,489.2 L676.8,489.3 L676.1,489.3 L675.4,489.3 L674.7,489.4 L674.0,489.8 L673.3,490.0 L672.6,489.8 L671.9,490.3 L671.2,490.5 L670.5,490.7 L669.8,490.8 L669.1,491.0 L668.4,491.2 L667.7,491.3 L667.0,491.8 L666.3,487.7 L665.6,487.7 L664.9,487.7 L664.2,487.8 L663.5,487.9 L662.8,488.0 L662.1,488.0 L661.4,488.1 L660.7,488.1 L660.0,488.1 L659.3,488.2 L658.6,488.2 L657.9,488.2 L657.2,488.3 L656.5,488.3 L655.8,488.4 L655.1,488.4 L654.4,488.5 L653.7,488.5 L653.0,488.4 L652.3,488.4 L651.6,488.5 L650.9,488.6 L650.2,488.7 L649.5,488.6 L648.8,488.6 L648.1,488.8 L647.4,488.8 L646.7,488.8 L646.0,488.8 L645.3,488.8 L644.6,488.8 L643.9,488.8 L643.2,488.9 L642.5,489.1 L641.8,489.0 L641.1,489.0 L640.4,489.2 L639.7,489.0 L639.0,489.1 L638.3,489.2 L637.6,489.1 L636.9,489.2 L636.2,489.4 L635.5,489.4 L634.8,489.2 L634.1,489.5 L633.4,489.6 L632.7,489.6 L632.0,489.5 L631.3,489.7 L630.6,489.7 L629.9,489.8 L629.2,489.8 L628.5,490.0 L627.8,490.1 L627.1,490.1 L626.4,490.0 L625.7,490.1 L625.0,490.2 L624.3,490.5 L623.6,490.4 L622.9,490.5 L622.2,490.5 L621.5,490.5 L620.8,490.6 L620.1,490.9 L619.4,490.8 L618.7,490.9 L618.0,491.1 L617.3,491.4 L616.6,491.2 L615.9,491.4 L615.2,491.6 L614.5,491.3 L613.8,491.6 L613.1,491.8 L612.4,491.8 L611.7,492.1 L611.0,491.7 L610.3,492.2 L609.6,492.1 L608.9,492.6 L608.2,492.8 L607.5,492.6 L606.8,493.5 L606.1,493.7 L605.4,493.6 L604.7,493.5 L604.0,493.7 L603.3,494.1 L602.6,494.4 L601.9,494.4 L601.2,493.7 L600.5,493.8 L599.8,493.8 L599.1,494.1 L598.4,494.6 L597.7,493.6 L597.0,493.4 L596.3,494.2 L595.6,494.3 L594.9,493.8 L594.2,493.6 L593.5,493.6 L592.8,494.1 L592.1,494.2 L591.4,494.1 L590.7,494.2 L590.0,494.0 L589.3,494.2 L588.6,494.3 L587.9,494.0 L587.2,490.1 L586.5,487.7 L585.8,487.7 L585.1,487.7 L584.4,487.7 L583.7,487.7 L583.0,487.7 L582.3,487.7 L581.6,487.7 L580.9,487.7 L580.2,487.7 L579.5,487.7 L578.8,487.7 L578.1,487.7 L577.4,487.7 L576.7,487.7 L576.0,487.8 L575.3,487.8 L574.6,487.9 L573.9,487.9 L573.2,488.0 L572.5,488.1 L571.8,488.1 L571.1,488.2 L570.4,488.2 L569.7,488.3 L569.0,488.4 L568.3,488.5 L567.6,488.6 L566.9,488.5 L566.2,488.7 L565.5,488.7 L564.8,488.9 L564.1,489.0 L563.4,489.2 L562.7,489.2 L562.0,489.3 L561.3,489.5 L560.6,489.7 L559.9,489.6 L559.2,489.8 L558.5,490.1 L557.8,490.2 L557.1,490.1 L556.4,490.4 L555.7,490.4 L555.0,490.6 L554.3,490.9 L553.6,490.9 L552.9,491.3 L552.2,491.4 L551.5,491.9 L550.8,492.5 L550.1,492.3 L549.4,492.9 L548.7,493.3 L548.0,493.4 L547.3,493.7 L546.6,487.7 L545.9,487.7 L545.2,487.7 L544.5,487.7 L543.8,487.7 L543.1,487.7 L542.4,487.7 L541.7,487.7 L541.0,487.7 L540.3,487.7 L539.6,487.7 L538.9,487.7 L538.2,487.7 L537.5,487.7 L536.8,487.7 L536.1,487.7 L535.4,487.8 L534.7,487.8 L534.0,487.9 L533.3,487.9 L532.6,488.0 L531.9,488.0 L531.2,488.1 L530.5,488.2 L529.8,488.2 L529.1,488.3 L528.4,488.4 L527.7,488.5 L527.0,488.4 L526.3,488.6 L525.6,488.7 L524.9,488.8 L524.2,488.9 L523.5,488.9 L522.8,489.0 L522.1,489.1 L521.4,489.1 L520.7,489.4 L520.0,489.4 L519.3,489.5 L518.6,489.6 L517.9,490.0 L517.2,490.0 L516.5,490.0 L515.8,490.2 L515.1,490.3 L514.4,490.8 L513.7,491.0 L513.0,490.9 L512.3,491.0 L511.6,491.7 L510.9,492.1 L510.2,492.0 L509.5,492.5 L508.8,493.2 L508.1,493.0 L507.4,493.9 L506.7,487.7 L506.0,487.7 L505.3,487.7 L504.6,487.7 L503.9,487.7 L503.2,487.7 L502.5,487.7 L501.8,487.7 L501.1,487.7 L500.4,487.7 L499.7,487.7 L499.0,487.7 L498.3,487.7 L497.6,487.7 L496.9,487.7 L496.2,487.7 L495.5,487.7 L494.8,487.7 L494.1,487.7 L493.4,487.7 L492.7,487.7 L492.0,487.7 L491.3,487.7 L490.6,487.7 L489.9,487.7 L489.2,487.7 L488.5,487.7 L487.8,487.7 L487.1,487.7 L486.4,487.7 L485.7,487.7 L485.0,487.7 L484.3,487.7 L483.6,487.7 L482.9,487.7 L482.2,487.7 L481.5,487.7 L480.8,487.7 L480.1,487.7 L479.4,487.7 L478.7,487.7 L478.0,487.7 L477.3,487.7 L476.6,487.7 L475.9,487.7 L475.2,487.7 L474.5,487.7 L473.8,487.7 L473.1,487.7 L472.4,487.8 L471.7,487.8 L471.0,487.8 L470.3,487.8 L469.6,487.9 L468.9,487.8 L468.2,487.9 L467.5,487.9 L466.8,488.0 L466.1,488.0 L465.4,488.0 L464.7,488.0 L464.0,488.0 L463.3,488.0 L462.6,488.0 L461.9,488.1 L461.2,488.2 L460.5,488.2 L459.8,488.1 L459.1,488.2 L458.4,488.2 L457.7,488.2 L457.0,488.3 L456.3,488.3 L455.6,488.4 L454.9,488.3 L454.2,488.4 L453.5,488.4 L452.8,488.5 L452.1,488.5 L451.4,488.4 L450.7,488.6 L450.0,488.7 L449.3,488.6 L448.6,488.7 L447.9,488.6 L447.2,488.8 L446.5,488.7 L445.8,488.7 L445.1,488.9 L444.4,488.8 L443.7,488.9 L443.0,488.9 L442.3,489.1 L441.6,489.0 L440.9,489.0 L440.2,489.2 L439.5,489.3 L438.8,489.4 L438.1,489.5 L437.4,489.3 L436.7,489.4 L436.0,489.5 L435.3,489.8 L434.6,489.5 L433.9,489.9 L433.2,490.0 L432.5,489.9 L431.8,490.1 L431.1,490.5 L430.4,490.3 L429.7,490.6 L429.0,491.1 L428.3,491.0 L427.6,491.5 L426.9,487.7 L426.2,487.7 L425.5,487.7 L424.8,487.7 L424.1,487.7 L423.4,487.7 L422.7,487.8 L422.0,487.9 L421.3,487.9 L420.6,488.1 L419.9,488.2 L419.2,488.3 L418.5,488.4 L417.8,488.6 L417.1,488.8 L416.4,488.9 L415.7,489.3 L415.0,489.2 L414.3,489.6 L413.6,489.8 L412.9,490.2 L412.2,490.3 L411.5,490.8 L410.8,490.7 L410.1,491.2 L409.4,491.9 L408.7,492.3 L408.0,492.3 L407.3,488.3 L406.6,488.3 L405.9,488.3 L405.2,488.4 L404.5,488.5 L403.8,488.5 L403.1,488.6 L402.4,488.6 L401.7,488.7 L401.0,488.7 L400.3,489.0 L399.6,489.0 L398.9,489.1 L398.2,489.2 L397.5,489.4 L396.8,489.4 L396.1,489.6 L395.4,490.0 L394.7,490.1 L394.0,490.5 L393.3,490.7 L392.6,491.0 L391.9,491.3 L391.2,492.2 L390.5,493.0 L389.8,493.7 L389.1,493.6 L388.4,495.0 L387.7,496.6 L387.0,487.7 L386.3,487.7 L385.6,487.7 L384.9,487.7 L384.2,487.7 L383.5,487.7 L382.8,487.7 L382.1,487.7 L381.4,487.7 L380.7,487.7 L380.0,487.7 L379.3,487.7 L378.6,487.7 L377.9,487.7 L377.2,487.7 L376.5,487.7 L375.8,487.7 L375.1,487.7 L374.4,487.7 L373.7,487.7 L373.0,487.7 L372.3,487.7 L371.6,487.7 L370.9,487.7 L370.2,487.7 L369.5,487.7 L368.8,487.7 L368.1,487.7 L367.4,487.8 L366.7,487.9 L366.0,487.9 L365.3,488.0 L364.6,488.0 L363.9,488.1 L363.2,488.1 L362.5,488.1 L361.8,488.1 L361.1,488.2 L360.4,488.3 L359.7,488.4 L359.0,488.4 L358.3,488.6 L357.6,488.5 L356.9,488.7 L356.2,488.6 L355.5,488.8 L354.8,488.8 L354.1,488.9 L353.4,489.1 L352.7,489.2 L352.0,489.4 L351.3,489.5 L350.6,489.7 L349.9,489.9 L349.2,489.8 L348.5,490.2 L347.8,490.2 L347.1,490.4 L346.4,490.8 L345.7,487.7 L345.0,487.7 L344.3,487.8 L343.6,487.8 L342.9,487.8 L342.2,487.9 L341.5,487.9 L340.8,487.9 L340.1,488.0 L339.4,488.0 L338.7,488.1 L338.0,488.0 L337.3,488.1 L336.6,488.1 L335.9,488.2 L335.2,488.2 L334.5,488.2 L333.8,488.3 L333.1,488.2 L332.4,488.3 L331.7,488.3 L331.0,488.4 L330.3,488.3 L329.6,488.5 L328.9,488.4 L328.2,488.5 L327.5,488.5 L326.8,488.5 L326.1,488.5 L325.4,488.6 L324.7,488.6 L324.0,488.6 L323.3,488.8 L322.6,488.7 L321.9,488.7 L321.2,488.8 L320.5,488.8 L319.8,488.9 L319.1,488.9 L318.4,489.0 L317.7,489.0 L317.0,489.0 L316.3,489.1 L315.6,489.1 L314.9,489.2 L314.2,489.3 L313.5,489.3 L312.8,489.5 L312.1,489.4 L311.4,489.5 L310.7,489.6 L310.0,489.6 L309.3,489.6 L308.6,489.6 L307.9,489.6 L307.2,489.8 L306.5,489.8 L305.8,490.0 L305.1,489.9 L304.4,490.1 L303.7,490.1 L303.0,489.9 L302.3,490.3 L301.6,490.4 L300.9,490.1 L300.2,490.3 L299.5,490.5 L298.8,490.4 L298.1,490.8 L297.4,490.7 L296.7,490.8 L296.0,490.9 L295.3,490.9 L294.6,491.0 L293.9,491.2 L293.2,491.3 L292.5,491.2 L291.8,491.2 L291.1,491.7 L290.4,491.6 L289.7,491.8 L289.0,492.4 L288.3,492.1 L287.6,492.5 L286.9,493.1 L286.2,493.0 L285.5,493.3 L284.8,494.1 L284.1,494.4 L283.4,493.6 L282.7,494.4 L282.0,494.0 L281.3,494.3 L280.6,495.2 L279.9,495.3 L279.2,495.1 L278.5,495.2 L277.8,495.3 L277.1,495.0 L276.4,495.3 L275.7,495.0 L275.0,495.0 L274.3,495.0 L273.6,494.3 L272.9,494.4 L272.2,494.3 L271.5,494.2 L270.8,493.9 L270.1,493.5 L269.4,493.8 L268.7,493.1 L268.0,492.4 L267.3,491.2 L266.6,487.7 L265.9,487.7 L265.2,487.7 L264.5,487.7 L263.8,487.7 L263.1,487.7 L262.4,487.7 L261.7,487.7 L261.0,487.7 L260.3,487.7 L259.6,487.7 L258.9,487.7 L258.2,487.7 L257.5,487.7 L256.8,487.7 L256.1,487.7 L255.4,487.7 L254.7,487.7 L254.0,487.7 L253.3,487.7 L252.6,487.7 L251.9,487.7 L251.2,487.7 L250.5,487.7 L249.8,487.7 L249.1,487.8 L248.4,487.8 L247.7,487.9 L247.0,487.9 L246.3,488.0 L245.6,488.0 L244.9,488.0 L244.2,488.1 L243.5,488.1 L242.8,488.2 L242.1,488.3 L241.4,488.3 L240.7,488.3 L240.0,488.4 L239.3,488.4 L238.6,488.5 L237.9,488.6 L237.2,488.7 L236.5,488.8 L235.8,488.8 L235.1,488.9 L234.4,488.9 L233.7,489.1 L233.0,489.2 L232.3,489.4 L231.6,489.3 L230.9,489.6 L230.2,489.7 L229.5,490.0 L228.8,490.0 L228.1,490.3 L227.4,490.5 L226.7,490.7 L226.0,487.7 L225.3,487.7 L224.6,487.7 L223.9,487.7 L223.2,487.7 L222.5,487.7 L221.8,487.7 L221.1,487.7 L220.4,487.7 L219.7,487.7 L219.0,487.7 L218.3,487.7 L217.6,487.7 L216.9,487.7 L216.2,487.7 L215.5,487.7 L214.8,487.7 L214.1,487.7 L213.4,487.7 L212.7,487.8 L212.0,487.8 L211.3,487.9 L210.6,487.9 L209.9,487.9 L209.2,488.0 L208.5,488.0 L207.8,488.1 L207.1,488.2 L206.4,488.2 L205.7,488.2 L205.0,488.4 L204.3,488.4 L203.6,488.5 L202.9,488.6 L202.2,488.6 L201.5,488.7 L200.8,488.7 L200.1,488.8 L199.4,489.0 L198.7,489.0 L198.0,489.1 L197.3,489.3 L196.6,489.3 L195.9,489.5 L195.2,489.7 L194.5,489.6 L193.8,489.8 L193.1,489.9 L192.4,490.3 L191.7,490.5 L191.0,490.6 L190.3,491.1 L189.6,490.9 L188.9,491.7 L188.2,492.0 L187.5,487.7 L186.8,487.7 L186.1,487.7 L185.4,487.7 L184.7,487.7 L184.0,487.7 L183.3,487.7 L182.6,487.7 L181.9,487.7 L181.2,487.7 L180.5,487.7 L179.8,487.7 L179.1,487.7 L178.4,487.7 L177.7,487.7 L177.0,487.7 L176.3,487.7 L175.6,487.7 L174.9,487.7 L174.2,487.7 L173.5,487.7 L172.8,487.7 L172.1,487.7 L171.4,487.7 L170.7,487.7 L170.0,487.7 L169.3,487.7 L168.6,487.7 L167.9,487.7 L167.2,487.7 L166.5,487.7 L165.8,487.7 L165.1,487.7 L164.4,487.7 L163.7,487.7 L163.0,487.7 L162.3,487.7 L161.6,487.7 L160.9,487.7 L160.2,487.7 L159.5,487.8 L158.8,487.8 L158.1,487.8 L157.4,487.8 L156.7,487.9 L156.0,487.9 L155.3,487.9 L154.6,487.9 L153.9,488.0 L153.2,488.0 L152.5,488.0 L151.8,488.1 L151.1,488.1 L150.4,488.1 L149.7,488.1 L149.0,488.2 L148.3,488.2 L147.6,488.2 L146.9,488.3 L146.2,488.3 L145.5,488.4 L144.8,488.4 L144.1,488.4 L143.4,488.5 L142.7,488.5 L142.0,488.5 L141.3,488.6 L140.6,488.7 L139.9,488.6 L139.2,488.7 L138.5,488.6 L137.8,488.7 L137.1,488.9 L136.4,488.9 L135.7,488.8 L135.0,488.8 L134.3,488.9 L133.6,489.1 L132.9,489.0 L132.2,489.2 L131.5,489.3 L130.8,489.1 L130.1,489.3 L129.4,489.2 L128.7,489.4 L128.0,489.5 L127.3,489.3 L126.6,489.7 L125.9,489.7 L125.2,489.7 L124.5,489.7 L123.8,489.7 L123.1,489.7 L122.4,489.8 L121.7,489.8 L121.0,489.9 L120.3,490.3 L119.6,490.3 L118.9,490.4 L118.2,490.5 L117.5,490.5 L116.8,490.4 L116.1,490.7 L115.4,490.6 L114.7,491.1 L114.0,491.3 L113.3,491.1 L112.6,491.5 L111.9,491.7 L111.2,491.8 L110.5,492.5 L109.8,492.2 L109.1,493.0 L108.4,493.3Z" fill="#0a0f0e"/><rect x="108.4" y="518.1" width="790.2" height="0.8" fill="#3c6a3c"/></svg>
<div style="left:304.8px;top:395.4px;width:0.7px;height:136px;background:rgba(110,160,118,0.55);"></div>
<div style="left:85.4px;top:531.4px;width:814.6px;height:8px;background:#17181c;"></div>
<div style="left:211px;top:533.8px;width:63px;height:2.2px;background:#505359;border-radius:1px"></div>
<svg style="left:100px;top:532px" width="8" height="7"><polygon points="4.200,1.400 4.200,5 1.800,3.200" fill="#80848a"/></svg>
<svg style="left:825px;top:531.5px" width="70" height="8" fill="#5c6066"><polygon points="6,2 8.400,3.600 6,5.200"/><polygon points="14,5.400 17,5.400 15.500,2.800"/><rect x="20" y="3.400" width="26" height="0.600"/><rect x="21.600" y="1.600" width="1.400" height="4.200" fill="#80848a"/><polygon points="48.600,5.600 53.400,5.600 51,1.800"/><line x1="58" y1="5" x2="62" y2="1.800" stroke="#5c6066" stroke-width="0.600"/></svg>
<div style="left:0px;top:539.2px;width:900px;height:21px;background:#1c1e22;"></div>
<div style="left:0px;top:560.2px;width:900px;height:1.8px;background:#3a3d43;"></div>
<svg style="left:0;top:538px" width="900" height="24"><polygon points="0,1.2 5.600,1.2 9.600,22.2 0,22.2" fill="#4b5058"/><polygon points="652,1.2 900,1.2 900,22.2 645,22.2" fill="#4b5058"/><rect x="822" y="1.2" width="24" height="21" fill="#2f80d6"/></svg>
<svg style="left:18px;top:541.8px" width="16" height="12" fill="none" stroke="#5c6066" stroke-width="0.800"><circle cx="7.600" cy="5.800" r="2.800"/><line x1="1.800" y1="5.800" x2="3.800" y2="5.800"/><line x1="11.400" y1="5.800" x2="13.600" y2="5.800"/></svg>
<span style="left:20.4px;top:552px;font-size:4.2px;line-height:4.2px;color:#7c8086;font-weight:bold;">MIDI</span>
<div style="left:36px;top:544.2px;width:28px;height:1.8px;background:#33373d;"></div>
<div style="left:36px;top:547.4px;width:28px;height:1.8px;background:#2b2e33;"></div>
<div style="left:36px;top:544.2px;width:4.6px;height:1.8px;background:#86c8e8;"></div>
<span style="left:37.4px;top:552px;font-size:4.2px;line-height:4.2px;color:#7c8086;font-weight:bold;">Performance</span>
<svg style="left:70px;top:542.8px" width="14" height="14"><circle cx="7" cy="7" r="4.400" fill="none" stroke="#80848a" stroke-width="1.100" stroke-dasharray="1.100 1.200"/></svg>
<span style="left:88px;top:545px;font-size:5.6px;line-height:5.6px;color:#dcdee2;font-weight:bold;">44.1 kHz</span>
<span style="left:88px;top:552px;font-size:5px;line-height:5px;color:#dcdee2;font-weight:bold;">3.7 ms</span>
<span style="left:118px;top:545px;font-size:5.4px;line-height:5.4px;color:#c4c6ca;">22:08 days</span>
<span style="left:118.6px;top:553px;font-size:4.2px;line-height:4.2px;color:#6a6e75;font-weight:bold;">Record Max</span>
<span style="left:157px;top:545px;font-size:5.4px;line-height:5.4px;color:#c4c6ca;">00:01:01.067</span>
<span style="left:164px;top:553px;font-size:4.2px;line-height:4.2px;color:#6a6e75;font-weight:bold;">Seconds</span>
<span style="left:204.6px;top:544px;font-size:7.4px;line-height:7.4px;color:#f0f2f4;font-weight:bold;letter-spacing:0.62px">00037.04.03.32</span>
<span style="left:226.6px;top:553px;font-size:4.2px;line-height:4.2px;color:#6a6e75;font-weight:bold;">Bars</span>
<svg style="left:270px;top:540.8px" width="130" height="18" fill="#e2e4e8">
<polygon points="7,6.800 7,11.200 3.600,9"/>
<polygon points="17,6.800 17,11.200 13.400,9"/><polygon points="20.600,6.800 20.600,11.200 17,9"/>
<polygon points="26.400,6.800 26.400,11.200 30,9"/><polygon points="30,6.800 30,11.200 33.600,9"/>
<polygon points="37,6.800 37,11.200 40.600,9"/>
<rect x="47.600" y="7" width="0.900" height="4.200"/><polygon points="52.400,6.800 52.400,11.200 48.800,9"/>
<rect x="63" y="5" width="9" height="8.600" fill="#c6c8cc"/>
<polygon points="80,5 80,14 88,9.500" fill="#6ee830"/>
<circle cx="98.400" cy="9.400" r="4.300" fill="#d0d2d6"/>
<path d="M112,11.600 a2.600,2.600 0 1 1 3.600,-3.600 l2.400,2.400 a2.600,2.600 0 1 0 3.600,-3.600" fill="none" stroke="#2f9ae6" stroke-width="1.100"/>
<rect x="109.400" y="4.600" width="15" height="9.600" rx="3.600" fill="none" stroke="#2f9ae6" stroke-width="0.900"/>
</svg>
<span style="left:402px;top:546px;font-size:4.4px;line-height:4.4px;color:#6a6e75;font-weight:bold;">L</span>
<span style="left:402px;top:553px;font-size:4.4px;line-height:4.4px;color:#6a6e75;font-weight:bold;">R</span>
<span style="left:410px;top:545px;font-size:5.2px;line-height:5.2px;color:#c6c8cc;letter-spacing:0.45px">00001.01.01.00</span>
<span style="left:410px;top:552px;font-size:5.2px;line-height:5.2px;color:#c6c8cc;letter-spacing:0.45px">00123.01.01.00</span>
<span style="left:461px;top:545px;font-size:5.4px;line-height:5.4px;color:#dcdee2;font-weight:bold;">Off</span>
<span style="left:460.6px;top:553px;font-size:4.2px;line-height:4.2px;color:#6a6e75;font-weight:bold;">Sync</span>
<svg style="left:476px;top:541.8px" width="70" height="18" fill="#80848a" stroke="none"><path d="M1.600,4.600 q2,-1.600 3.600,0 q1.600,1.400 3,0" fill="none" stroke="#80848a" stroke-width="0.700"/><circle cx="4.400" cy="11.400" r="1.400" fill="none" stroke="#80848a" stroke-width="0.700"/><rect x="13" y="3.600" width="0.700" height="3"/><polygon points="14.600,3.800 14.600,6.400 17,5.100"/><rect x="13.400" y="10.400" width="0.700" height="2.400"/><rect x="17" y="10.400" width="0.700" height="2.400"/><rect x="13.400" y="11.300" width="4" height="0.600"/><circle cx="28" cy="5" r="1.600"/><path d="M34.600,3.600 l2.400,3.200 m-2.400,0 l1.200,-1.600" stroke="#80848a" stroke-width="0.700" fill="none"/><polygon points="44.400,6.600 48.400,6.600 46.400,3"/></svg>
<span style="left:500.6px;top:553px;font-size:4.2px;line-height:4.2px;color:#6a6e75;font-weight:bold;">Metronome</span>
<span style="left:534px;top:545px;font-size:5.4px;line-height:5.4px;color:#dcdee2;font-weight:bold;">4 / 4</span>
<span style="left:533.6px;top:553px;font-size:4.2px;line-height:4.2px;color:#6a6e75;font-weight:bold;">Timing</span>
<span style="left:553px;top:545px;font-size:5.4px;line-height:5.4px;color:#dcdee2;font-weight:bold;">C<span style="position:static;font-family:'DejaVu Sans',sans-serif;font-size:4.8px">♭</span>m</span>
<span style="left:556px;top:553px;font-size:4.2px;line-height:4.2px;color:#6a6e75;font-weight:bold;">Key</span>
<span style="left:571.6px;top:545px;font-size:5.4px;line-height:5.4px;color:#dcdee2;font-weight:bold;">145.00</span>
<span style="left:573.6px;top:553px;font-size:4.2px;line-height:4.2px;color:#6a6e75;font-weight:bold;">Tempo</span>
<div style="left:596.4px;top:543.9px;width:29.6px;height:4.2px;background:#2a4f78;"></div>
<div style="left:596.4px;top:543.9px;width:25.6px;height:4.2px;background:#2f7fc8;"></div>
<div style="left:596.4px;top:543.9px;width:25.6px;height:1.3px;background:#58a8ec;"></div>
<div style="left:596.4px;top:551.4px;width:29.6px;height:4.2px;background:#2a4f78;"></div>
<div style="left:596.4px;top:551.4px;width:22.6px;height:4.2px;background:#2f7fc8;"></div>
<div style="left:596.4px;top:551.4px;width:22.6px;height:1.3px;background:#58a8ec;"></div>
<svg style="left:627px;top:550.5px" width="12" height="7"><rect x="2.600" y="1.200" width="7.400" height="3.800" rx="1.900" fill="#3fb0f0"/><circle cx="8" cy="3.100" r="1.300" fill="#fff"/></svg>
<span style="left:827.6px;top:550px;font-size:5.2px;line-height:5.2px;color:#f2f6fa;font-weight:bold;">Edit</span>
<span style="left:853.4px;top:550px;font-size:5.2px;line-height:5.2px;color:#d4d6da;font-weight:bold;">Mix</span>
<span style="left:875.6px;top:550px;font-size:5.2px;line-height:5.2px;color:#d4d6da;font-weight:bold;">Browse</span>
<div style="left:0px;top:538.8px;width:900px;height:0.6px;background:#0f1013;"></div>
</div></body></html>
